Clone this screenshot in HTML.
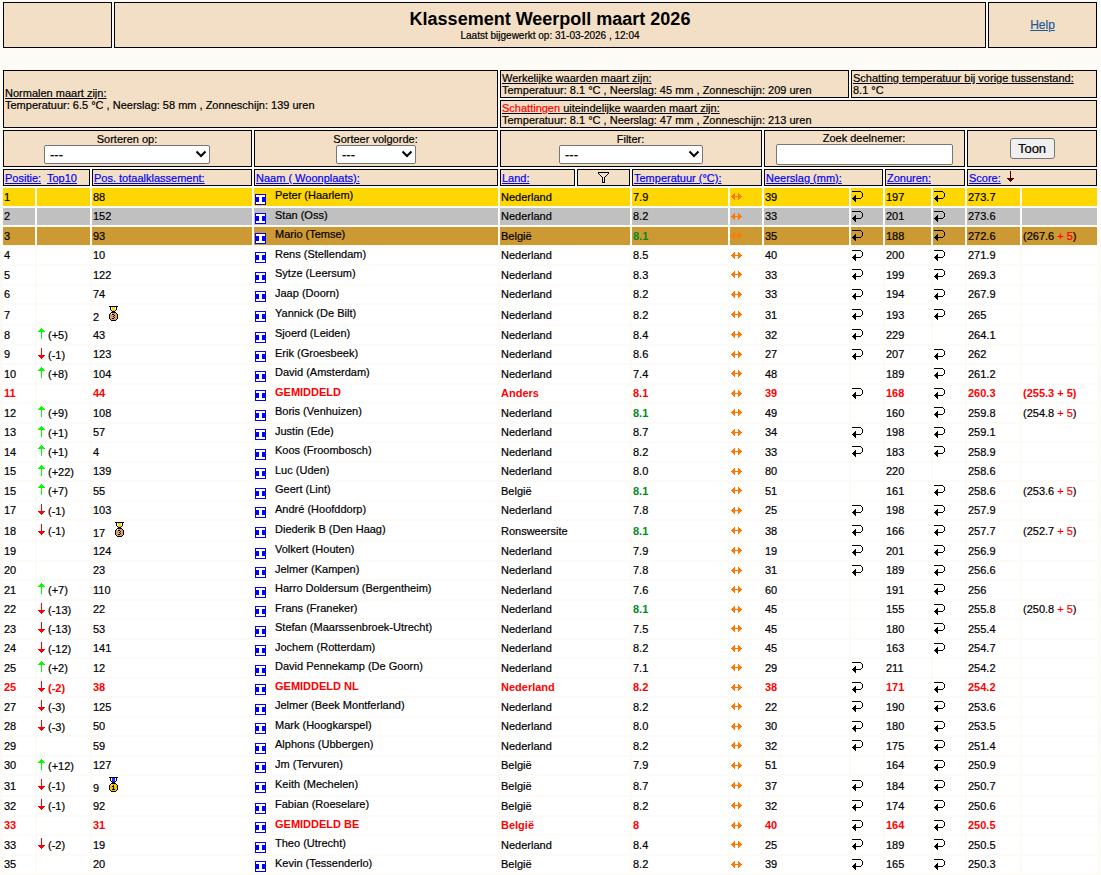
<!DOCTYPE html>
<html><head><meta charset="utf-8"><title>Klassement Weerpoll maart 2026</title>
<style>
html,body{margin:0;padding:0;}
body{background:#fcfbf6;width:1101px;height:875px;overflow:hidden;position:relative;font-family:'Liberation Sans',sans-serif;}
.bx{position:absolute;box-sizing:border-box;border:1px solid #000;}
.r{position:absolute;}
.t{position:absolute;white-space:nowrap;line-height:20px;height:20px;color:#000;-webkit-text-stroke:0.2px currentColor;}
.t.bd{-webkit-text-stroke:0;}
.t.c span{position:absolute;left:0;transform:translateX(-50%);white-space:nowrap;}
.ic{position:absolute;overflow:visible;}
.sel{position:absolute;box-sizing:border-box;border:1px solid #767676;border-radius:2px;background:#fff;}
.btn{position:absolute;box-sizing:border-box;border:1px solid #767676;border-radius:3px;background:#efefef;}
u{text-decoration:underline;}
</style></head><body>
<div class="bx" style="left:3px;top:2px;width:109px;height:46px;background:#f3dfc6;"></div>
<div class="bx" style="left:114px;top:2px;width:872px;height:46px;background:#f3dfc6;"></div>
<div class="bx" style="left:988px;top:2px;width:109px;height:46px;background:#f3dfc6;"></div>
<div class="t c bd" style="left:550px;top:9px;font-size:18px;width:0;font-weight:bold;"><span>Klassement Weerpoll maart 2026</span></div>
<div class="t c" style="left:550px;top:26px;font-size:10px;width:0;"><span>Laatst bijgewerkt op: 31-03-2026 , 12:04</span></div>
<div class="t c" style="left:1042.5px;top:15px;font-size:12px;width:0;color:#1e5a96;"><span><u>Help</u></span></div>
<div class="bx" style="left:3px;top:70px;width:495px;height:58px;background:#f3dfc6;"></div>
<div class="t" style="left:5px;top:83px;font-size:11px;"><u>Normalen maart zijn:</u></div>
<div class="t" style="left:5px;top:95px;font-size:11px;">Temperatuur: 6.5 &deg;C , Neerslag: 58 mm , Zonneschijn: 139 uren</div>
<div class="bx" style="left:500px;top:70px;width:349px;height:28px;background:#f3dfc6;"></div>
<div class="t" style="left:502px;top:68px;font-size:11px;"><u>Werkelijke waarden maart zijn:</u></div>
<div class="t" style="left:502px;top:80px;font-size:11px;">Temperatuur: 8.1 &deg;C , Neerslag: 45 mm , Zonneschijn: 209 uren</div>
<div class="bx" style="left:851px;top:70px;width:246px;height:28px;background:#f3dfc6;"></div>
<div class="t" style="left:853px;top:68px;font-size:11px;"><u>Schatting temperatuur bij vorige tussenstand:</u></div>
<div class="t" style="left:853px;top:80px;font-size:11px;">8.1 &deg;C</div>
<div class="bx" style="left:500px;top:100px;width:597px;height:28px;background:#f3dfc6;"></div>
<div class="t" style="left:502px;top:98px;font-size:11px;"><u><span style="color:#f00">Schattingen</span> uiteindelijke waarden maart zijn:</u></div>
<div class="t" style="left:502px;top:110px;font-size:11px;">Temperatuur: 8.1 &deg;C , Neerslag: 47 mm , Zonneschijn: 213 uren</div>
<div class="bx" style="left:3px;top:130px;width:249px;height:37px;background:#f3dfc6;"></div>
<div class="bx" style="left:254px;top:130px;width:244px;height:37px;background:#f3dfc6;"></div>
<div class="bx" style="left:500px;top:130px;width:262px;height:37px;background:#f3dfc6;"></div>
<div class="bx" style="left:764px;top:130px;width:201px;height:37px;background:#f3dfc6;"></div>
<div class="bx" style="left:967px;top:130px;width:130px;height:37px;background:#f3dfc6;"></div>
<div class="t c" style="left:127px;top:129px;font-size:11px;width:0;"><span>Sorteren op:</span></div>
<div class="t c" style="left:375.5px;top:129px;font-size:11px;width:0;"><span>Sorteer volgorde:</span></div>
<div class="t c" style="left:630.5px;top:129px;font-size:11px;width:0;"><span>Filter:</span></div>
<div class="t c" style="left:864px;top:128px;font-size:11px;width:0;"><span>Zoek deelnemer:</span></div>
<div class="sel" style="left:44px;top:145px;width:166px;height:19px"></div>
<div class="t" style="left:50px;top:145px;font-size:13px;font-size:13px;">---</div>
<svg class="ic" style="left:195px;top:150px" width="12" height="9"><path d="M1.5 1.5 L6 6 L10.5 1.5" stroke="#000" stroke-width="2" fill="none"/></svg>
<div class="sel" style="left:336px;top:145px;width:80px;height:19px"></div>
<div class="t" style="left:342px;top:145px;font-size:13px;font-size:13px;">---</div>
<svg class="ic" style="left:401px;top:150px" width="12" height="9"><path d="M1.5 1.5 L6 6 L10.5 1.5" stroke="#000" stroke-width="2" fill="none"/></svg>
<div class="sel" style="left:559px;top:145px;width:144px;height:19px"></div>
<div class="t" style="left:565px;top:145px;font-size:13px;font-size:13px;">---</div>
<svg class="ic" style="left:688px;top:150px" width="12" height="9"><path d="M1.5 1.5 L6 6 L10.5 1.5" stroke="#000" stroke-width="2" fill="none"/></svg>
<div class="sel" style="left:776px;top:144px;width:177px;height:21px"></div>
<div class="btn" style="left:1010px;top:138px;width:45px;height:21px"></div>
<div class="t c" style="left:1032px;top:139px;font-size:13px;width:0;"><span>Toon</span></div>
<div class="bx" style="left:3px;top:169px;width:87px;height:17px;background:#f3dfc6;"></div>
<div class="bx" style="left:92px;top:169px;width:160px;height:17px;background:#f3dfc6;"></div>
<div class="bx" style="left:254px;top:169px;width:244px;height:17px;background:#f3dfc6;"></div>
<div class="bx" style="left:500px;top:169px;width:75px;height:17px;background:#f3dfc6;"></div>
<div class="bx" style="left:577px;top:169px;width:53px;height:17px;background:#f3dfc6;"></div>
<div class="bx" style="left:632px;top:169px;width:130px;height:17px;background:#f3dfc6;"></div>
<div class="bx" style="left:764px;top:169px;width:119px;height:17px;background:#f3dfc6;"></div>
<div class="bx" style="left:885px;top:169px;width:80px;height:17px;background:#f3dfc6;"></div>
<div class="bx" style="left:967px;top:169px;width:130px;height:17px;background:#f3dfc6;"></div>
<div class="t" style="left:5px;top:168px;font-size:11px;color:#0000ff;"><u>Positie:</u></div>
<div class="t" style="left:47px;top:168px;font-size:11px;color:#0000ff;"><u>Top10</u></div>
<div class="t" style="left:94px;top:168px;font-size:11px;color:#0000ff;"><u>Pos. totaalklassement:</u></div>
<div class="t" style="left:256px;top:168px;font-size:11px;color:#0000ff;"><u>Naam ( Woonplaats):</u></div>
<div class="t" style="left:502px;top:168px;font-size:11px;color:#0000ff;"><u>Land:</u></div>
<svg class="ic" style="left:598px;top:172px" width="11" height="11" shape-rendering="crispEdges"><rect x="0" y="0" width="11" height="1" fill="#000000"/><rect x="0" y="1" width="1" height="1" fill="#000000"/><rect x="10" y="1" width="1" height="1" fill="#000000"/><rect x="1" y="2" width="1" height="1" fill="#000000"/><rect x="9" y="2" width="1" height="1" fill="#000000"/><rect x="2" y="3" width="1" height="1" fill="#000000"/><rect x="8" y="3" width="1" height="1" fill="#000000"/><rect x="3" y="4" width="1" height="1" fill="#000000"/><rect x="7" y="4" width="1" height="1" fill="#000000"/><rect x="4" y="5" width="1" height="1" fill="#000000"/><rect x="6" y="5" width="1" height="1" fill="#000000"/><rect x="4" y="6" width="1" height="1" fill="#000000"/><rect x="6" y="6" width="1" height="1" fill="#000000"/><rect x="4" y="7" width="1" height="1" fill="#000000"/><rect x="6" y="7" width="1" height="1" fill="#000000"/><rect x="4" y="8" width="1" height="1" fill="#000000"/><rect x="6" y="8" width="1" height="1" fill="#000000"/><rect x="4" y="9" width="1" height="1" fill="#000000"/><rect x="6" y="9" width="1" height="1" fill="#000000"/><rect x="4" y="10" width="3" height="1" fill="#000000"/></svg>
<div class="t" style="left:634px;top:168px;font-size:11px;color:#0000ff;"><u>Temperatuur (&deg;C):</u></div>
<div class="t" style="left:766px;top:168px;font-size:11px;color:#0000ff;"><u>Neerslag (mm):</u></div>
<div class="t" style="left:887px;top:168px;font-size:11px;color:#0000ff;"><u>Zonuren:</u></div>
<div class="t" style="left:969px;top:168px;font-size:11px;color:#0000ff;"><u>Score:</u></div>
<svg class="ic" style="left:1007px;top:171px" width="7" height="11" shape-rendering="crispEdges"><rect x="3" y="0" width="1" height="1" fill="#4c0000"/><rect x="3" y="1" width="1" height="1" fill="#4c0000"/><rect x="3" y="2" width="1" height="1" fill="#4c0000"/><rect x="3" y="3" width="1" height="1" fill="#4c0000"/><rect x="3" y="4" width="1" height="1" fill="#4c0000"/><rect x="3" y="5" width="1" height="1" fill="#4c0000"/><rect x="3" y="6" width="1" height="1" fill="#4c0000"/><rect x="0" y="7" width="7" height="1" fill="#4c0000"/><rect x="1" y="8" width="5" height="1" fill="#4c0000"/><rect x="2" y="9" width="3" height="1" fill="#4c0000"/><rect x="3" y="10" width="1" height="1" fill="#4c0000"/></svg>
<div class="r" style="left:3px;top:188px;width:32px;height:18px;background:#ffd700"></div>
<div class="r" style="left:37px;top:188px;width:53px;height:18px;background:#ffd700"></div>
<div class="r" style="left:92px;top:188px;width:160px;height:18px;background:#ffd700"></div>
<div class="r" style="left:254px;top:188px;width:244px;height:18px;background:#ffd700"></div>
<div class="r" style="left:500px;top:188px;width:130px;height:18px;background:#ffd700"></div>
<div class="r" style="left:632px;top:188px;width:96px;height:18px;background:#ffd700"></div>
<div class="r" style="left:730px;top:188px;width:32px;height:18px;background:#ffd700"></div>
<div class="r" style="left:764px;top:188px;width:85px;height:18px;background:#ffd700"></div>
<div class="r" style="left:851px;top:188px;width:32px;height:18px;background:#ffd700"></div>
<div class="r" style="left:885px;top:188px;width:46px;height:18px;background:#ffd700"></div>
<div class="r" style="left:933px;top:188px;width:32px;height:18px;background:#ffd700"></div>
<div class="r" style="left:967px;top:188px;width:53px;height:18px;background:#ffd700"></div>
<div class="r" style="left:1022px;top:188px;width:75px;height:18px;background:#ffd700"></div>
<div class="t" style="left:4px;top:187px;font-size:11px;">1</div>
<div class="t" style="left:93px;top:187px;font-size:11px;">88</div>
<svg class="ic" style="left:255px;top:194px" width="11" height="11" shape-rendering="crispEdges"><rect x="0" y="0" width="11" height="1" fill="#0000ff"/><rect x="0" y="1" width="1" height="1" fill="#0000ff"/><rect x="1" y="1" width="9" height="1" fill="#ffffff"/><rect x="10" y="1" width="1" height="1" fill="#0000ff"/><rect x="0" y="2" width="1" height="1" fill="#0000ff"/><rect x="1" y="2" width="9" height="1" fill="#ffffff"/><rect x="10" y="2" width="1" height="1" fill="#0000ff"/><rect x="0" y="3" width="4" height="1" fill="#0000ff"/><rect x="4" y="3" width="3" height="1" fill="#ffffff"/><rect x="7" y="3" width="4" height="1" fill="#0000ff"/><rect x="0" y="4" width="4" height="1" fill="#0000ff"/><rect x="4" y="4" width="3" height="1" fill="#ffffff"/><rect x="7" y="4" width="4" height="1" fill="#0000ff"/><rect x="0" y="5" width="4" height="1" fill="#0000ff"/><rect x="4" y="5" width="3" height="1" fill="#ffffff"/><rect x="7" y="5" width="4" height="1" fill="#0000ff"/><rect x="0" y="6" width="4" height="1" fill="#0000ff"/><rect x="4" y="6" width="3" height="1" fill="#ffffff"/><rect x="7" y="6" width="4" height="1" fill="#0000ff"/><rect x="0" y="7" width="4" height="1" fill="#0000ff"/><rect x="4" y="7" width="3" height="1" fill="#ffffff"/><rect x="7" y="7" width="4" height="1" fill="#0000ff"/><rect x="0" y="8" width="1" height="1" fill="#0000ff"/><rect x="1" y="8" width="9" height="1" fill="#ffffff"/><rect x="10" y="8" width="1" height="1" fill="#0000ff"/><rect x="0" y="9" width="1" height="1" fill="#0000ff"/><rect x="1" y="9" width="9" height="1" fill="#ffffff"/><rect x="10" y="9" width="1" height="1" fill="#0000ff"/><rect x="0" y="10" width="11" height="1" fill="#0000ff"/></svg>
<div class="t" style="left:275px;top:185px;font-size:11px;">Peter (Haarlem)</div>
<div class="t" style="left:501px;top:187px;font-size:11px;">Nederland</div>
<div class="t" style="left:633px;top:187px;font-size:11px;">7.9</div>
<svg class="ic" style="left:731px;top:193px" width="11" height="7" shape-rendering="crispEdges"><rect x="3" y="0" width="1" height="1" fill="#ff7800"/><rect x="7" y="0" width="1" height="1" fill="#ff7800"/><rect x="2" y="1" width="2" height="1" fill="#ff7800"/><rect x="7" y="1" width="2" height="1" fill="#ff7800"/><rect x="1" y="2" width="3" height="1" fill="#ff7800"/><rect x="7" y="2" width="3" height="1" fill="#ff7800"/><rect x="0" y="3" width="11" height="1" fill="#ff7800"/><rect x="1" y="4" width="3" height="1" fill="#ff7800"/><rect x="7" y="4" width="3" height="1" fill="#ff7800"/><rect x="2" y="5" width="2" height="1" fill="#ff7800"/><rect x="7" y="5" width="2" height="1" fill="#ff7800"/><rect x="3" y="6" width="1" height="1" fill="#ff7800"/><rect x="7" y="6" width="1" height="1" fill="#ff7800"/></svg>
<div class="t" style="left:765px;top:187px;font-size:11px;">39</div>
<svg class="ic" style="left:852px;top:191px" width="11" height="11" shape-rendering="crispEdges"><rect x="0" y="0" width="9" height="1" fill="#000000"/><rect x="9" y="1" width="1" height="1" fill="#000000"/><rect x="10" y="2" width="1" height="1" fill="#000000"/><rect x="10" y="3" width="1" height="1" fill="#000000"/><rect x="3" y="4" width="1" height="1" fill="#000000"/><rect x="10" y="4" width="1" height="1" fill="#000000"/><rect x="2" y="5" width="2" height="1" fill="#000000"/><rect x="10" y="5" width="1" height="1" fill="#000000"/><rect x="1" y="6" width="3" height="1" fill="#000000"/><rect x="9" y="6" width="1" height="1" fill="#000000"/><rect x="0" y="7" width="9" height="1" fill="#000000"/><rect x="1" y="8" width="3" height="1" fill="#000000"/><rect x="2" y="9" width="2" height="1" fill="#000000"/><rect x="3" y="10" width="1" height="1" fill="#000000"/></svg>
<div class="t" style="left:886px;top:187px;font-size:11px;">197</div>
<svg class="ic" style="left:934px;top:191px" width="11" height="11" shape-rendering="crispEdges"><rect x="0" y="0" width="9" height="1" fill="#000000"/><rect x="9" y="1" width="1" height="1" fill="#000000"/><rect x="10" y="2" width="1" height="1" fill="#000000"/><rect x="10" y="3" width="1" height="1" fill="#000000"/><rect x="3" y="4" width="1" height="1" fill="#000000"/><rect x="10" y="4" width="1" height="1" fill="#000000"/><rect x="2" y="5" width="2" height="1" fill="#000000"/><rect x="10" y="5" width="1" height="1" fill="#000000"/><rect x="1" y="6" width="3" height="1" fill="#000000"/><rect x="9" y="6" width="1" height="1" fill="#000000"/><rect x="0" y="7" width="9" height="1" fill="#000000"/><rect x="1" y="8" width="3" height="1" fill="#000000"/><rect x="2" y="9" width="2" height="1" fill="#000000"/><rect x="3" y="10" width="1" height="1" fill="#000000"/></svg>
<div class="t" style="left:968px;top:187px;font-size:11px;">273.7</div>
<div class="r" style="left:3px;top:208px;width:32px;height:17px;background:#c0c0c0"></div>
<div class="r" style="left:37px;top:208px;width:53px;height:17px;background:#c0c0c0"></div>
<div class="r" style="left:92px;top:208px;width:160px;height:17px;background:#c0c0c0"></div>
<div class="r" style="left:254px;top:208px;width:244px;height:17px;background:#c0c0c0"></div>
<div class="r" style="left:500px;top:208px;width:130px;height:17px;background:#c0c0c0"></div>
<div class="r" style="left:632px;top:208px;width:96px;height:17px;background:#c0c0c0"></div>
<div class="r" style="left:730px;top:208px;width:32px;height:17px;background:#c0c0c0"></div>
<div class="r" style="left:764px;top:208px;width:85px;height:17px;background:#c0c0c0"></div>
<div class="r" style="left:851px;top:208px;width:32px;height:17px;background:#c0c0c0"></div>
<div class="r" style="left:885px;top:208px;width:46px;height:17px;background:#c0c0c0"></div>
<div class="r" style="left:933px;top:208px;width:32px;height:17px;background:#c0c0c0"></div>
<div class="r" style="left:967px;top:208px;width:53px;height:17px;background:#c0c0c0"></div>
<div class="r" style="left:1022px;top:208px;width:75px;height:17px;background:#c0c0c0"></div>
<div class="t" style="left:4px;top:206px;font-size:11px;">2</div>
<div class="t" style="left:93px;top:206px;font-size:11px;">152</div>
<svg class="ic" style="left:255px;top:213px" width="11" height="11" shape-rendering="crispEdges"><rect x="0" y="0" width="11" height="1" fill="#0000ff"/><rect x="0" y="1" width="1" height="1" fill="#0000ff"/><rect x="1" y="1" width="9" height="1" fill="#ffffff"/><rect x="10" y="1" width="1" height="1" fill="#0000ff"/><rect x="0" y="2" width="1" height="1" fill="#0000ff"/><rect x="1" y="2" width="9" height="1" fill="#ffffff"/><rect x="10" y="2" width="1" height="1" fill="#0000ff"/><rect x="0" y="3" width="4" height="1" fill="#0000ff"/><rect x="4" y="3" width="3" height="1" fill="#ffffff"/><rect x="7" y="3" width="4" height="1" fill="#0000ff"/><rect x="0" y="4" width="4" height="1" fill="#0000ff"/><rect x="4" y="4" width="3" height="1" fill="#ffffff"/><rect x="7" y="4" width="4" height="1" fill="#0000ff"/><rect x="0" y="5" width="4" height="1" fill="#0000ff"/><rect x="4" y="5" width="3" height="1" fill="#ffffff"/><rect x="7" y="5" width="4" height="1" fill="#0000ff"/><rect x="0" y="6" width="4" height="1" fill="#0000ff"/><rect x="4" y="6" width="3" height="1" fill="#ffffff"/><rect x="7" y="6" width="4" height="1" fill="#0000ff"/><rect x="0" y="7" width="4" height="1" fill="#0000ff"/><rect x="4" y="7" width="3" height="1" fill="#ffffff"/><rect x="7" y="7" width="4" height="1" fill="#0000ff"/><rect x="0" y="8" width="1" height="1" fill="#0000ff"/><rect x="1" y="8" width="9" height="1" fill="#ffffff"/><rect x="10" y="8" width="1" height="1" fill="#0000ff"/><rect x="0" y="9" width="1" height="1" fill="#0000ff"/><rect x="1" y="9" width="9" height="1" fill="#ffffff"/><rect x="10" y="9" width="1" height="1" fill="#0000ff"/><rect x="0" y="10" width="11" height="1" fill="#0000ff"/></svg>
<div class="t" style="left:275px;top:205px;font-size:11px;">Stan (Oss)</div>
<div class="t" style="left:501px;top:206px;font-size:11px;">Nederland</div>
<div class="t" style="left:633px;top:206px;font-size:11px;">8.2</div>
<svg class="ic" style="left:731px;top:213px" width="11" height="7" shape-rendering="crispEdges"><rect x="3" y="0" width="1" height="1" fill="#ff7800"/><rect x="7" y="0" width="1" height="1" fill="#ff7800"/><rect x="2" y="1" width="2" height="1" fill="#ff7800"/><rect x="7" y="1" width="2" height="1" fill="#ff7800"/><rect x="1" y="2" width="3" height="1" fill="#ff7800"/><rect x="7" y="2" width="3" height="1" fill="#ff7800"/><rect x="0" y="3" width="11" height="1" fill="#ff7800"/><rect x="1" y="4" width="3" height="1" fill="#ff7800"/><rect x="7" y="4" width="3" height="1" fill="#ff7800"/><rect x="2" y="5" width="2" height="1" fill="#ff7800"/><rect x="7" y="5" width="2" height="1" fill="#ff7800"/><rect x="3" y="6" width="1" height="1" fill="#ff7800"/><rect x="7" y="6" width="1" height="1" fill="#ff7800"/></svg>
<div class="t" style="left:765px;top:206px;font-size:11px;">33</div>
<svg class="ic" style="left:852px;top:211px" width="11" height="11" shape-rendering="crispEdges"><rect x="0" y="0" width="9" height="1" fill="#000000"/><rect x="9" y="1" width="1" height="1" fill="#000000"/><rect x="10" y="2" width="1" height="1" fill="#000000"/><rect x="10" y="3" width="1" height="1" fill="#000000"/><rect x="3" y="4" width="1" height="1" fill="#000000"/><rect x="10" y="4" width="1" height="1" fill="#000000"/><rect x="2" y="5" width="2" height="1" fill="#000000"/><rect x="10" y="5" width="1" height="1" fill="#000000"/><rect x="1" y="6" width="3" height="1" fill="#000000"/><rect x="9" y="6" width="1" height="1" fill="#000000"/><rect x="0" y="7" width="9" height="1" fill="#000000"/><rect x="1" y="8" width="3" height="1" fill="#000000"/><rect x="2" y="9" width="2" height="1" fill="#000000"/><rect x="3" y="10" width="1" height="1" fill="#000000"/></svg>
<div class="t" style="left:886px;top:206px;font-size:11px;">201</div>
<svg class="ic" style="left:934px;top:211px" width="11" height="11" shape-rendering="crispEdges"><rect x="0" y="0" width="9" height="1" fill="#000000"/><rect x="9" y="1" width="1" height="1" fill="#000000"/><rect x="10" y="2" width="1" height="1" fill="#000000"/><rect x="10" y="3" width="1" height="1" fill="#000000"/><rect x="3" y="4" width="1" height="1" fill="#000000"/><rect x="10" y="4" width="1" height="1" fill="#000000"/><rect x="2" y="5" width="2" height="1" fill="#000000"/><rect x="10" y="5" width="1" height="1" fill="#000000"/><rect x="1" y="6" width="3" height="1" fill="#000000"/><rect x="9" y="6" width="1" height="1" fill="#000000"/><rect x="0" y="7" width="9" height="1" fill="#000000"/><rect x="1" y="8" width="3" height="1" fill="#000000"/><rect x="2" y="9" width="2" height="1" fill="#000000"/><rect x="3" y="10" width="1" height="1" fill="#000000"/></svg>
<div class="t" style="left:968px;top:206px;font-size:11px;">273.6</div>
<div class="r" style="left:3px;top:227px;width:32px;height:18px;background:#cc9933"></div>
<div class="r" style="left:37px;top:227px;width:53px;height:18px;background:#cc9933"></div>
<div class="r" style="left:92px;top:227px;width:160px;height:18px;background:#cc9933"></div>
<div class="r" style="left:254px;top:227px;width:244px;height:18px;background:#cc9933"></div>
<div class="r" style="left:500px;top:227px;width:130px;height:18px;background:#cc9933"></div>
<div class="r" style="left:632px;top:227px;width:96px;height:18px;background:#cc9933"></div>
<div class="r" style="left:730px;top:227px;width:32px;height:18px;background:#cc9933"></div>
<div class="r" style="left:764px;top:227px;width:85px;height:18px;background:#cc9933"></div>
<div class="r" style="left:851px;top:227px;width:32px;height:18px;background:#cc9933"></div>
<div class="r" style="left:885px;top:227px;width:46px;height:18px;background:#cc9933"></div>
<div class="r" style="left:933px;top:227px;width:32px;height:18px;background:#cc9933"></div>
<div class="r" style="left:967px;top:227px;width:53px;height:18px;background:#cc9933"></div>
<div class="r" style="left:1022px;top:227px;width:75px;height:18px;background:#cc9933"></div>
<div class="t" style="left:4px;top:226px;font-size:11px;">3</div>
<div class="t" style="left:93px;top:226px;font-size:11px;">93</div>
<svg class="ic" style="left:255px;top:233px" width="11" height="11" shape-rendering="crispEdges"><rect x="0" y="0" width="11" height="1" fill="#0000ff"/><rect x="0" y="1" width="1" height="1" fill="#0000ff"/><rect x="1" y="1" width="9" height="1" fill="#ffffff"/><rect x="10" y="1" width="1" height="1" fill="#0000ff"/><rect x="0" y="2" width="1" height="1" fill="#0000ff"/><rect x="1" y="2" width="9" height="1" fill="#ffffff"/><rect x="10" y="2" width="1" height="1" fill="#0000ff"/><rect x="0" y="3" width="4" height="1" fill="#0000ff"/><rect x="4" y="3" width="3" height="1" fill="#ffffff"/><rect x="7" y="3" width="4" height="1" fill="#0000ff"/><rect x="0" y="4" width="4" height="1" fill="#0000ff"/><rect x="4" y="4" width="3" height="1" fill="#ffffff"/><rect x="7" y="4" width="4" height="1" fill="#0000ff"/><rect x="0" y="5" width="4" height="1" fill="#0000ff"/><rect x="4" y="5" width="3" height="1" fill="#ffffff"/><rect x="7" y="5" width="4" height="1" fill="#0000ff"/><rect x="0" y="6" width="4" height="1" fill="#0000ff"/><rect x="4" y="6" width="3" height="1" fill="#ffffff"/><rect x="7" y="6" width="4" height="1" fill="#0000ff"/><rect x="0" y="7" width="4" height="1" fill="#0000ff"/><rect x="4" y="7" width="3" height="1" fill="#ffffff"/><rect x="7" y="7" width="4" height="1" fill="#0000ff"/><rect x="0" y="8" width="1" height="1" fill="#0000ff"/><rect x="1" y="8" width="9" height="1" fill="#ffffff"/><rect x="10" y="8" width="1" height="1" fill="#0000ff"/><rect x="0" y="9" width="1" height="1" fill="#0000ff"/><rect x="1" y="9" width="9" height="1" fill="#ffffff"/><rect x="10" y="9" width="1" height="1" fill="#0000ff"/><rect x="0" y="10" width="11" height="1" fill="#0000ff"/></svg>
<div class="t" style="left:275px;top:224px;font-size:11px;">Mario (Temse)</div>
<div class="t" style="left:501px;top:226px;font-size:11px;">Belgi&euml;</div>
<div class="t bd" style="left:633px;top:226px;font-size:11px;font-weight:bold;color:#008c1e;">8.1</div>
<svg class="ic" style="left:731px;top:232px" width="11" height="7" shape-rendering="crispEdges"><rect x="3" y="0" width="1" height="1" fill="#ff7800"/><rect x="7" y="0" width="1" height="1" fill="#ff7800"/><rect x="2" y="1" width="2" height="1" fill="#ff7800"/><rect x="7" y="1" width="2" height="1" fill="#ff7800"/><rect x="1" y="2" width="3" height="1" fill="#ff7800"/><rect x="7" y="2" width="3" height="1" fill="#ff7800"/><rect x="0" y="3" width="11" height="1" fill="#ff7800"/><rect x="1" y="4" width="3" height="1" fill="#ff7800"/><rect x="7" y="4" width="3" height="1" fill="#ff7800"/><rect x="2" y="5" width="2" height="1" fill="#ff7800"/><rect x="7" y="5" width="2" height="1" fill="#ff7800"/><rect x="3" y="6" width="1" height="1" fill="#ff7800"/><rect x="7" y="6" width="1" height="1" fill="#ff7800"/></svg>
<div class="t" style="left:765px;top:226px;font-size:11px;">35</div>
<svg class="ic" style="left:852px;top:230px" width="11" height="11" shape-rendering="crispEdges"><rect x="0" y="0" width="9" height="1" fill="#000000"/><rect x="9" y="1" width="1" height="1" fill="#000000"/><rect x="10" y="2" width="1" height="1" fill="#000000"/><rect x="10" y="3" width="1" height="1" fill="#000000"/><rect x="3" y="4" width="1" height="1" fill="#000000"/><rect x="10" y="4" width="1" height="1" fill="#000000"/><rect x="2" y="5" width="2" height="1" fill="#000000"/><rect x="10" y="5" width="1" height="1" fill="#000000"/><rect x="1" y="6" width="3" height="1" fill="#000000"/><rect x="9" y="6" width="1" height="1" fill="#000000"/><rect x="0" y="7" width="9" height="1" fill="#000000"/><rect x="1" y="8" width="3" height="1" fill="#000000"/><rect x="2" y="9" width="2" height="1" fill="#000000"/><rect x="3" y="10" width="1" height="1" fill="#000000"/></svg>
<div class="t" style="left:886px;top:226px;font-size:11px;">188</div>
<svg class="ic" style="left:934px;top:230px" width="11" height="11" shape-rendering="crispEdges"><rect x="0" y="0" width="9" height="1" fill="#000000"/><rect x="9" y="1" width="1" height="1" fill="#000000"/><rect x="10" y="2" width="1" height="1" fill="#000000"/><rect x="10" y="3" width="1" height="1" fill="#000000"/><rect x="3" y="4" width="1" height="1" fill="#000000"/><rect x="10" y="4" width="1" height="1" fill="#000000"/><rect x="2" y="5" width="2" height="1" fill="#000000"/><rect x="10" y="5" width="1" height="1" fill="#000000"/><rect x="1" y="6" width="3" height="1" fill="#000000"/><rect x="9" y="6" width="1" height="1" fill="#000000"/><rect x="0" y="7" width="9" height="1" fill="#000000"/><rect x="1" y="8" width="3" height="1" fill="#000000"/><rect x="2" y="9" width="2" height="1" fill="#000000"/><rect x="3" y="10" width="1" height="1" fill="#000000"/></svg>
<div class="t" style="left:968px;top:226px;font-size:11px;">272.6</div>
<div class="t" style="left:1023px;top:226px;font-size:11px;">(267.6 <span style="color:#f00">+ 5</span>)</div>
<div class="r" style="left:3px;top:247px;width:32px;height:17px;background:#ffffff"></div>
<div class="r" style="left:37px;top:247px;width:53px;height:17px;background:#ffffff"></div>
<div class="r" style="left:92px;top:247px;width:160px;height:17px;background:#ffffff"></div>
<div class="r" style="left:254px;top:247px;width:244px;height:17px;background:#ffffff"></div>
<div class="r" style="left:500px;top:247px;width:130px;height:17px;background:#ffffff"></div>
<div class="r" style="left:632px;top:247px;width:96px;height:17px;background:#ffffff"></div>
<div class="r" style="left:730px;top:247px;width:32px;height:17px;background:#ffffff"></div>
<div class="r" style="left:764px;top:247px;width:85px;height:17px;background:#ffffff"></div>
<div class="r" style="left:851px;top:247px;width:32px;height:17px;background:#ffffff"></div>
<div class="r" style="left:885px;top:247px;width:46px;height:17px;background:#ffffff"></div>
<div class="r" style="left:933px;top:247px;width:32px;height:17px;background:#ffffff"></div>
<div class="r" style="left:967px;top:247px;width:53px;height:17px;background:#ffffff"></div>
<div class="r" style="left:1022px;top:247px;width:75px;height:17px;background:#ffffff"></div>
<div class="t" style="left:4px;top:245px;font-size:11px;">4</div>
<div class="t" style="left:93px;top:245px;font-size:11px;">10</div>
<svg class="ic" style="left:255px;top:252px" width="11" height="11" shape-rendering="crispEdges"><rect x="0" y="0" width="11" height="1" fill="#0000ff"/><rect x="0" y="1" width="1" height="1" fill="#0000ff"/><rect x="1" y="1" width="9" height="1" fill="#ffffff"/><rect x="10" y="1" width="1" height="1" fill="#0000ff"/><rect x="0" y="2" width="1" height="1" fill="#0000ff"/><rect x="1" y="2" width="9" height="1" fill="#ffffff"/><rect x="10" y="2" width="1" height="1" fill="#0000ff"/><rect x="0" y="3" width="4" height="1" fill="#0000ff"/><rect x="4" y="3" width="3" height="1" fill="#ffffff"/><rect x="7" y="3" width="4" height="1" fill="#0000ff"/><rect x="0" y="4" width="4" height="1" fill="#0000ff"/><rect x="4" y="4" width="3" height="1" fill="#ffffff"/><rect x="7" y="4" width="4" height="1" fill="#0000ff"/><rect x="0" y="5" width="4" height="1" fill="#0000ff"/><rect x="4" y="5" width="3" height="1" fill="#ffffff"/><rect x="7" y="5" width="4" height="1" fill="#0000ff"/><rect x="0" y="6" width="4" height="1" fill="#0000ff"/><rect x="4" y="6" width="3" height="1" fill="#ffffff"/><rect x="7" y="6" width="4" height="1" fill="#0000ff"/><rect x="0" y="7" width="4" height="1" fill="#0000ff"/><rect x="4" y="7" width="3" height="1" fill="#ffffff"/><rect x="7" y="7" width="4" height="1" fill="#0000ff"/><rect x="0" y="8" width="1" height="1" fill="#0000ff"/><rect x="1" y="8" width="9" height="1" fill="#ffffff"/><rect x="10" y="8" width="1" height="1" fill="#0000ff"/><rect x="0" y="9" width="1" height="1" fill="#0000ff"/><rect x="1" y="9" width="9" height="1" fill="#ffffff"/><rect x="10" y="9" width="1" height="1" fill="#0000ff"/><rect x="0" y="10" width="11" height="1" fill="#0000ff"/></svg>
<div class="t" style="left:275px;top:244px;font-size:11px;">Rens (Stellendam)</div>
<div class="t" style="left:501px;top:245px;font-size:11px;">Nederland</div>
<div class="t" style="left:633px;top:245px;font-size:11px;">8.5</div>
<svg class="ic" style="left:731px;top:252px" width="11" height="7" shape-rendering="crispEdges"><rect x="3" y="0" width="1" height="1" fill="#ff7800"/><rect x="7" y="0" width="1" height="1" fill="#ff7800"/><rect x="2" y="1" width="2" height="1" fill="#ff7800"/><rect x="7" y="1" width="2" height="1" fill="#ff7800"/><rect x="1" y="2" width="3" height="1" fill="#ff7800"/><rect x="7" y="2" width="3" height="1" fill="#ff7800"/><rect x="0" y="3" width="11" height="1" fill="#ff7800"/><rect x="1" y="4" width="3" height="1" fill="#ff7800"/><rect x="7" y="4" width="3" height="1" fill="#ff7800"/><rect x="2" y="5" width="2" height="1" fill="#ff7800"/><rect x="7" y="5" width="2" height="1" fill="#ff7800"/><rect x="3" y="6" width="1" height="1" fill="#ff7800"/><rect x="7" y="6" width="1" height="1" fill="#ff7800"/></svg>
<div class="t" style="left:765px;top:245px;font-size:11px;">40</div>
<svg class="ic" style="left:852px;top:250px" width="11" height="11" shape-rendering="crispEdges"><rect x="0" y="0" width="9" height="1" fill="#000000"/><rect x="9" y="1" width="1" height="1" fill="#000000"/><rect x="10" y="2" width="1" height="1" fill="#000000"/><rect x="10" y="3" width="1" height="1" fill="#000000"/><rect x="3" y="4" width="1" height="1" fill="#000000"/><rect x="10" y="4" width="1" height="1" fill="#000000"/><rect x="2" y="5" width="2" height="1" fill="#000000"/><rect x="10" y="5" width="1" height="1" fill="#000000"/><rect x="1" y="6" width="3" height="1" fill="#000000"/><rect x="9" y="6" width="1" height="1" fill="#000000"/><rect x="0" y="7" width="9" height="1" fill="#000000"/><rect x="1" y="8" width="3" height="1" fill="#000000"/><rect x="2" y="9" width="2" height="1" fill="#000000"/><rect x="3" y="10" width="1" height="1" fill="#000000"/></svg>
<div class="t" style="left:886px;top:245px;font-size:11px;">200</div>
<svg class="ic" style="left:934px;top:250px" width="11" height="11" shape-rendering="crispEdges"><rect x="0" y="0" width="9" height="1" fill="#000000"/><rect x="9" y="1" width="1" height="1" fill="#000000"/><rect x="10" y="2" width="1" height="1" fill="#000000"/><rect x="10" y="3" width="1" height="1" fill="#000000"/><rect x="3" y="4" width="1" height="1" fill="#000000"/><rect x="10" y="4" width="1" height="1" fill="#000000"/><rect x="2" y="5" width="2" height="1" fill="#000000"/><rect x="10" y="5" width="1" height="1" fill="#000000"/><rect x="1" y="6" width="3" height="1" fill="#000000"/><rect x="9" y="6" width="1" height="1" fill="#000000"/><rect x="0" y="7" width="9" height="1" fill="#000000"/><rect x="1" y="8" width="3" height="1" fill="#000000"/><rect x="2" y="9" width="2" height="1" fill="#000000"/><rect x="3" y="10" width="1" height="1" fill="#000000"/></svg>
<div class="t" style="left:968px;top:245px;font-size:11px;">271.9</div>
<div class="r" style="left:3px;top:266px;width:32px;height:18px;background:#ffffff"></div>
<div class="r" style="left:37px;top:266px;width:53px;height:18px;background:#ffffff"></div>
<div class="r" style="left:92px;top:266px;width:160px;height:18px;background:#ffffff"></div>
<div class="r" style="left:254px;top:266px;width:244px;height:18px;background:#ffffff"></div>
<div class="r" style="left:500px;top:266px;width:130px;height:18px;background:#ffffff"></div>
<div class="r" style="left:632px;top:266px;width:96px;height:18px;background:#ffffff"></div>
<div class="r" style="left:730px;top:266px;width:32px;height:18px;background:#ffffff"></div>
<div class="r" style="left:764px;top:266px;width:85px;height:18px;background:#ffffff"></div>
<div class="r" style="left:851px;top:266px;width:32px;height:18px;background:#ffffff"></div>
<div class="r" style="left:885px;top:266px;width:46px;height:18px;background:#ffffff"></div>
<div class="r" style="left:933px;top:266px;width:32px;height:18px;background:#ffffff"></div>
<div class="r" style="left:967px;top:266px;width:53px;height:18px;background:#ffffff"></div>
<div class="r" style="left:1022px;top:266px;width:75px;height:18px;background:#ffffff"></div>
<div class="t" style="left:4px;top:265px;font-size:11px;">5</div>
<div class="t" style="left:93px;top:265px;font-size:11px;">122</div>
<svg class="ic" style="left:255px;top:272px" width="11" height="11" shape-rendering="crispEdges"><rect x="0" y="0" width="11" height="1" fill="#0000ff"/><rect x="0" y="1" width="1" height="1" fill="#0000ff"/><rect x="1" y="1" width="9" height="1" fill="#ffffff"/><rect x="10" y="1" width="1" height="1" fill="#0000ff"/><rect x="0" y="2" width="1" height="1" fill="#0000ff"/><rect x="1" y="2" width="9" height="1" fill="#ffffff"/><rect x="10" y="2" width="1" height="1" fill="#0000ff"/><rect x="0" y="3" width="4" height="1" fill="#0000ff"/><rect x="4" y="3" width="3" height="1" fill="#ffffff"/><rect x="7" y="3" width="4" height="1" fill="#0000ff"/><rect x="0" y="4" width="4" height="1" fill="#0000ff"/><rect x="4" y="4" width="3" height="1" fill="#ffffff"/><rect x="7" y="4" width="4" height="1" fill="#0000ff"/><rect x="0" y="5" width="4" height="1" fill="#0000ff"/><rect x="4" y="5" width="3" height="1" fill="#ffffff"/><rect x="7" y="5" width="4" height="1" fill="#0000ff"/><rect x="0" y="6" width="4" height="1" fill="#0000ff"/><rect x="4" y="6" width="3" height="1" fill="#ffffff"/><rect x="7" y="6" width="4" height="1" fill="#0000ff"/><rect x="0" y="7" width="4" height="1" fill="#0000ff"/><rect x="4" y="7" width="3" height="1" fill="#ffffff"/><rect x="7" y="7" width="4" height="1" fill="#0000ff"/><rect x="0" y="8" width="1" height="1" fill="#0000ff"/><rect x="1" y="8" width="9" height="1" fill="#ffffff"/><rect x="10" y="8" width="1" height="1" fill="#0000ff"/><rect x="0" y="9" width="1" height="1" fill="#0000ff"/><rect x="1" y="9" width="9" height="1" fill="#ffffff"/><rect x="10" y="9" width="1" height="1" fill="#0000ff"/><rect x="0" y="10" width="11" height="1" fill="#0000ff"/></svg>
<div class="t" style="left:275px;top:263px;font-size:11px;">Sytze (Leersum)</div>
<div class="t" style="left:501px;top:265px;font-size:11px;">Nederland</div>
<div class="t" style="left:633px;top:265px;font-size:11px;">8.3</div>
<svg class="ic" style="left:731px;top:271px" width="11" height="7" shape-rendering="crispEdges"><rect x="3" y="0" width="1" height="1" fill="#ff7800"/><rect x="7" y="0" width="1" height="1" fill="#ff7800"/><rect x="2" y="1" width="2" height="1" fill="#ff7800"/><rect x="7" y="1" width="2" height="1" fill="#ff7800"/><rect x="1" y="2" width="3" height="1" fill="#ff7800"/><rect x="7" y="2" width="3" height="1" fill="#ff7800"/><rect x="0" y="3" width="11" height="1" fill="#ff7800"/><rect x="1" y="4" width="3" height="1" fill="#ff7800"/><rect x="7" y="4" width="3" height="1" fill="#ff7800"/><rect x="2" y="5" width="2" height="1" fill="#ff7800"/><rect x="7" y="5" width="2" height="1" fill="#ff7800"/><rect x="3" y="6" width="1" height="1" fill="#ff7800"/><rect x="7" y="6" width="1" height="1" fill="#ff7800"/></svg>
<div class="t" style="left:765px;top:265px;font-size:11px;">33</div>
<svg class="ic" style="left:852px;top:269px" width="11" height="11" shape-rendering="crispEdges"><rect x="0" y="0" width="9" height="1" fill="#000000"/><rect x="9" y="1" width="1" height="1" fill="#000000"/><rect x="10" y="2" width="1" height="1" fill="#000000"/><rect x="10" y="3" width="1" height="1" fill="#000000"/><rect x="3" y="4" width="1" height="1" fill="#000000"/><rect x="10" y="4" width="1" height="1" fill="#000000"/><rect x="2" y="5" width="2" height="1" fill="#000000"/><rect x="10" y="5" width="1" height="1" fill="#000000"/><rect x="1" y="6" width="3" height="1" fill="#000000"/><rect x="9" y="6" width="1" height="1" fill="#000000"/><rect x="0" y="7" width="9" height="1" fill="#000000"/><rect x="1" y="8" width="3" height="1" fill="#000000"/><rect x="2" y="9" width="2" height="1" fill="#000000"/><rect x="3" y="10" width="1" height="1" fill="#000000"/></svg>
<div class="t" style="left:886px;top:265px;font-size:11px;">199</div>
<svg class="ic" style="left:934px;top:269px" width="11" height="11" shape-rendering="crispEdges"><rect x="0" y="0" width="9" height="1" fill="#000000"/><rect x="9" y="1" width="1" height="1" fill="#000000"/><rect x="10" y="2" width="1" height="1" fill="#000000"/><rect x="10" y="3" width="1" height="1" fill="#000000"/><rect x="3" y="4" width="1" height="1" fill="#000000"/><rect x="10" y="4" width="1" height="1" fill="#000000"/><rect x="2" y="5" width="2" height="1" fill="#000000"/><rect x="10" y="5" width="1" height="1" fill="#000000"/><rect x="1" y="6" width="3" height="1" fill="#000000"/><rect x="9" y="6" width="1" height="1" fill="#000000"/><rect x="0" y="7" width="9" height="1" fill="#000000"/><rect x="1" y="8" width="3" height="1" fill="#000000"/><rect x="2" y="9" width="2" height="1" fill="#000000"/><rect x="3" y="10" width="1" height="1" fill="#000000"/></svg>
<div class="t" style="left:968px;top:265px;font-size:11px;">269.3</div>
<div class="r" style="left:3px;top:286px;width:32px;height:17px;background:#ffffff"></div>
<div class="r" style="left:37px;top:286px;width:53px;height:17px;background:#ffffff"></div>
<div class="r" style="left:92px;top:286px;width:160px;height:17px;background:#ffffff"></div>
<div class="r" style="left:254px;top:286px;width:244px;height:17px;background:#ffffff"></div>
<div class="r" style="left:500px;top:286px;width:130px;height:17px;background:#ffffff"></div>
<div class="r" style="left:632px;top:286px;width:96px;height:17px;background:#ffffff"></div>
<div class="r" style="left:730px;top:286px;width:32px;height:17px;background:#ffffff"></div>
<div class="r" style="left:764px;top:286px;width:85px;height:17px;background:#ffffff"></div>
<div class="r" style="left:851px;top:286px;width:32px;height:17px;background:#ffffff"></div>
<div class="r" style="left:885px;top:286px;width:46px;height:17px;background:#ffffff"></div>
<div class="r" style="left:933px;top:286px;width:32px;height:17px;background:#ffffff"></div>
<div class="r" style="left:967px;top:286px;width:53px;height:17px;background:#ffffff"></div>
<div class="r" style="left:1022px;top:286px;width:75px;height:17px;background:#ffffff"></div>
<div class="t" style="left:4px;top:284px;font-size:11px;">6</div>
<div class="t" style="left:93px;top:284px;font-size:11px;">74</div>
<svg class="ic" style="left:255px;top:291px" width="11" height="11" shape-rendering="crispEdges"><rect x="0" y="0" width="11" height="1" fill="#0000ff"/><rect x="0" y="1" width="1" height="1" fill="#0000ff"/><rect x="1" y="1" width="9" height="1" fill="#ffffff"/><rect x="10" y="1" width="1" height="1" fill="#0000ff"/><rect x="0" y="2" width="1" height="1" fill="#0000ff"/><rect x="1" y="2" width="9" height="1" fill="#ffffff"/><rect x="10" y="2" width="1" height="1" fill="#0000ff"/><rect x="0" y="3" width="4" height="1" fill="#0000ff"/><rect x="4" y="3" width="3" height="1" fill="#ffffff"/><rect x="7" y="3" width="4" height="1" fill="#0000ff"/><rect x="0" y="4" width="4" height="1" fill="#0000ff"/><rect x="4" y="4" width="3" height="1" fill="#ffffff"/><rect x="7" y="4" width="4" height="1" fill="#0000ff"/><rect x="0" y="5" width="4" height="1" fill="#0000ff"/><rect x="4" y="5" width="3" height="1" fill="#ffffff"/><rect x="7" y="5" width="4" height="1" fill="#0000ff"/><rect x="0" y="6" width="4" height="1" fill="#0000ff"/><rect x="4" y="6" width="3" height="1" fill="#ffffff"/><rect x="7" y="6" width="4" height="1" fill="#0000ff"/><rect x="0" y="7" width="4" height="1" fill="#0000ff"/><rect x="4" y="7" width="3" height="1" fill="#ffffff"/><rect x="7" y="7" width="4" height="1" fill="#0000ff"/><rect x="0" y="8" width="1" height="1" fill="#0000ff"/><rect x="1" y="8" width="9" height="1" fill="#ffffff"/><rect x="10" y="8" width="1" height="1" fill="#0000ff"/><rect x="0" y="9" width="1" height="1" fill="#0000ff"/><rect x="1" y="9" width="9" height="1" fill="#ffffff"/><rect x="10" y="9" width="1" height="1" fill="#0000ff"/><rect x="0" y="10" width="11" height="1" fill="#0000ff"/></svg>
<div class="t" style="left:275px;top:283px;font-size:11px;">Jaap (Doorn)</div>
<div class="t" style="left:501px;top:284px;font-size:11px;">Nederland</div>
<div class="t" style="left:633px;top:284px;font-size:11px;">8.2</div>
<svg class="ic" style="left:731px;top:291px" width="11" height="7" shape-rendering="crispEdges"><rect x="3" y="0" width="1" height="1" fill="#ff7800"/><rect x="7" y="0" width="1" height="1" fill="#ff7800"/><rect x="2" y="1" width="2" height="1" fill="#ff7800"/><rect x="7" y="1" width="2" height="1" fill="#ff7800"/><rect x="1" y="2" width="3" height="1" fill="#ff7800"/><rect x="7" y="2" width="3" height="1" fill="#ff7800"/><rect x="0" y="3" width="11" height="1" fill="#ff7800"/><rect x="1" y="4" width="3" height="1" fill="#ff7800"/><rect x="7" y="4" width="3" height="1" fill="#ff7800"/><rect x="2" y="5" width="2" height="1" fill="#ff7800"/><rect x="7" y="5" width="2" height="1" fill="#ff7800"/><rect x="3" y="6" width="1" height="1" fill="#ff7800"/><rect x="7" y="6" width="1" height="1" fill="#ff7800"/></svg>
<div class="t" style="left:765px;top:284px;font-size:11px;">33</div>
<svg class="ic" style="left:852px;top:289px" width="11" height="11" shape-rendering="crispEdges"><rect x="0" y="0" width="9" height="1" fill="#000000"/><rect x="9" y="1" width="1" height="1" fill="#000000"/><rect x="10" y="2" width="1" height="1" fill="#000000"/><rect x="10" y="3" width="1" height="1" fill="#000000"/><rect x="3" y="4" width="1" height="1" fill="#000000"/><rect x="10" y="4" width="1" height="1" fill="#000000"/><rect x="2" y="5" width="2" height="1" fill="#000000"/><rect x="10" y="5" width="1" height="1" fill="#000000"/><rect x="1" y="6" width="3" height="1" fill="#000000"/><rect x="9" y="6" width="1" height="1" fill="#000000"/><rect x="0" y="7" width="9" height="1" fill="#000000"/><rect x="1" y="8" width="3" height="1" fill="#000000"/><rect x="2" y="9" width="2" height="1" fill="#000000"/><rect x="3" y="10" width="1" height="1" fill="#000000"/></svg>
<div class="t" style="left:886px;top:284px;font-size:11px;">194</div>
<svg class="ic" style="left:934px;top:289px" width="11" height="11" shape-rendering="crispEdges"><rect x="0" y="0" width="9" height="1" fill="#000000"/><rect x="9" y="1" width="1" height="1" fill="#000000"/><rect x="10" y="2" width="1" height="1" fill="#000000"/><rect x="10" y="3" width="1" height="1" fill="#000000"/><rect x="3" y="4" width="1" height="1" fill="#000000"/><rect x="10" y="4" width="1" height="1" fill="#000000"/><rect x="2" y="5" width="2" height="1" fill="#000000"/><rect x="10" y="5" width="1" height="1" fill="#000000"/><rect x="1" y="6" width="3" height="1" fill="#000000"/><rect x="9" y="6" width="1" height="1" fill="#000000"/><rect x="0" y="7" width="9" height="1" fill="#000000"/><rect x="1" y="8" width="3" height="1" fill="#000000"/><rect x="2" y="9" width="2" height="1" fill="#000000"/><rect x="3" y="10" width="1" height="1" fill="#000000"/></svg>
<div class="t" style="left:968px;top:284px;font-size:11px;">267.9</div>
<div class="r" style="left:3px;top:305px;width:32px;height:19px;background:#ffffff"></div>
<div class="r" style="left:37px;top:305px;width:53px;height:19px;background:#ffffff"></div>
<div class="r" style="left:92px;top:305px;width:160px;height:19px;background:#ffffff"></div>
<div class="r" style="left:254px;top:305px;width:244px;height:19px;background:#ffffff"></div>
<div class="r" style="left:500px;top:305px;width:130px;height:19px;background:#ffffff"></div>
<div class="r" style="left:632px;top:305px;width:96px;height:19px;background:#ffffff"></div>
<div class="r" style="left:730px;top:305px;width:32px;height:19px;background:#ffffff"></div>
<div class="r" style="left:764px;top:305px;width:85px;height:19px;background:#ffffff"></div>
<div class="r" style="left:851px;top:305px;width:32px;height:19px;background:#ffffff"></div>
<div class="r" style="left:885px;top:305px;width:46px;height:19px;background:#ffffff"></div>
<div class="r" style="left:933px;top:305px;width:32px;height:19px;background:#ffffff"></div>
<div class="r" style="left:967px;top:305px;width:53px;height:19px;background:#ffffff"></div>
<div class="r" style="left:1022px;top:305px;width:75px;height:19px;background:#ffffff"></div>
<div class="t" style="left:4px;top:305px;font-size:11px;">7</div>
<div class="t" style="left:93px;top:307px;font-size:11px;">2</div>
<svg class="ic" style="left:109px;top:306px" width="9" height="15" shape-rendering="crispEdges"><rect x="0" y="0" width="9" height="1" fill="#000000"/><rect x="1" y="1" width="1" height="1" fill="#000000"/><rect x="2" y="1" width="1" height="1" fill="#ffffff"/><rect x="3" y="1" width="3" height="1" fill="#ffd800"/><rect x="6" y="1" width="1" height="1" fill="#ffffff"/><rect x="7" y="1" width="1" height="1" fill="#000000"/><rect x="1" y="2" width="1" height="1" fill="#000000"/><rect x="2" y="2" width="1" height="1" fill="#ffffff"/><rect x="3" y="2" width="3" height="1" fill="#ffd800"/><rect x="6" y="2" width="1" height="1" fill="#ffffff"/><rect x="7" y="2" width="1" height="1" fill="#000000"/><rect x="1" y="3" width="1" height="1" fill="#000000"/><rect x="2" y="3" width="1" height="1" fill="#ffffff"/><rect x="3" y="3" width="3" height="1" fill="#ffd800"/><rect x="6" y="3" width="1" height="1" fill="#ffffff"/><rect x="7" y="3" width="1" height="1" fill="#000000"/><rect x="2" y="4" width="1" height="1" fill="#000000"/><rect x="3" y="4" width="3" height="1" fill="#ffd800"/><rect x="6" y="4" width="1" height="1" fill="#000000"/><rect x="3" y="5" width="3" height="1" fill="#000000"/><rect x="2" y="6" width="5" height="1" fill="#000000"/><rect x="1" y="7" width="1" height="1" fill="#000000"/><rect x="2" y="7" width="1" height="1" fill="#ffffff"/><rect x="3" y="7" width="4" height="1" fill="#dca060"/><rect x="7" y="7" width="1" height="1" fill="#000000"/><rect x="0" y="8" width="1" height="1" fill="#000000"/><rect x="1" y="8" width="2" height="1" fill="#dca060"/><rect x="3" y="8" width="2" height="1" fill="#000000"/><rect x="5" y="8" width="3" height="1" fill="#dca060"/><rect x="8" y="8" width="1" height="1" fill="#000000"/><rect x="0" y="9" width="1" height="1" fill="#000000"/><rect x="1" y="9" width="4" height="1" fill="#dca060"/><rect x="5" y="9" width="1" height="1" fill="#000000"/><rect x="6" y="9" width="2" height="1" fill="#dca060"/><rect x="8" y="9" width="1" height="1" fill="#000000"/><rect x="0" y="10" width="1" height="1" fill="#000000"/><rect x="1" y="10" width="3" height="1" fill="#dca060"/><rect x="4" y="10" width="1" height="1" fill="#000000"/><rect x="5" y="10" width="3" height="1" fill="#dca060"/><rect x="8" y="10" width="1" height="1" fill="#000000"/><rect x="0" y="11" width="1" height="1" fill="#000000"/><rect x="1" y="11" width="4" height="1" fill="#dca060"/><rect x="5" y="11" width="1" height="1" fill="#000000"/><rect x="6" y="11" width="2" height="1" fill="#dca060"/><rect x="8" y="11" width="1" height="1" fill="#000000"/><rect x="0" y="12" width="1" height="1" fill="#000000"/><rect x="1" y="12" width="2" height="1" fill="#dca060"/><rect x="3" y="12" width="2" height="1" fill="#000000"/><rect x="5" y="12" width="3" height="1" fill="#dca060"/><rect x="8" y="12" width="1" height="1" fill="#000000"/><rect x="1" y="13" width="1" height="1" fill="#000000"/><rect x="2" y="13" width="5" height="1" fill="#dca060"/><rect x="7" y="13" width="1" height="1" fill="#000000"/><rect x="2" y="14" width="5" height="1" fill="#000000"/></svg>
<svg class="ic" style="left:255px;top:311px" width="11" height="11" shape-rendering="crispEdges"><rect x="0" y="0" width="11" height="1" fill="#0000ff"/><rect x="0" y="1" width="1" height="1" fill="#0000ff"/><rect x="1" y="1" width="9" height="1" fill="#ffffff"/><rect x="10" y="1" width="1" height="1" fill="#0000ff"/><rect x="0" y="2" width="1" height="1" fill="#0000ff"/><rect x="1" y="2" width="9" height="1" fill="#ffffff"/><rect x="10" y="2" width="1" height="1" fill="#0000ff"/><rect x="0" y="3" width="4" height="1" fill="#0000ff"/><rect x="4" y="3" width="3" height="1" fill="#ffffff"/><rect x="7" y="3" width="4" height="1" fill="#0000ff"/><rect x="0" y="4" width="4" height="1" fill="#0000ff"/><rect x="4" y="4" width="3" height="1" fill="#ffffff"/><rect x="7" y="4" width="4" height="1" fill="#0000ff"/><rect x="0" y="5" width="4" height="1" fill="#0000ff"/><rect x="4" y="5" width="3" height="1" fill="#ffffff"/><rect x="7" y="5" width="4" height="1" fill="#0000ff"/><rect x="0" y="6" width="4" height="1" fill="#0000ff"/><rect x="4" y="6" width="3" height="1" fill="#ffffff"/><rect x="7" y="6" width="4" height="1" fill="#0000ff"/><rect x="0" y="7" width="4" height="1" fill="#0000ff"/><rect x="4" y="7" width="3" height="1" fill="#ffffff"/><rect x="7" y="7" width="4" height="1" fill="#0000ff"/><rect x="0" y="8" width="1" height="1" fill="#0000ff"/><rect x="1" y="8" width="9" height="1" fill="#ffffff"/><rect x="10" y="8" width="1" height="1" fill="#0000ff"/><rect x="0" y="9" width="1" height="1" fill="#0000ff"/><rect x="1" y="9" width="9" height="1" fill="#ffffff"/><rect x="10" y="9" width="1" height="1" fill="#0000ff"/><rect x="0" y="10" width="11" height="1" fill="#0000ff"/></svg>
<div class="t" style="left:275px;top:303px;font-size:11px;">Yannick (De Bilt)</div>
<div class="t" style="left:501px;top:305px;font-size:11px;">Nederland</div>
<div class="t" style="left:633px;top:305px;font-size:11px;">8.2</div>
<svg class="ic" style="left:731px;top:311px" width="11" height="7" shape-rendering="crispEdges"><rect x="3" y="0" width="1" height="1" fill="#ff7800"/><rect x="7" y="0" width="1" height="1" fill="#ff7800"/><rect x="2" y="1" width="2" height="1" fill="#ff7800"/><rect x="7" y="1" width="2" height="1" fill="#ff7800"/><rect x="1" y="2" width="3" height="1" fill="#ff7800"/><rect x="7" y="2" width="3" height="1" fill="#ff7800"/><rect x="0" y="3" width="11" height="1" fill="#ff7800"/><rect x="1" y="4" width="3" height="1" fill="#ff7800"/><rect x="7" y="4" width="3" height="1" fill="#ff7800"/><rect x="2" y="5" width="2" height="1" fill="#ff7800"/><rect x="7" y="5" width="2" height="1" fill="#ff7800"/><rect x="3" y="6" width="1" height="1" fill="#ff7800"/><rect x="7" y="6" width="1" height="1" fill="#ff7800"/></svg>
<div class="t" style="left:765px;top:305px;font-size:11px;">31</div>
<svg class="ic" style="left:852px;top:309px" width="11" height="11" shape-rendering="crispEdges"><rect x="0" y="0" width="9" height="1" fill="#000000"/><rect x="9" y="1" width="1" height="1" fill="#000000"/><rect x="10" y="2" width="1" height="1" fill="#000000"/><rect x="10" y="3" width="1" height="1" fill="#000000"/><rect x="3" y="4" width="1" height="1" fill="#000000"/><rect x="10" y="4" width="1" height="1" fill="#000000"/><rect x="2" y="5" width="2" height="1" fill="#000000"/><rect x="10" y="5" width="1" height="1" fill="#000000"/><rect x="1" y="6" width="3" height="1" fill="#000000"/><rect x="9" y="6" width="1" height="1" fill="#000000"/><rect x="0" y="7" width="9" height="1" fill="#000000"/><rect x="1" y="8" width="3" height="1" fill="#000000"/><rect x="2" y="9" width="2" height="1" fill="#000000"/><rect x="3" y="10" width="1" height="1" fill="#000000"/></svg>
<div class="t" style="left:886px;top:305px;font-size:11px;">193</div>
<svg class="ic" style="left:934px;top:309px" width="11" height="11" shape-rendering="crispEdges"><rect x="0" y="0" width="9" height="1" fill="#000000"/><rect x="9" y="1" width="1" height="1" fill="#000000"/><rect x="10" y="2" width="1" height="1" fill="#000000"/><rect x="10" y="3" width="1" height="1" fill="#000000"/><rect x="3" y="4" width="1" height="1" fill="#000000"/><rect x="10" y="4" width="1" height="1" fill="#000000"/><rect x="2" y="5" width="2" height="1" fill="#000000"/><rect x="10" y="5" width="1" height="1" fill="#000000"/><rect x="1" y="6" width="3" height="1" fill="#000000"/><rect x="9" y="6" width="1" height="1" fill="#000000"/><rect x="0" y="7" width="9" height="1" fill="#000000"/><rect x="1" y="8" width="3" height="1" fill="#000000"/><rect x="2" y="9" width="2" height="1" fill="#000000"/><rect x="3" y="10" width="1" height="1" fill="#000000"/></svg>
<div class="t" style="left:968px;top:305px;font-size:11px;">265</div>
<div class="r" style="left:3px;top:326px;width:32px;height:18px;background:#ffffff"></div>
<div class="r" style="left:37px;top:326px;width:53px;height:18px;background:#ffffff"></div>
<div class="r" style="left:92px;top:326px;width:160px;height:18px;background:#ffffff"></div>
<div class="r" style="left:254px;top:326px;width:244px;height:18px;background:#ffffff"></div>
<div class="r" style="left:500px;top:326px;width:130px;height:18px;background:#ffffff"></div>
<div class="r" style="left:632px;top:326px;width:96px;height:18px;background:#ffffff"></div>
<div class="r" style="left:730px;top:326px;width:32px;height:18px;background:#ffffff"></div>
<div class="r" style="left:764px;top:326px;width:85px;height:18px;background:#ffffff"></div>
<div class="r" style="left:851px;top:326px;width:32px;height:18px;background:#ffffff"></div>
<div class="r" style="left:885px;top:326px;width:46px;height:18px;background:#ffffff"></div>
<div class="r" style="left:933px;top:326px;width:32px;height:18px;background:#ffffff"></div>
<div class="r" style="left:967px;top:326px;width:53px;height:18px;background:#ffffff"></div>
<div class="r" style="left:1022px;top:326px;width:75px;height:18px;background:#ffffff"></div>
<div class="t" style="left:4px;top:325px;font-size:11px;">8</div>
<svg class="ic" style="left:38px;top:328px" width="7" height="11" shape-rendering="crispEdges"><rect x="3" y="0" width="1" height="1" fill="#00ff00"/><rect x="2" y="1" width="3" height="1" fill="#00ff00"/><rect x="1" y="2" width="5" height="1" fill="#00ff00"/><rect x="0" y="3" width="7" height="1" fill="#00ff00"/><rect x="3" y="4" width="1" height="1" fill="#00ff00"/><rect x="3" y="5" width="1" height="1" fill="#00ff00"/><rect x="3" y="6" width="1" height="1" fill="#00ff00"/><rect x="3" y="7" width="1" height="1" fill="#00ff00"/><rect x="3" y="8" width="1" height="1" fill="#00ff00"/><rect x="3" y="9" width="1" height="1" fill="#00ff00"/><rect x="3" y="10" width="1" height="1" fill="#00ff00"/></svg>
<div class="t" style="left:48px;top:325px;font-size:11px;">(+5)</div>
<div class="t" style="left:93px;top:325px;font-size:11px;">43</div>
<svg class="ic" style="left:255px;top:332px" width="11" height="11" shape-rendering="crispEdges"><rect x="0" y="0" width="11" height="1" fill="#0000ff"/><rect x="0" y="1" width="1" height="1" fill="#0000ff"/><rect x="1" y="1" width="9" height="1" fill="#ffffff"/><rect x="10" y="1" width="1" height="1" fill="#0000ff"/><rect x="0" y="2" width="1" height="1" fill="#0000ff"/><rect x="1" y="2" width="9" height="1" fill="#ffffff"/><rect x="10" y="2" width="1" height="1" fill="#0000ff"/><rect x="0" y="3" width="4" height="1" fill="#0000ff"/><rect x="4" y="3" width="3" height="1" fill="#ffffff"/><rect x="7" y="3" width="4" height="1" fill="#0000ff"/><rect x="0" y="4" width="4" height="1" fill="#0000ff"/><rect x="4" y="4" width="3" height="1" fill="#ffffff"/><rect x="7" y="4" width="4" height="1" fill="#0000ff"/><rect x="0" y="5" width="4" height="1" fill="#0000ff"/><rect x="4" y="5" width="3" height="1" fill="#ffffff"/><rect x="7" y="5" width="4" height="1" fill="#0000ff"/><rect x="0" y="6" width="4" height="1" fill="#0000ff"/><rect x="4" y="6" width="3" height="1" fill="#ffffff"/><rect x="7" y="6" width="4" height="1" fill="#0000ff"/><rect x="0" y="7" width="4" height="1" fill="#0000ff"/><rect x="4" y="7" width="3" height="1" fill="#ffffff"/><rect x="7" y="7" width="4" height="1" fill="#0000ff"/><rect x="0" y="8" width="1" height="1" fill="#0000ff"/><rect x="1" y="8" width="9" height="1" fill="#ffffff"/><rect x="10" y="8" width="1" height="1" fill="#0000ff"/><rect x="0" y="9" width="1" height="1" fill="#0000ff"/><rect x="1" y="9" width="9" height="1" fill="#ffffff"/><rect x="10" y="9" width="1" height="1" fill="#0000ff"/><rect x="0" y="10" width="11" height="1" fill="#0000ff"/></svg>
<div class="t" style="left:275px;top:323px;font-size:11px;">Sjoerd (Leiden)</div>
<div class="t" style="left:501px;top:325px;font-size:11px;">Nederland</div>
<div class="t" style="left:633px;top:325px;font-size:11px;">8.4</div>
<svg class="ic" style="left:731px;top:331px" width="11" height="7" shape-rendering="crispEdges"><rect x="3" y="0" width="1" height="1" fill="#ff7800"/><rect x="7" y="0" width="1" height="1" fill="#ff7800"/><rect x="2" y="1" width="2" height="1" fill="#ff7800"/><rect x="7" y="1" width="2" height="1" fill="#ff7800"/><rect x="1" y="2" width="3" height="1" fill="#ff7800"/><rect x="7" y="2" width="3" height="1" fill="#ff7800"/><rect x="0" y="3" width="11" height="1" fill="#ff7800"/><rect x="1" y="4" width="3" height="1" fill="#ff7800"/><rect x="7" y="4" width="3" height="1" fill="#ff7800"/><rect x="2" y="5" width="2" height="1" fill="#ff7800"/><rect x="7" y="5" width="2" height="1" fill="#ff7800"/><rect x="3" y="6" width="1" height="1" fill="#ff7800"/><rect x="7" y="6" width="1" height="1" fill="#ff7800"/></svg>
<div class="t" style="left:765px;top:325px;font-size:11px;">32</div>
<svg class="ic" style="left:852px;top:329px" width="11" height="11" shape-rendering="crispEdges"><rect x="0" y="0" width="9" height="1" fill="#000000"/><rect x="9" y="1" width="1" height="1" fill="#000000"/><rect x="10" y="2" width="1" height="1" fill="#000000"/><rect x="10" y="3" width="1" height="1" fill="#000000"/><rect x="3" y="4" width="1" height="1" fill="#000000"/><rect x="10" y="4" width="1" height="1" fill="#000000"/><rect x="2" y="5" width="2" height="1" fill="#000000"/><rect x="10" y="5" width="1" height="1" fill="#000000"/><rect x="1" y="6" width="3" height="1" fill="#000000"/><rect x="9" y="6" width="1" height="1" fill="#000000"/><rect x="0" y="7" width="9" height="1" fill="#000000"/><rect x="1" y="8" width="3" height="1" fill="#000000"/><rect x="2" y="9" width="2" height="1" fill="#000000"/><rect x="3" y="10" width="1" height="1" fill="#000000"/></svg>
<div class="t" style="left:886px;top:325px;font-size:11px;">229</div>
<div class="t" style="left:968px;top:325px;font-size:11px;">264.1</div>
<div class="r" style="left:3px;top:346px;width:32px;height:17px;background:#ffffff"></div>
<div class="r" style="left:37px;top:346px;width:53px;height:17px;background:#ffffff"></div>
<div class="r" style="left:92px;top:346px;width:160px;height:17px;background:#ffffff"></div>
<div class="r" style="left:254px;top:346px;width:244px;height:17px;background:#ffffff"></div>
<div class="r" style="left:500px;top:346px;width:130px;height:17px;background:#ffffff"></div>
<div class="r" style="left:632px;top:346px;width:96px;height:17px;background:#ffffff"></div>
<div class="r" style="left:730px;top:346px;width:32px;height:17px;background:#ffffff"></div>
<div class="r" style="left:764px;top:346px;width:85px;height:17px;background:#ffffff"></div>
<div class="r" style="left:851px;top:346px;width:32px;height:17px;background:#ffffff"></div>
<div class="r" style="left:885px;top:346px;width:46px;height:17px;background:#ffffff"></div>
<div class="r" style="left:933px;top:346px;width:32px;height:17px;background:#ffffff"></div>
<div class="r" style="left:967px;top:346px;width:53px;height:17px;background:#ffffff"></div>
<div class="r" style="left:1022px;top:346px;width:75px;height:17px;background:#ffffff"></div>
<div class="t" style="left:4px;top:344px;font-size:11px;">9</div>
<svg class="ic" style="left:38px;top:348px" width="7" height="11" shape-rendering="crispEdges"><rect x="3" y="0" width="1" height="1" fill="#ff0000"/><rect x="3" y="1" width="1" height="1" fill="#ff0000"/><rect x="3" y="2" width="1" height="1" fill="#ff0000"/><rect x="3" y="3" width="1" height="1" fill="#ff0000"/><rect x="3" y="4" width="1" height="1" fill="#ff0000"/><rect x="3" y="5" width="1" height="1" fill="#ff0000"/><rect x="3" y="6" width="1" height="1" fill="#ff0000"/><rect x="0" y="7" width="7" height="1" fill="#ff0000"/><rect x="1" y="8" width="5" height="1" fill="#ff0000"/><rect x="2" y="9" width="3" height="1" fill="#ff0000"/><rect x="3" y="10" width="1" height="1" fill="#ff0000"/></svg>
<div class="t" style="left:48px;top:345px;font-size:11px;">(-1)</div>
<div class="t" style="left:93px;top:344px;font-size:11px;">123</div>
<svg class="ic" style="left:255px;top:351px" width="11" height="11" shape-rendering="crispEdges"><rect x="0" y="0" width="11" height="1" fill="#0000ff"/><rect x="0" y="1" width="1" height="1" fill="#0000ff"/><rect x="1" y="1" width="9" height="1" fill="#ffffff"/><rect x="10" y="1" width="1" height="1" fill="#0000ff"/><rect x="0" y="2" width="1" height="1" fill="#0000ff"/><rect x="1" y="2" width="9" height="1" fill="#ffffff"/><rect x="10" y="2" width="1" height="1" fill="#0000ff"/><rect x="0" y="3" width="4" height="1" fill="#0000ff"/><rect x="4" y="3" width="3" height="1" fill="#ffffff"/><rect x="7" y="3" width="4" height="1" fill="#0000ff"/><rect x="0" y="4" width="4" height="1" fill="#0000ff"/><rect x="4" y="4" width="3" height="1" fill="#ffffff"/><rect x="7" y="4" width="4" height="1" fill="#0000ff"/><rect x="0" y="5" width="4" height="1" fill="#0000ff"/><rect x="4" y="5" width="3" height="1" fill="#ffffff"/><rect x="7" y="5" width="4" height="1" fill="#0000ff"/><rect x="0" y="6" width="4" height="1" fill="#0000ff"/><rect x="4" y="6" width="3" height="1" fill="#ffffff"/><rect x="7" y="6" width="4" height="1" fill="#0000ff"/><rect x="0" y="7" width="4" height="1" fill="#0000ff"/><rect x="4" y="7" width="3" height="1" fill="#ffffff"/><rect x="7" y="7" width="4" height="1" fill="#0000ff"/><rect x="0" y="8" width="1" height="1" fill="#0000ff"/><rect x="1" y="8" width="9" height="1" fill="#ffffff"/><rect x="10" y="8" width="1" height="1" fill="#0000ff"/><rect x="0" y="9" width="1" height="1" fill="#0000ff"/><rect x="1" y="9" width="9" height="1" fill="#ffffff"/><rect x="10" y="9" width="1" height="1" fill="#0000ff"/><rect x="0" y="10" width="11" height="1" fill="#0000ff"/></svg>
<div class="t" style="left:275px;top:343px;font-size:11px;">Erik (Groesbeek)</div>
<div class="t" style="left:501px;top:344px;font-size:11px;">Nederland</div>
<div class="t" style="left:633px;top:344px;font-size:11px;">8.6</div>
<svg class="ic" style="left:731px;top:351px" width="11" height="7" shape-rendering="crispEdges"><rect x="3" y="0" width="1" height="1" fill="#ff7800"/><rect x="7" y="0" width="1" height="1" fill="#ff7800"/><rect x="2" y="1" width="2" height="1" fill="#ff7800"/><rect x="7" y="1" width="2" height="1" fill="#ff7800"/><rect x="1" y="2" width="3" height="1" fill="#ff7800"/><rect x="7" y="2" width="3" height="1" fill="#ff7800"/><rect x="0" y="3" width="11" height="1" fill="#ff7800"/><rect x="1" y="4" width="3" height="1" fill="#ff7800"/><rect x="7" y="4" width="3" height="1" fill="#ff7800"/><rect x="2" y="5" width="2" height="1" fill="#ff7800"/><rect x="7" y="5" width="2" height="1" fill="#ff7800"/><rect x="3" y="6" width="1" height="1" fill="#ff7800"/><rect x="7" y="6" width="1" height="1" fill="#ff7800"/></svg>
<div class="t" style="left:765px;top:344px;font-size:11px;">27</div>
<svg class="ic" style="left:852px;top:349px" width="11" height="11" shape-rendering="crispEdges"><rect x="0" y="0" width="9" height="1" fill="#000000"/><rect x="9" y="1" width="1" height="1" fill="#000000"/><rect x="10" y="2" width="1" height="1" fill="#000000"/><rect x="10" y="3" width="1" height="1" fill="#000000"/><rect x="3" y="4" width="1" height="1" fill="#000000"/><rect x="10" y="4" width="1" height="1" fill="#000000"/><rect x="2" y="5" width="2" height="1" fill="#000000"/><rect x="10" y="5" width="1" height="1" fill="#000000"/><rect x="1" y="6" width="3" height="1" fill="#000000"/><rect x="9" y="6" width="1" height="1" fill="#000000"/><rect x="0" y="7" width="9" height="1" fill="#000000"/><rect x="1" y="8" width="3" height="1" fill="#000000"/><rect x="2" y="9" width="2" height="1" fill="#000000"/><rect x="3" y="10" width="1" height="1" fill="#000000"/></svg>
<div class="t" style="left:886px;top:344px;font-size:11px;">207</div>
<svg class="ic" style="left:934px;top:349px" width="11" height="11" shape-rendering="crispEdges"><rect x="0" y="0" width="9" height="1" fill="#000000"/><rect x="9" y="1" width="1" height="1" fill="#000000"/><rect x="10" y="2" width="1" height="1" fill="#000000"/><rect x="10" y="3" width="1" height="1" fill="#000000"/><rect x="3" y="4" width="1" height="1" fill="#000000"/><rect x="10" y="4" width="1" height="1" fill="#000000"/><rect x="2" y="5" width="2" height="1" fill="#000000"/><rect x="10" y="5" width="1" height="1" fill="#000000"/><rect x="1" y="6" width="3" height="1" fill="#000000"/><rect x="9" y="6" width="1" height="1" fill="#000000"/><rect x="0" y="7" width="9" height="1" fill="#000000"/><rect x="1" y="8" width="3" height="1" fill="#000000"/><rect x="2" y="9" width="2" height="1" fill="#000000"/><rect x="3" y="10" width="1" height="1" fill="#000000"/></svg>
<div class="t" style="left:968px;top:344px;font-size:11px;">262</div>
<div class="r" style="left:3px;top:365px;width:32px;height:18px;background:#ffffff"></div>
<div class="r" style="left:37px;top:365px;width:53px;height:18px;background:#ffffff"></div>
<div class="r" style="left:92px;top:365px;width:160px;height:18px;background:#ffffff"></div>
<div class="r" style="left:254px;top:365px;width:244px;height:18px;background:#ffffff"></div>
<div class="r" style="left:500px;top:365px;width:130px;height:18px;background:#ffffff"></div>
<div class="r" style="left:632px;top:365px;width:96px;height:18px;background:#ffffff"></div>
<div class="r" style="left:730px;top:365px;width:32px;height:18px;background:#ffffff"></div>
<div class="r" style="left:764px;top:365px;width:85px;height:18px;background:#ffffff"></div>
<div class="r" style="left:851px;top:365px;width:32px;height:18px;background:#ffffff"></div>
<div class="r" style="left:885px;top:365px;width:46px;height:18px;background:#ffffff"></div>
<div class="r" style="left:933px;top:365px;width:32px;height:18px;background:#ffffff"></div>
<div class="r" style="left:967px;top:365px;width:53px;height:18px;background:#ffffff"></div>
<div class="r" style="left:1022px;top:365px;width:75px;height:18px;background:#ffffff"></div>
<div class="t" style="left:4px;top:364px;font-size:11px;">10</div>
<svg class="ic" style="left:38px;top:367px" width="7" height="11" shape-rendering="crispEdges"><rect x="3" y="0" width="1" height="1" fill="#00ff00"/><rect x="2" y="1" width="3" height="1" fill="#00ff00"/><rect x="1" y="2" width="5" height="1" fill="#00ff00"/><rect x="0" y="3" width="7" height="1" fill="#00ff00"/><rect x="3" y="4" width="1" height="1" fill="#00ff00"/><rect x="3" y="5" width="1" height="1" fill="#00ff00"/><rect x="3" y="6" width="1" height="1" fill="#00ff00"/><rect x="3" y="7" width="1" height="1" fill="#00ff00"/><rect x="3" y="8" width="1" height="1" fill="#00ff00"/><rect x="3" y="9" width="1" height="1" fill="#00ff00"/><rect x="3" y="10" width="1" height="1" fill="#00ff00"/></svg>
<div class="t" style="left:48px;top:364px;font-size:11px;">(+8)</div>
<div class="t" style="left:93px;top:364px;font-size:11px;">104</div>
<svg class="ic" style="left:255px;top:371px" width="11" height="11" shape-rendering="crispEdges"><rect x="0" y="0" width="11" height="1" fill="#0000ff"/><rect x="0" y="1" width="1" height="1" fill="#0000ff"/><rect x="1" y="1" width="9" height="1" fill="#ffffff"/><rect x="10" y="1" width="1" height="1" fill="#0000ff"/><rect x="0" y="2" width="1" height="1" fill="#0000ff"/><rect x="1" y="2" width="9" height="1" fill="#ffffff"/><rect x="10" y="2" width="1" height="1" fill="#0000ff"/><rect x="0" y="3" width="4" height="1" fill="#0000ff"/><rect x="4" y="3" width="3" height="1" fill="#ffffff"/><rect x="7" y="3" width="4" height="1" fill="#0000ff"/><rect x="0" y="4" width="4" height="1" fill="#0000ff"/><rect x="4" y="4" width="3" height="1" fill="#ffffff"/><rect x="7" y="4" width="4" height="1" fill="#0000ff"/><rect x="0" y="5" width="4" height="1" fill="#0000ff"/><rect x="4" y="5" width="3" height="1" fill="#ffffff"/><rect x="7" y="5" width="4" height="1" fill="#0000ff"/><rect x="0" y="6" width="4" height="1" fill="#0000ff"/><rect x="4" y="6" width="3" height="1" fill="#ffffff"/><rect x="7" y="6" width="4" height="1" fill="#0000ff"/><rect x="0" y="7" width="4" height="1" fill="#0000ff"/><rect x="4" y="7" width="3" height="1" fill="#ffffff"/><rect x="7" y="7" width="4" height="1" fill="#0000ff"/><rect x="0" y="8" width="1" height="1" fill="#0000ff"/><rect x="1" y="8" width="9" height="1" fill="#ffffff"/><rect x="10" y="8" width="1" height="1" fill="#0000ff"/><rect x="0" y="9" width="1" height="1" fill="#0000ff"/><rect x="1" y="9" width="9" height="1" fill="#ffffff"/><rect x="10" y="9" width="1" height="1" fill="#0000ff"/><rect x="0" y="10" width="11" height="1" fill="#0000ff"/></svg>
<div class="t" style="left:275px;top:362px;font-size:11px;">David (Amsterdam)</div>
<div class="t" style="left:501px;top:364px;font-size:11px;">Nederland</div>
<div class="t" style="left:633px;top:364px;font-size:11px;">7.4</div>
<svg class="ic" style="left:731px;top:370px" width="11" height="7" shape-rendering="crispEdges"><rect x="3" y="0" width="1" height="1" fill="#ff7800"/><rect x="7" y="0" width="1" height="1" fill="#ff7800"/><rect x="2" y="1" width="2" height="1" fill="#ff7800"/><rect x="7" y="1" width="2" height="1" fill="#ff7800"/><rect x="1" y="2" width="3" height="1" fill="#ff7800"/><rect x="7" y="2" width="3" height="1" fill="#ff7800"/><rect x="0" y="3" width="11" height="1" fill="#ff7800"/><rect x="1" y="4" width="3" height="1" fill="#ff7800"/><rect x="7" y="4" width="3" height="1" fill="#ff7800"/><rect x="2" y="5" width="2" height="1" fill="#ff7800"/><rect x="7" y="5" width="2" height="1" fill="#ff7800"/><rect x="3" y="6" width="1" height="1" fill="#ff7800"/><rect x="7" y="6" width="1" height="1" fill="#ff7800"/></svg>
<div class="t" style="left:765px;top:364px;font-size:11px;">48</div>
<div class="t" style="left:886px;top:364px;font-size:11px;">189</div>
<svg class="ic" style="left:934px;top:368px" width="11" height="11" shape-rendering="crispEdges"><rect x="0" y="0" width="9" height="1" fill="#000000"/><rect x="9" y="1" width="1" height="1" fill="#000000"/><rect x="10" y="2" width="1" height="1" fill="#000000"/><rect x="10" y="3" width="1" height="1" fill="#000000"/><rect x="3" y="4" width="1" height="1" fill="#000000"/><rect x="10" y="4" width="1" height="1" fill="#000000"/><rect x="2" y="5" width="2" height="1" fill="#000000"/><rect x="10" y="5" width="1" height="1" fill="#000000"/><rect x="1" y="6" width="3" height="1" fill="#000000"/><rect x="9" y="6" width="1" height="1" fill="#000000"/><rect x="0" y="7" width="9" height="1" fill="#000000"/><rect x="1" y="8" width="3" height="1" fill="#000000"/><rect x="2" y="9" width="2" height="1" fill="#000000"/><rect x="3" y="10" width="1" height="1" fill="#000000"/></svg>
<div class="t" style="left:968px;top:364px;font-size:11px;">261.2</div>
<div class="r" style="left:3px;top:385px;width:32px;height:17px;background:#ffffff"></div>
<div class="r" style="left:37px;top:385px;width:53px;height:17px;background:#ffffff"></div>
<div class="r" style="left:92px;top:385px;width:160px;height:17px;background:#ffffff"></div>
<div class="r" style="left:254px;top:385px;width:244px;height:17px;background:#ffffff"></div>
<div class="r" style="left:500px;top:385px;width:130px;height:17px;background:#ffffff"></div>
<div class="r" style="left:632px;top:385px;width:96px;height:17px;background:#ffffff"></div>
<div class="r" style="left:730px;top:385px;width:32px;height:17px;background:#ffffff"></div>
<div class="r" style="left:764px;top:385px;width:85px;height:17px;background:#ffffff"></div>
<div class="r" style="left:851px;top:385px;width:32px;height:17px;background:#ffffff"></div>
<div class="r" style="left:885px;top:385px;width:46px;height:17px;background:#ffffff"></div>
<div class="r" style="left:933px;top:385px;width:32px;height:17px;background:#ffffff"></div>
<div class="r" style="left:967px;top:385px;width:53px;height:17px;background:#ffffff"></div>
<div class="r" style="left:1022px;top:385px;width:75px;height:17px;background:#ffffff"></div>
<div class="t bd" style="left:4px;top:383px;font-size:11px;font-weight:bold;color:#ff0000;">11</div>
<div class="t bd" style="left:93px;top:383px;font-size:11px;font-weight:bold;color:#ff0000;">44</div>
<svg class="ic" style="left:255px;top:390px" width="11" height="11" shape-rendering="crispEdges"><rect x="0" y="0" width="11" height="1" fill="#0000ff"/><rect x="0" y="1" width="1" height="1" fill="#0000ff"/><rect x="1" y="1" width="9" height="1" fill="#ffffff"/><rect x="10" y="1" width="1" height="1" fill="#0000ff"/><rect x="0" y="2" width="1" height="1" fill="#0000ff"/><rect x="1" y="2" width="9" height="1" fill="#ffffff"/><rect x="10" y="2" width="1" height="1" fill="#0000ff"/><rect x="0" y="3" width="4" height="1" fill="#0000ff"/><rect x="4" y="3" width="3" height="1" fill="#ffffff"/><rect x="7" y="3" width="4" height="1" fill="#0000ff"/><rect x="0" y="4" width="4" height="1" fill="#0000ff"/><rect x="4" y="4" width="3" height="1" fill="#ffffff"/><rect x="7" y="4" width="4" height="1" fill="#0000ff"/><rect x="0" y="5" width="4" height="1" fill="#0000ff"/><rect x="4" y="5" width="3" height="1" fill="#ffffff"/><rect x="7" y="5" width="4" height="1" fill="#0000ff"/><rect x="0" y="6" width="4" height="1" fill="#0000ff"/><rect x="4" y="6" width="3" height="1" fill="#ffffff"/><rect x="7" y="6" width="4" height="1" fill="#0000ff"/><rect x="0" y="7" width="4" height="1" fill="#0000ff"/><rect x="4" y="7" width="3" height="1" fill="#ffffff"/><rect x="7" y="7" width="4" height="1" fill="#0000ff"/><rect x="0" y="8" width="1" height="1" fill="#0000ff"/><rect x="1" y="8" width="9" height="1" fill="#ffffff"/><rect x="10" y="8" width="1" height="1" fill="#0000ff"/><rect x="0" y="9" width="1" height="1" fill="#0000ff"/><rect x="1" y="9" width="9" height="1" fill="#ffffff"/><rect x="10" y="9" width="1" height="1" fill="#0000ff"/><rect x="0" y="10" width="11" height="1" fill="#0000ff"/></svg>
<div class="t bd" style="left:275px;top:382px;font-size:11px;font-weight:bold;color:#ff0000;">GEMIDDELD</div>
<div class="t bd" style="left:501px;top:383px;font-size:11px;font-weight:bold;color:#ff0000;">Anders</div>
<div class="t bd" style="left:633px;top:383px;font-size:11px;font-weight:bold;color:#ff0000;">8.1</div>
<svg class="ic" style="left:731px;top:390px" width="11" height="7" shape-rendering="crispEdges"><rect x="3" y="0" width="1" height="1" fill="#ff7800"/><rect x="7" y="0" width="1" height="1" fill="#ff7800"/><rect x="2" y="1" width="2" height="1" fill="#ff7800"/><rect x="7" y="1" width="2" height="1" fill="#ff7800"/><rect x="1" y="2" width="3" height="1" fill="#ff7800"/><rect x="7" y="2" width="3" height="1" fill="#ff7800"/><rect x="0" y="3" width="11" height="1" fill="#ff7800"/><rect x="1" y="4" width="3" height="1" fill="#ff7800"/><rect x="7" y="4" width="3" height="1" fill="#ff7800"/><rect x="2" y="5" width="2" height="1" fill="#ff7800"/><rect x="7" y="5" width="2" height="1" fill="#ff7800"/><rect x="3" y="6" width="1" height="1" fill="#ff7800"/><rect x="7" y="6" width="1" height="1" fill="#ff7800"/></svg>
<div class="t bd" style="left:765px;top:383px;font-size:11px;font-weight:bold;color:#ff0000;">39</div>
<svg class="ic" style="left:852px;top:388px" width="11" height="11" shape-rendering="crispEdges"><rect x="0" y="0" width="9" height="1" fill="#000000"/><rect x="9" y="1" width="1" height="1" fill="#000000"/><rect x="10" y="2" width="1" height="1" fill="#000000"/><rect x="10" y="3" width="1" height="1" fill="#000000"/><rect x="3" y="4" width="1" height="1" fill="#000000"/><rect x="10" y="4" width="1" height="1" fill="#000000"/><rect x="2" y="5" width="2" height="1" fill="#000000"/><rect x="10" y="5" width="1" height="1" fill="#000000"/><rect x="1" y="6" width="3" height="1" fill="#000000"/><rect x="9" y="6" width="1" height="1" fill="#000000"/><rect x="0" y="7" width="9" height="1" fill="#000000"/><rect x="1" y="8" width="3" height="1" fill="#000000"/><rect x="2" y="9" width="2" height="1" fill="#000000"/><rect x="3" y="10" width="1" height="1" fill="#000000"/></svg>
<div class="t bd" style="left:886px;top:383px;font-size:11px;font-weight:bold;color:#ff0000;">168</div>
<svg class="ic" style="left:934px;top:388px" width="11" height="11" shape-rendering="crispEdges"><rect x="0" y="0" width="9" height="1" fill="#000000"/><rect x="9" y="1" width="1" height="1" fill="#000000"/><rect x="10" y="2" width="1" height="1" fill="#000000"/><rect x="10" y="3" width="1" height="1" fill="#000000"/><rect x="3" y="4" width="1" height="1" fill="#000000"/><rect x="10" y="4" width="1" height="1" fill="#000000"/><rect x="2" y="5" width="2" height="1" fill="#000000"/><rect x="10" y="5" width="1" height="1" fill="#000000"/><rect x="1" y="6" width="3" height="1" fill="#000000"/><rect x="9" y="6" width="1" height="1" fill="#000000"/><rect x="0" y="7" width="9" height="1" fill="#000000"/><rect x="1" y="8" width="3" height="1" fill="#000000"/><rect x="2" y="9" width="2" height="1" fill="#000000"/><rect x="3" y="10" width="1" height="1" fill="#000000"/></svg>
<div class="t bd" style="left:968px;top:383px;font-size:11px;font-weight:bold;color:#ff0000;">260.3</div>
<div class="t bd" style="left:1023px;top:383px;font-size:11px;font-weight:bold;color:#ff0000;">(255.3 <span style="color:#f00">+ 5</span>)</div>
<div class="r" style="left:3px;top:404px;width:32px;height:18px;background:#ffffff"></div>
<div class="r" style="left:37px;top:404px;width:53px;height:18px;background:#ffffff"></div>
<div class="r" style="left:92px;top:404px;width:160px;height:18px;background:#ffffff"></div>
<div class="r" style="left:254px;top:404px;width:244px;height:18px;background:#ffffff"></div>
<div class="r" style="left:500px;top:404px;width:130px;height:18px;background:#ffffff"></div>
<div class="r" style="left:632px;top:404px;width:96px;height:18px;background:#ffffff"></div>
<div class="r" style="left:730px;top:404px;width:32px;height:18px;background:#ffffff"></div>
<div class="r" style="left:764px;top:404px;width:85px;height:18px;background:#ffffff"></div>
<div class="r" style="left:851px;top:404px;width:32px;height:18px;background:#ffffff"></div>
<div class="r" style="left:885px;top:404px;width:46px;height:18px;background:#ffffff"></div>
<div class="r" style="left:933px;top:404px;width:32px;height:18px;background:#ffffff"></div>
<div class="r" style="left:967px;top:404px;width:53px;height:18px;background:#ffffff"></div>
<div class="r" style="left:1022px;top:404px;width:75px;height:18px;background:#ffffff"></div>
<div class="t" style="left:4px;top:403px;font-size:11px;">12</div>
<svg class="ic" style="left:38px;top:406px" width="7" height="11" shape-rendering="crispEdges"><rect x="3" y="0" width="1" height="1" fill="#00ff00"/><rect x="2" y="1" width="3" height="1" fill="#00ff00"/><rect x="1" y="2" width="5" height="1" fill="#00ff00"/><rect x="0" y="3" width="7" height="1" fill="#00ff00"/><rect x="3" y="4" width="1" height="1" fill="#00ff00"/><rect x="3" y="5" width="1" height="1" fill="#00ff00"/><rect x="3" y="6" width="1" height="1" fill="#00ff00"/><rect x="3" y="7" width="1" height="1" fill="#00ff00"/><rect x="3" y="8" width="1" height="1" fill="#00ff00"/><rect x="3" y="9" width="1" height="1" fill="#00ff00"/><rect x="3" y="10" width="1" height="1" fill="#00ff00"/></svg>
<div class="t" style="left:48px;top:403px;font-size:11px;">(+9)</div>
<div class="t" style="left:93px;top:403px;font-size:11px;">108</div>
<svg class="ic" style="left:255px;top:410px" width="11" height="11" shape-rendering="crispEdges"><rect x="0" y="0" width="11" height="1" fill="#0000ff"/><rect x="0" y="1" width="1" height="1" fill="#0000ff"/><rect x="1" y="1" width="9" height="1" fill="#ffffff"/><rect x="10" y="1" width="1" height="1" fill="#0000ff"/><rect x="0" y="2" width="1" height="1" fill="#0000ff"/><rect x="1" y="2" width="9" height="1" fill="#ffffff"/><rect x="10" y="2" width="1" height="1" fill="#0000ff"/><rect x="0" y="3" width="4" height="1" fill="#0000ff"/><rect x="4" y="3" width="3" height="1" fill="#ffffff"/><rect x="7" y="3" width="4" height="1" fill="#0000ff"/><rect x="0" y="4" width="4" height="1" fill="#0000ff"/><rect x="4" y="4" width="3" height="1" fill="#ffffff"/><rect x="7" y="4" width="4" height="1" fill="#0000ff"/><rect x="0" y="5" width="4" height="1" fill="#0000ff"/><rect x="4" y="5" width="3" height="1" fill="#ffffff"/><rect x="7" y="5" width="4" height="1" fill="#0000ff"/><rect x="0" y="6" width="4" height="1" fill="#0000ff"/><rect x="4" y="6" width="3" height="1" fill="#ffffff"/><rect x="7" y="6" width="4" height="1" fill="#0000ff"/><rect x="0" y="7" width="4" height="1" fill="#0000ff"/><rect x="4" y="7" width="3" height="1" fill="#ffffff"/><rect x="7" y="7" width="4" height="1" fill="#0000ff"/><rect x="0" y="8" width="1" height="1" fill="#0000ff"/><rect x="1" y="8" width="9" height="1" fill="#ffffff"/><rect x="10" y="8" width="1" height="1" fill="#0000ff"/><rect x="0" y="9" width="1" height="1" fill="#0000ff"/><rect x="1" y="9" width="9" height="1" fill="#ffffff"/><rect x="10" y="9" width="1" height="1" fill="#0000ff"/><rect x="0" y="10" width="11" height="1" fill="#0000ff"/></svg>
<div class="t" style="left:275px;top:401px;font-size:11px;">Boris (Venhuizen)</div>
<div class="t" style="left:501px;top:403px;font-size:11px;">Nederland</div>
<div class="t bd" style="left:633px;top:403px;font-size:11px;font-weight:bold;color:#008c1e;">8.1</div>
<svg class="ic" style="left:731px;top:409px" width="11" height="7" shape-rendering="crispEdges"><rect x="3" y="0" width="1" height="1" fill="#ff7800"/><rect x="7" y="0" width="1" height="1" fill="#ff7800"/><rect x="2" y="1" width="2" height="1" fill="#ff7800"/><rect x="7" y="1" width="2" height="1" fill="#ff7800"/><rect x="1" y="2" width="3" height="1" fill="#ff7800"/><rect x="7" y="2" width="3" height="1" fill="#ff7800"/><rect x="0" y="3" width="11" height="1" fill="#ff7800"/><rect x="1" y="4" width="3" height="1" fill="#ff7800"/><rect x="7" y="4" width="3" height="1" fill="#ff7800"/><rect x="2" y="5" width="2" height="1" fill="#ff7800"/><rect x="7" y="5" width="2" height="1" fill="#ff7800"/><rect x="3" y="6" width="1" height="1" fill="#ff7800"/><rect x="7" y="6" width="1" height="1" fill="#ff7800"/></svg>
<div class="t" style="left:765px;top:403px;font-size:11px;">49</div>
<div class="t" style="left:886px;top:403px;font-size:11px;">160</div>
<svg class="ic" style="left:934px;top:407px" width="11" height="11" shape-rendering="crispEdges"><rect x="0" y="0" width="9" height="1" fill="#000000"/><rect x="9" y="1" width="1" height="1" fill="#000000"/><rect x="10" y="2" width="1" height="1" fill="#000000"/><rect x="10" y="3" width="1" height="1" fill="#000000"/><rect x="3" y="4" width="1" height="1" fill="#000000"/><rect x="10" y="4" width="1" height="1" fill="#000000"/><rect x="2" y="5" width="2" height="1" fill="#000000"/><rect x="10" y="5" width="1" height="1" fill="#000000"/><rect x="1" y="6" width="3" height="1" fill="#000000"/><rect x="9" y="6" width="1" height="1" fill="#000000"/><rect x="0" y="7" width="9" height="1" fill="#000000"/><rect x="1" y="8" width="3" height="1" fill="#000000"/><rect x="2" y="9" width="2" height="1" fill="#000000"/><rect x="3" y="10" width="1" height="1" fill="#000000"/></svg>
<div class="t" style="left:968px;top:403px;font-size:11px;">259.8</div>
<div class="t" style="left:1023px;top:403px;font-size:11px;">(254.8 <span style="color:#f00">+ 5</span>)</div>
<div class="r" style="left:3px;top:424px;width:32px;height:17px;background:#ffffff"></div>
<div class="r" style="left:37px;top:424px;width:53px;height:17px;background:#ffffff"></div>
<div class="r" style="left:92px;top:424px;width:160px;height:17px;background:#ffffff"></div>
<div class="r" style="left:254px;top:424px;width:244px;height:17px;background:#ffffff"></div>
<div class="r" style="left:500px;top:424px;width:130px;height:17px;background:#ffffff"></div>
<div class="r" style="left:632px;top:424px;width:96px;height:17px;background:#ffffff"></div>
<div class="r" style="left:730px;top:424px;width:32px;height:17px;background:#ffffff"></div>
<div class="r" style="left:764px;top:424px;width:85px;height:17px;background:#ffffff"></div>
<div class="r" style="left:851px;top:424px;width:32px;height:17px;background:#ffffff"></div>
<div class="r" style="left:885px;top:424px;width:46px;height:17px;background:#ffffff"></div>
<div class="r" style="left:933px;top:424px;width:32px;height:17px;background:#ffffff"></div>
<div class="r" style="left:967px;top:424px;width:53px;height:17px;background:#ffffff"></div>
<div class="r" style="left:1022px;top:424px;width:75px;height:17px;background:#ffffff"></div>
<div class="t" style="left:4px;top:422px;font-size:11px;">13</div>
<svg class="ic" style="left:38px;top:426px" width="7" height="11" shape-rendering="crispEdges"><rect x="3" y="0" width="1" height="1" fill="#00ff00"/><rect x="2" y="1" width="3" height="1" fill="#00ff00"/><rect x="1" y="2" width="5" height="1" fill="#00ff00"/><rect x="0" y="3" width="7" height="1" fill="#00ff00"/><rect x="3" y="4" width="1" height="1" fill="#00ff00"/><rect x="3" y="5" width="1" height="1" fill="#00ff00"/><rect x="3" y="6" width="1" height="1" fill="#00ff00"/><rect x="3" y="7" width="1" height="1" fill="#00ff00"/><rect x="3" y="8" width="1" height="1" fill="#00ff00"/><rect x="3" y="9" width="1" height="1" fill="#00ff00"/><rect x="3" y="10" width="1" height="1" fill="#00ff00"/></svg>
<div class="t" style="left:48px;top:423px;font-size:11px;">(+1)</div>
<div class="t" style="left:93px;top:422px;font-size:11px;">57</div>
<svg class="ic" style="left:255px;top:429px" width="11" height="11" shape-rendering="crispEdges"><rect x="0" y="0" width="11" height="1" fill="#0000ff"/><rect x="0" y="1" width="1" height="1" fill="#0000ff"/><rect x="1" y="1" width="9" height="1" fill="#ffffff"/><rect x="10" y="1" width="1" height="1" fill="#0000ff"/><rect x="0" y="2" width="1" height="1" fill="#0000ff"/><rect x="1" y="2" width="9" height="1" fill="#ffffff"/><rect x="10" y="2" width="1" height="1" fill="#0000ff"/><rect x="0" y="3" width="4" height="1" fill="#0000ff"/><rect x="4" y="3" width="3" height="1" fill="#ffffff"/><rect x="7" y="3" width="4" height="1" fill="#0000ff"/><rect x="0" y="4" width="4" height="1" fill="#0000ff"/><rect x="4" y="4" width="3" height="1" fill="#ffffff"/><rect x="7" y="4" width="4" height="1" fill="#0000ff"/><rect x="0" y="5" width="4" height="1" fill="#0000ff"/><rect x="4" y="5" width="3" height="1" fill="#ffffff"/><rect x="7" y="5" width="4" height="1" fill="#0000ff"/><rect x="0" y="6" width="4" height="1" fill="#0000ff"/><rect x="4" y="6" width="3" height="1" fill="#ffffff"/><rect x="7" y="6" width="4" height="1" fill="#0000ff"/><rect x="0" y="7" width="4" height="1" fill="#0000ff"/><rect x="4" y="7" width="3" height="1" fill="#ffffff"/><rect x="7" y="7" width="4" height="1" fill="#0000ff"/><rect x="0" y="8" width="1" height="1" fill="#0000ff"/><rect x="1" y="8" width="9" height="1" fill="#ffffff"/><rect x="10" y="8" width="1" height="1" fill="#0000ff"/><rect x="0" y="9" width="1" height="1" fill="#0000ff"/><rect x="1" y="9" width="9" height="1" fill="#ffffff"/><rect x="10" y="9" width="1" height="1" fill="#0000ff"/><rect x="0" y="10" width="11" height="1" fill="#0000ff"/></svg>
<div class="t" style="left:275px;top:421px;font-size:11px;">Justin (Ede)</div>
<div class="t" style="left:501px;top:422px;font-size:11px;">Nederland</div>
<div class="t" style="left:633px;top:422px;font-size:11px;">8.7</div>
<svg class="ic" style="left:731px;top:429px" width="11" height="7" shape-rendering="crispEdges"><rect x="3" y="0" width="1" height="1" fill="#ff7800"/><rect x="7" y="0" width="1" height="1" fill="#ff7800"/><rect x="2" y="1" width="2" height="1" fill="#ff7800"/><rect x="7" y="1" width="2" height="1" fill="#ff7800"/><rect x="1" y="2" width="3" height="1" fill="#ff7800"/><rect x="7" y="2" width="3" height="1" fill="#ff7800"/><rect x="0" y="3" width="11" height="1" fill="#ff7800"/><rect x="1" y="4" width="3" height="1" fill="#ff7800"/><rect x="7" y="4" width="3" height="1" fill="#ff7800"/><rect x="2" y="5" width="2" height="1" fill="#ff7800"/><rect x="7" y="5" width="2" height="1" fill="#ff7800"/><rect x="3" y="6" width="1" height="1" fill="#ff7800"/><rect x="7" y="6" width="1" height="1" fill="#ff7800"/></svg>
<div class="t" style="left:765px;top:422px;font-size:11px;">34</div>
<svg class="ic" style="left:852px;top:427px" width="11" height="11" shape-rendering="crispEdges"><rect x="0" y="0" width="9" height="1" fill="#000000"/><rect x="9" y="1" width="1" height="1" fill="#000000"/><rect x="10" y="2" width="1" height="1" fill="#000000"/><rect x="10" y="3" width="1" height="1" fill="#000000"/><rect x="3" y="4" width="1" height="1" fill="#000000"/><rect x="10" y="4" width="1" height="1" fill="#000000"/><rect x="2" y="5" width="2" height="1" fill="#000000"/><rect x="10" y="5" width="1" height="1" fill="#000000"/><rect x="1" y="6" width="3" height="1" fill="#000000"/><rect x="9" y="6" width="1" height="1" fill="#000000"/><rect x="0" y="7" width="9" height="1" fill="#000000"/><rect x="1" y="8" width="3" height="1" fill="#000000"/><rect x="2" y="9" width="2" height="1" fill="#000000"/><rect x="3" y="10" width="1" height="1" fill="#000000"/></svg>
<div class="t" style="left:886px;top:422px;font-size:11px;">198</div>
<svg class="ic" style="left:934px;top:427px" width="11" height="11" shape-rendering="crispEdges"><rect x="0" y="0" width="9" height="1" fill="#000000"/><rect x="9" y="1" width="1" height="1" fill="#000000"/><rect x="10" y="2" width="1" height="1" fill="#000000"/><rect x="10" y="3" width="1" height="1" fill="#000000"/><rect x="3" y="4" width="1" height="1" fill="#000000"/><rect x="10" y="4" width="1" height="1" fill="#000000"/><rect x="2" y="5" width="2" height="1" fill="#000000"/><rect x="10" y="5" width="1" height="1" fill="#000000"/><rect x="1" y="6" width="3" height="1" fill="#000000"/><rect x="9" y="6" width="1" height="1" fill="#000000"/><rect x="0" y="7" width="9" height="1" fill="#000000"/><rect x="1" y="8" width="3" height="1" fill="#000000"/><rect x="2" y="9" width="2" height="1" fill="#000000"/><rect x="3" y="10" width="1" height="1" fill="#000000"/></svg>
<div class="t" style="left:968px;top:422px;font-size:11px;">259.1</div>
<div class="r" style="left:3px;top:443px;width:32px;height:18px;background:#ffffff"></div>
<div class="r" style="left:37px;top:443px;width:53px;height:18px;background:#ffffff"></div>
<div class="r" style="left:92px;top:443px;width:160px;height:18px;background:#ffffff"></div>
<div class="r" style="left:254px;top:443px;width:244px;height:18px;background:#ffffff"></div>
<div class="r" style="left:500px;top:443px;width:130px;height:18px;background:#ffffff"></div>
<div class="r" style="left:632px;top:443px;width:96px;height:18px;background:#ffffff"></div>
<div class="r" style="left:730px;top:443px;width:32px;height:18px;background:#ffffff"></div>
<div class="r" style="left:764px;top:443px;width:85px;height:18px;background:#ffffff"></div>
<div class="r" style="left:851px;top:443px;width:32px;height:18px;background:#ffffff"></div>
<div class="r" style="left:885px;top:443px;width:46px;height:18px;background:#ffffff"></div>
<div class="r" style="left:933px;top:443px;width:32px;height:18px;background:#ffffff"></div>
<div class="r" style="left:967px;top:443px;width:53px;height:18px;background:#ffffff"></div>
<div class="r" style="left:1022px;top:443px;width:75px;height:18px;background:#ffffff"></div>
<div class="t" style="left:4px;top:442px;font-size:11px;">14</div>
<svg class="ic" style="left:38px;top:445px" width="7" height="11" shape-rendering="crispEdges"><rect x="3" y="0" width="1" height="1" fill="#00ff00"/><rect x="2" y="1" width="3" height="1" fill="#00ff00"/><rect x="1" y="2" width="5" height="1" fill="#00ff00"/><rect x="0" y="3" width="7" height="1" fill="#00ff00"/><rect x="3" y="4" width="1" height="1" fill="#00ff00"/><rect x="3" y="5" width="1" height="1" fill="#00ff00"/><rect x="3" y="6" width="1" height="1" fill="#00ff00"/><rect x="3" y="7" width="1" height="1" fill="#00ff00"/><rect x="3" y="8" width="1" height="1" fill="#00ff00"/><rect x="3" y="9" width="1" height="1" fill="#00ff00"/><rect x="3" y="10" width="1" height="1" fill="#00ff00"/></svg>
<div class="t" style="left:48px;top:442px;font-size:11px;">(+1)</div>
<div class="t" style="left:93px;top:442px;font-size:11px;">4</div>
<svg class="ic" style="left:255px;top:449px" width="11" height="11" shape-rendering="crispEdges"><rect x="0" y="0" width="11" height="1" fill="#0000ff"/><rect x="0" y="1" width="1" height="1" fill="#0000ff"/><rect x="1" y="1" width="9" height="1" fill="#ffffff"/><rect x="10" y="1" width="1" height="1" fill="#0000ff"/><rect x="0" y="2" width="1" height="1" fill="#0000ff"/><rect x="1" y="2" width="9" height="1" fill="#ffffff"/><rect x="10" y="2" width="1" height="1" fill="#0000ff"/><rect x="0" y="3" width="4" height="1" fill="#0000ff"/><rect x="4" y="3" width="3" height="1" fill="#ffffff"/><rect x="7" y="3" width="4" height="1" fill="#0000ff"/><rect x="0" y="4" width="4" height="1" fill="#0000ff"/><rect x="4" y="4" width="3" height="1" fill="#ffffff"/><rect x="7" y="4" width="4" height="1" fill="#0000ff"/><rect x="0" y="5" width="4" height="1" fill="#0000ff"/><rect x="4" y="5" width="3" height="1" fill="#ffffff"/><rect x="7" y="5" width="4" height="1" fill="#0000ff"/><rect x="0" y="6" width="4" height="1" fill="#0000ff"/><rect x="4" y="6" width="3" height="1" fill="#ffffff"/><rect x="7" y="6" width="4" height="1" fill="#0000ff"/><rect x="0" y="7" width="4" height="1" fill="#0000ff"/><rect x="4" y="7" width="3" height="1" fill="#ffffff"/><rect x="7" y="7" width="4" height="1" fill="#0000ff"/><rect x="0" y="8" width="1" height="1" fill="#0000ff"/><rect x="1" y="8" width="9" height="1" fill="#ffffff"/><rect x="10" y="8" width="1" height="1" fill="#0000ff"/><rect x="0" y="9" width="1" height="1" fill="#0000ff"/><rect x="1" y="9" width="9" height="1" fill="#ffffff"/><rect x="10" y="9" width="1" height="1" fill="#0000ff"/><rect x="0" y="10" width="11" height="1" fill="#0000ff"/></svg>
<div class="t" style="left:275px;top:440px;font-size:11px;">Koos (Froombosch)</div>
<div class="t" style="left:501px;top:442px;font-size:11px;">Nederland</div>
<div class="t" style="left:633px;top:442px;font-size:11px;">8.2</div>
<svg class="ic" style="left:731px;top:448px" width="11" height="7" shape-rendering="crispEdges"><rect x="3" y="0" width="1" height="1" fill="#ff7800"/><rect x="7" y="0" width="1" height="1" fill="#ff7800"/><rect x="2" y="1" width="2" height="1" fill="#ff7800"/><rect x="7" y="1" width="2" height="1" fill="#ff7800"/><rect x="1" y="2" width="3" height="1" fill="#ff7800"/><rect x="7" y="2" width="3" height="1" fill="#ff7800"/><rect x="0" y="3" width="11" height="1" fill="#ff7800"/><rect x="1" y="4" width="3" height="1" fill="#ff7800"/><rect x="7" y="4" width="3" height="1" fill="#ff7800"/><rect x="2" y="5" width="2" height="1" fill="#ff7800"/><rect x="7" y="5" width="2" height="1" fill="#ff7800"/><rect x="3" y="6" width="1" height="1" fill="#ff7800"/><rect x="7" y="6" width="1" height="1" fill="#ff7800"/></svg>
<div class="t" style="left:765px;top:442px;font-size:11px;">33</div>
<svg class="ic" style="left:852px;top:446px" width="11" height="11" shape-rendering="crispEdges"><rect x="0" y="0" width="9" height="1" fill="#000000"/><rect x="9" y="1" width="1" height="1" fill="#000000"/><rect x="10" y="2" width="1" height="1" fill="#000000"/><rect x="10" y="3" width="1" height="1" fill="#000000"/><rect x="3" y="4" width="1" height="1" fill="#000000"/><rect x="10" y="4" width="1" height="1" fill="#000000"/><rect x="2" y="5" width="2" height="1" fill="#000000"/><rect x="10" y="5" width="1" height="1" fill="#000000"/><rect x="1" y="6" width="3" height="1" fill="#000000"/><rect x="9" y="6" width="1" height="1" fill="#000000"/><rect x="0" y="7" width="9" height="1" fill="#000000"/><rect x="1" y="8" width="3" height="1" fill="#000000"/><rect x="2" y="9" width="2" height="1" fill="#000000"/><rect x="3" y="10" width="1" height="1" fill="#000000"/></svg>
<div class="t" style="left:886px;top:442px;font-size:11px;">183</div>
<svg class="ic" style="left:934px;top:446px" width="11" height="11" shape-rendering="crispEdges"><rect x="0" y="0" width="9" height="1" fill="#000000"/><rect x="9" y="1" width="1" height="1" fill="#000000"/><rect x="10" y="2" width="1" height="1" fill="#000000"/><rect x="10" y="3" width="1" height="1" fill="#000000"/><rect x="3" y="4" width="1" height="1" fill="#000000"/><rect x="10" y="4" width="1" height="1" fill="#000000"/><rect x="2" y="5" width="2" height="1" fill="#000000"/><rect x="10" y="5" width="1" height="1" fill="#000000"/><rect x="1" y="6" width="3" height="1" fill="#000000"/><rect x="9" y="6" width="1" height="1" fill="#000000"/><rect x="0" y="7" width="9" height="1" fill="#000000"/><rect x="1" y="8" width="3" height="1" fill="#000000"/><rect x="2" y="9" width="2" height="1" fill="#000000"/><rect x="3" y="10" width="1" height="1" fill="#000000"/></svg>
<div class="t" style="left:968px;top:442px;font-size:11px;">258.9</div>
<div class="r" style="left:3px;top:463px;width:32px;height:17px;background:#ffffff"></div>
<div class="r" style="left:37px;top:463px;width:53px;height:17px;background:#ffffff"></div>
<div class="r" style="left:92px;top:463px;width:160px;height:17px;background:#ffffff"></div>
<div class="r" style="left:254px;top:463px;width:244px;height:17px;background:#ffffff"></div>
<div class="r" style="left:500px;top:463px;width:130px;height:17px;background:#ffffff"></div>
<div class="r" style="left:632px;top:463px;width:96px;height:17px;background:#ffffff"></div>
<div class="r" style="left:730px;top:463px;width:32px;height:17px;background:#ffffff"></div>
<div class="r" style="left:764px;top:463px;width:85px;height:17px;background:#ffffff"></div>
<div class="r" style="left:851px;top:463px;width:32px;height:17px;background:#ffffff"></div>
<div class="r" style="left:885px;top:463px;width:46px;height:17px;background:#ffffff"></div>
<div class="r" style="left:933px;top:463px;width:32px;height:17px;background:#ffffff"></div>
<div class="r" style="left:967px;top:463px;width:53px;height:17px;background:#ffffff"></div>
<div class="r" style="left:1022px;top:463px;width:75px;height:17px;background:#ffffff"></div>
<div class="t" style="left:4px;top:461px;font-size:11px;">15</div>
<svg class="ic" style="left:38px;top:465px" width="7" height="11" shape-rendering="crispEdges"><rect x="3" y="0" width="1" height="1" fill="#00ff00"/><rect x="2" y="1" width="3" height="1" fill="#00ff00"/><rect x="1" y="2" width="5" height="1" fill="#00ff00"/><rect x="0" y="3" width="7" height="1" fill="#00ff00"/><rect x="3" y="4" width="1" height="1" fill="#00ff00"/><rect x="3" y="5" width="1" height="1" fill="#00ff00"/><rect x="3" y="6" width="1" height="1" fill="#00ff00"/><rect x="3" y="7" width="1" height="1" fill="#00ff00"/><rect x="3" y="8" width="1" height="1" fill="#00ff00"/><rect x="3" y="9" width="1" height="1" fill="#00ff00"/><rect x="3" y="10" width="1" height="1" fill="#00ff00"/></svg>
<div class="t" style="left:48px;top:462px;font-size:11px;">(+22)</div>
<div class="t" style="left:93px;top:461px;font-size:11px;">139</div>
<svg class="ic" style="left:255px;top:468px" width="11" height="11" shape-rendering="crispEdges"><rect x="0" y="0" width="11" height="1" fill="#0000ff"/><rect x="0" y="1" width="1" height="1" fill="#0000ff"/><rect x="1" y="1" width="9" height="1" fill="#ffffff"/><rect x="10" y="1" width="1" height="1" fill="#0000ff"/><rect x="0" y="2" width="1" height="1" fill="#0000ff"/><rect x="1" y="2" width="9" height="1" fill="#ffffff"/><rect x="10" y="2" width="1" height="1" fill="#0000ff"/><rect x="0" y="3" width="4" height="1" fill="#0000ff"/><rect x="4" y="3" width="3" height="1" fill="#ffffff"/><rect x="7" y="3" width="4" height="1" fill="#0000ff"/><rect x="0" y="4" width="4" height="1" fill="#0000ff"/><rect x="4" y="4" width="3" height="1" fill="#ffffff"/><rect x="7" y="4" width="4" height="1" fill="#0000ff"/><rect x="0" y="5" width="4" height="1" fill="#0000ff"/><rect x="4" y="5" width="3" height="1" fill="#ffffff"/><rect x="7" y="5" width="4" height="1" fill="#0000ff"/><rect x="0" y="6" width="4" height="1" fill="#0000ff"/><rect x="4" y="6" width="3" height="1" fill="#ffffff"/><rect x="7" y="6" width="4" height="1" fill="#0000ff"/><rect x="0" y="7" width="4" height="1" fill="#0000ff"/><rect x="4" y="7" width="3" height="1" fill="#ffffff"/><rect x="7" y="7" width="4" height="1" fill="#0000ff"/><rect x="0" y="8" width="1" height="1" fill="#0000ff"/><rect x="1" y="8" width="9" height="1" fill="#ffffff"/><rect x="10" y="8" width="1" height="1" fill="#0000ff"/><rect x="0" y="9" width="1" height="1" fill="#0000ff"/><rect x="1" y="9" width="9" height="1" fill="#ffffff"/><rect x="10" y="9" width="1" height="1" fill="#0000ff"/><rect x="0" y="10" width="11" height="1" fill="#0000ff"/></svg>
<div class="t" style="left:275px;top:460px;font-size:11px;">Luc (Uden)</div>
<div class="t" style="left:501px;top:461px;font-size:11px;">Nederland</div>
<div class="t" style="left:633px;top:461px;font-size:11px;">8.0</div>
<svg class="ic" style="left:731px;top:468px" width="11" height="7" shape-rendering="crispEdges"><rect x="3" y="0" width="1" height="1" fill="#ff7800"/><rect x="7" y="0" width="1" height="1" fill="#ff7800"/><rect x="2" y="1" width="2" height="1" fill="#ff7800"/><rect x="7" y="1" width="2" height="1" fill="#ff7800"/><rect x="1" y="2" width="3" height="1" fill="#ff7800"/><rect x="7" y="2" width="3" height="1" fill="#ff7800"/><rect x="0" y="3" width="11" height="1" fill="#ff7800"/><rect x="1" y="4" width="3" height="1" fill="#ff7800"/><rect x="7" y="4" width="3" height="1" fill="#ff7800"/><rect x="2" y="5" width="2" height="1" fill="#ff7800"/><rect x="7" y="5" width="2" height="1" fill="#ff7800"/><rect x="3" y="6" width="1" height="1" fill="#ff7800"/><rect x="7" y="6" width="1" height="1" fill="#ff7800"/></svg>
<div class="t" style="left:765px;top:461px;font-size:11px;">80</div>
<div class="t" style="left:886px;top:461px;font-size:11px;">220</div>
<div class="t" style="left:968px;top:461px;font-size:11px;">258.6</div>
<div class="r" style="left:3px;top:482px;width:32px;height:18px;background:#ffffff"></div>
<div class="r" style="left:37px;top:482px;width:53px;height:18px;background:#ffffff"></div>
<div class="r" style="left:92px;top:482px;width:160px;height:18px;background:#ffffff"></div>
<div class="r" style="left:254px;top:482px;width:244px;height:18px;background:#ffffff"></div>
<div class="r" style="left:500px;top:482px;width:130px;height:18px;background:#ffffff"></div>
<div class="r" style="left:632px;top:482px;width:96px;height:18px;background:#ffffff"></div>
<div class="r" style="left:730px;top:482px;width:32px;height:18px;background:#ffffff"></div>
<div class="r" style="left:764px;top:482px;width:85px;height:18px;background:#ffffff"></div>
<div class="r" style="left:851px;top:482px;width:32px;height:18px;background:#ffffff"></div>
<div class="r" style="left:885px;top:482px;width:46px;height:18px;background:#ffffff"></div>
<div class="r" style="left:933px;top:482px;width:32px;height:18px;background:#ffffff"></div>
<div class="r" style="left:967px;top:482px;width:53px;height:18px;background:#ffffff"></div>
<div class="r" style="left:1022px;top:482px;width:75px;height:18px;background:#ffffff"></div>
<div class="t" style="left:4px;top:481px;font-size:11px;">15</div>
<svg class="ic" style="left:38px;top:484px" width="7" height="11" shape-rendering="crispEdges"><rect x="3" y="0" width="1" height="1" fill="#00ff00"/><rect x="2" y="1" width="3" height="1" fill="#00ff00"/><rect x="1" y="2" width="5" height="1" fill="#00ff00"/><rect x="0" y="3" width="7" height="1" fill="#00ff00"/><rect x="3" y="4" width="1" height="1" fill="#00ff00"/><rect x="3" y="5" width="1" height="1" fill="#00ff00"/><rect x="3" y="6" width="1" height="1" fill="#00ff00"/><rect x="3" y="7" width="1" height="1" fill="#00ff00"/><rect x="3" y="8" width="1" height="1" fill="#00ff00"/><rect x="3" y="9" width="1" height="1" fill="#00ff00"/><rect x="3" y="10" width="1" height="1" fill="#00ff00"/></svg>
<div class="t" style="left:48px;top:481px;font-size:11px;">(+7)</div>
<div class="t" style="left:93px;top:481px;font-size:11px;">55</div>
<svg class="ic" style="left:255px;top:488px" width="11" height="11" shape-rendering="crispEdges"><rect x="0" y="0" width="11" height="1" fill="#0000ff"/><rect x="0" y="1" width="1" height="1" fill="#0000ff"/><rect x="1" y="1" width="9" height="1" fill="#ffffff"/><rect x="10" y="1" width="1" height="1" fill="#0000ff"/><rect x="0" y="2" width="1" height="1" fill="#0000ff"/><rect x="1" y="2" width="9" height="1" fill="#ffffff"/><rect x="10" y="2" width="1" height="1" fill="#0000ff"/><rect x="0" y="3" width="4" height="1" fill="#0000ff"/><rect x="4" y="3" width="3" height="1" fill="#ffffff"/><rect x="7" y="3" width="4" height="1" fill="#0000ff"/><rect x="0" y="4" width="4" height="1" fill="#0000ff"/><rect x="4" y="4" width="3" height="1" fill="#ffffff"/><rect x="7" y="4" width="4" height="1" fill="#0000ff"/><rect x="0" y="5" width="4" height="1" fill="#0000ff"/><rect x="4" y="5" width="3" height="1" fill="#ffffff"/><rect x="7" y="5" width="4" height="1" fill="#0000ff"/><rect x="0" y="6" width="4" height="1" fill="#0000ff"/><rect x="4" y="6" width="3" height="1" fill="#ffffff"/><rect x="7" y="6" width="4" height="1" fill="#0000ff"/><rect x="0" y="7" width="4" height="1" fill="#0000ff"/><rect x="4" y="7" width="3" height="1" fill="#ffffff"/><rect x="7" y="7" width="4" height="1" fill="#0000ff"/><rect x="0" y="8" width="1" height="1" fill="#0000ff"/><rect x="1" y="8" width="9" height="1" fill="#ffffff"/><rect x="10" y="8" width="1" height="1" fill="#0000ff"/><rect x="0" y="9" width="1" height="1" fill="#0000ff"/><rect x="1" y="9" width="9" height="1" fill="#ffffff"/><rect x="10" y="9" width="1" height="1" fill="#0000ff"/><rect x="0" y="10" width="11" height="1" fill="#0000ff"/></svg>
<div class="t" style="left:275px;top:479px;font-size:11px;">Geert (Lint)</div>
<div class="t" style="left:501px;top:481px;font-size:11px;">Belgi&euml;</div>
<div class="t bd" style="left:633px;top:481px;font-size:11px;font-weight:bold;color:#008c1e;">8.1</div>
<svg class="ic" style="left:731px;top:487px" width="11" height="7" shape-rendering="crispEdges"><rect x="3" y="0" width="1" height="1" fill="#ff7800"/><rect x="7" y="0" width="1" height="1" fill="#ff7800"/><rect x="2" y="1" width="2" height="1" fill="#ff7800"/><rect x="7" y="1" width="2" height="1" fill="#ff7800"/><rect x="1" y="2" width="3" height="1" fill="#ff7800"/><rect x="7" y="2" width="3" height="1" fill="#ff7800"/><rect x="0" y="3" width="11" height="1" fill="#ff7800"/><rect x="1" y="4" width="3" height="1" fill="#ff7800"/><rect x="7" y="4" width="3" height="1" fill="#ff7800"/><rect x="2" y="5" width="2" height="1" fill="#ff7800"/><rect x="7" y="5" width="2" height="1" fill="#ff7800"/><rect x="3" y="6" width="1" height="1" fill="#ff7800"/><rect x="7" y="6" width="1" height="1" fill="#ff7800"/></svg>
<div class="t" style="left:765px;top:481px;font-size:11px;">51</div>
<div class="t" style="left:886px;top:481px;font-size:11px;">161</div>
<svg class="ic" style="left:934px;top:485px" width="11" height="11" shape-rendering="crispEdges"><rect x="0" y="0" width="9" height="1" fill="#000000"/><rect x="9" y="1" width="1" height="1" fill="#000000"/><rect x="10" y="2" width="1" height="1" fill="#000000"/><rect x="10" y="3" width="1" height="1" fill="#000000"/><rect x="3" y="4" width="1" height="1" fill="#000000"/><rect x="10" y="4" width="1" height="1" fill="#000000"/><rect x="2" y="5" width="2" height="1" fill="#000000"/><rect x="10" y="5" width="1" height="1" fill="#000000"/><rect x="1" y="6" width="3" height="1" fill="#000000"/><rect x="9" y="6" width="1" height="1" fill="#000000"/><rect x="0" y="7" width="9" height="1" fill="#000000"/><rect x="1" y="8" width="3" height="1" fill="#000000"/><rect x="2" y="9" width="2" height="1" fill="#000000"/><rect x="3" y="10" width="1" height="1" fill="#000000"/></svg>
<div class="t" style="left:968px;top:481px;font-size:11px;">258.6</div>
<div class="t" style="left:1023px;top:481px;font-size:11px;">(253.6 <span style="color:#f00">+ 5</span>)</div>
<div class="r" style="left:3px;top:502px;width:32px;height:17px;background:#ffffff"></div>
<div class="r" style="left:37px;top:502px;width:53px;height:17px;background:#ffffff"></div>
<div class="r" style="left:92px;top:502px;width:160px;height:17px;background:#ffffff"></div>
<div class="r" style="left:254px;top:502px;width:244px;height:17px;background:#ffffff"></div>
<div class="r" style="left:500px;top:502px;width:130px;height:17px;background:#ffffff"></div>
<div class="r" style="left:632px;top:502px;width:96px;height:17px;background:#ffffff"></div>
<div class="r" style="left:730px;top:502px;width:32px;height:17px;background:#ffffff"></div>
<div class="r" style="left:764px;top:502px;width:85px;height:17px;background:#ffffff"></div>
<div class="r" style="left:851px;top:502px;width:32px;height:17px;background:#ffffff"></div>
<div class="r" style="left:885px;top:502px;width:46px;height:17px;background:#ffffff"></div>
<div class="r" style="left:933px;top:502px;width:32px;height:17px;background:#ffffff"></div>
<div class="r" style="left:967px;top:502px;width:53px;height:17px;background:#ffffff"></div>
<div class="r" style="left:1022px;top:502px;width:75px;height:17px;background:#ffffff"></div>
<div class="t" style="left:4px;top:500px;font-size:11px;">17</div>
<svg class="ic" style="left:38px;top:504px" width="7" height="11" shape-rendering="crispEdges"><rect x="3" y="0" width="1" height="1" fill="#ff0000"/><rect x="3" y="1" width="1" height="1" fill="#ff0000"/><rect x="3" y="2" width="1" height="1" fill="#ff0000"/><rect x="3" y="3" width="1" height="1" fill="#ff0000"/><rect x="3" y="4" width="1" height="1" fill="#ff0000"/><rect x="3" y="5" width="1" height="1" fill="#ff0000"/><rect x="3" y="6" width="1" height="1" fill="#ff0000"/><rect x="0" y="7" width="7" height="1" fill="#ff0000"/><rect x="1" y="8" width="5" height="1" fill="#ff0000"/><rect x="2" y="9" width="3" height="1" fill="#ff0000"/><rect x="3" y="10" width="1" height="1" fill="#ff0000"/></svg>
<div class="t" style="left:48px;top:501px;font-size:11px;">(-1)</div>
<div class="t" style="left:93px;top:500px;font-size:11px;">103</div>
<svg class="ic" style="left:255px;top:507px" width="11" height="11" shape-rendering="crispEdges"><rect x="0" y="0" width="11" height="1" fill="#0000ff"/><rect x="0" y="1" width="1" height="1" fill="#0000ff"/><rect x="1" y="1" width="9" height="1" fill="#ffffff"/><rect x="10" y="1" width="1" height="1" fill="#0000ff"/><rect x="0" y="2" width="1" height="1" fill="#0000ff"/><rect x="1" y="2" width="9" height="1" fill="#ffffff"/><rect x="10" y="2" width="1" height="1" fill="#0000ff"/><rect x="0" y="3" width="4" height="1" fill="#0000ff"/><rect x="4" y="3" width="3" height="1" fill="#ffffff"/><rect x="7" y="3" width="4" height="1" fill="#0000ff"/><rect x="0" y="4" width="4" height="1" fill="#0000ff"/><rect x="4" y="4" width="3" height="1" fill="#ffffff"/><rect x="7" y="4" width="4" height="1" fill="#0000ff"/><rect x="0" y="5" width="4" height="1" fill="#0000ff"/><rect x="4" y="5" width="3" height="1" fill="#ffffff"/><rect x="7" y="5" width="4" height="1" fill="#0000ff"/><rect x="0" y="6" width="4" height="1" fill="#0000ff"/><rect x="4" y="6" width="3" height="1" fill="#ffffff"/><rect x="7" y="6" width="4" height="1" fill="#0000ff"/><rect x="0" y="7" width="4" height="1" fill="#0000ff"/><rect x="4" y="7" width="3" height="1" fill="#ffffff"/><rect x="7" y="7" width="4" height="1" fill="#0000ff"/><rect x="0" y="8" width="1" height="1" fill="#0000ff"/><rect x="1" y="8" width="9" height="1" fill="#ffffff"/><rect x="10" y="8" width="1" height="1" fill="#0000ff"/><rect x="0" y="9" width="1" height="1" fill="#0000ff"/><rect x="1" y="9" width="9" height="1" fill="#ffffff"/><rect x="10" y="9" width="1" height="1" fill="#0000ff"/><rect x="0" y="10" width="11" height="1" fill="#0000ff"/></svg>
<div class="t" style="left:275px;top:499px;font-size:11px;">Andr&eacute; (Hoofddorp)</div>
<div class="t" style="left:501px;top:500px;font-size:11px;">Nederland</div>
<div class="t" style="left:633px;top:500px;font-size:11px;">7.8</div>
<svg class="ic" style="left:731px;top:507px" width="11" height="7" shape-rendering="crispEdges"><rect x="3" y="0" width="1" height="1" fill="#ff7800"/><rect x="7" y="0" width="1" height="1" fill="#ff7800"/><rect x="2" y="1" width="2" height="1" fill="#ff7800"/><rect x="7" y="1" width="2" height="1" fill="#ff7800"/><rect x="1" y="2" width="3" height="1" fill="#ff7800"/><rect x="7" y="2" width="3" height="1" fill="#ff7800"/><rect x="0" y="3" width="11" height="1" fill="#ff7800"/><rect x="1" y="4" width="3" height="1" fill="#ff7800"/><rect x="7" y="4" width="3" height="1" fill="#ff7800"/><rect x="2" y="5" width="2" height="1" fill="#ff7800"/><rect x="7" y="5" width="2" height="1" fill="#ff7800"/><rect x="3" y="6" width="1" height="1" fill="#ff7800"/><rect x="7" y="6" width="1" height="1" fill="#ff7800"/></svg>
<div class="t" style="left:765px;top:500px;font-size:11px;">25</div>
<svg class="ic" style="left:852px;top:505px" width="11" height="11" shape-rendering="crispEdges"><rect x="0" y="0" width="9" height="1" fill="#000000"/><rect x="9" y="1" width="1" height="1" fill="#000000"/><rect x="10" y="2" width="1" height="1" fill="#000000"/><rect x="10" y="3" width="1" height="1" fill="#000000"/><rect x="3" y="4" width="1" height="1" fill="#000000"/><rect x="10" y="4" width="1" height="1" fill="#000000"/><rect x="2" y="5" width="2" height="1" fill="#000000"/><rect x="10" y="5" width="1" height="1" fill="#000000"/><rect x="1" y="6" width="3" height="1" fill="#000000"/><rect x="9" y="6" width="1" height="1" fill="#000000"/><rect x="0" y="7" width="9" height="1" fill="#000000"/><rect x="1" y="8" width="3" height="1" fill="#000000"/><rect x="2" y="9" width="2" height="1" fill="#000000"/><rect x="3" y="10" width="1" height="1" fill="#000000"/></svg>
<div class="t" style="left:886px;top:500px;font-size:11px;">198</div>
<svg class="ic" style="left:934px;top:505px" width="11" height="11" shape-rendering="crispEdges"><rect x="0" y="0" width="9" height="1" fill="#000000"/><rect x="9" y="1" width="1" height="1" fill="#000000"/><rect x="10" y="2" width="1" height="1" fill="#000000"/><rect x="10" y="3" width="1" height="1" fill="#000000"/><rect x="3" y="4" width="1" height="1" fill="#000000"/><rect x="10" y="4" width="1" height="1" fill="#000000"/><rect x="2" y="5" width="2" height="1" fill="#000000"/><rect x="10" y="5" width="1" height="1" fill="#000000"/><rect x="1" y="6" width="3" height="1" fill="#000000"/><rect x="9" y="6" width="1" height="1" fill="#000000"/><rect x="0" y="7" width="9" height="1" fill="#000000"/><rect x="1" y="8" width="3" height="1" fill="#000000"/><rect x="2" y="9" width="2" height="1" fill="#000000"/><rect x="3" y="10" width="1" height="1" fill="#000000"/></svg>
<div class="t" style="left:968px;top:500px;font-size:11px;">257.9</div>
<div class="r" style="left:3px;top:521px;width:32px;height:19px;background:#ffffff"></div>
<div class="r" style="left:37px;top:521px;width:53px;height:19px;background:#ffffff"></div>
<div class="r" style="left:92px;top:521px;width:160px;height:19px;background:#ffffff"></div>
<div class="r" style="left:254px;top:521px;width:244px;height:19px;background:#ffffff"></div>
<div class="r" style="left:500px;top:521px;width:130px;height:19px;background:#ffffff"></div>
<div class="r" style="left:632px;top:521px;width:96px;height:19px;background:#ffffff"></div>
<div class="r" style="left:730px;top:521px;width:32px;height:19px;background:#ffffff"></div>
<div class="r" style="left:764px;top:521px;width:85px;height:19px;background:#ffffff"></div>
<div class="r" style="left:851px;top:521px;width:32px;height:19px;background:#ffffff"></div>
<div class="r" style="left:885px;top:521px;width:46px;height:19px;background:#ffffff"></div>
<div class="r" style="left:933px;top:521px;width:32px;height:19px;background:#ffffff"></div>
<div class="r" style="left:967px;top:521px;width:53px;height:19px;background:#ffffff"></div>
<div class="r" style="left:1022px;top:521px;width:75px;height:19px;background:#ffffff"></div>
<div class="t" style="left:4px;top:521px;font-size:11px;">18</div>
<svg class="ic" style="left:38px;top:524px" width="7" height="11" shape-rendering="crispEdges"><rect x="3" y="0" width="1" height="1" fill="#ff0000"/><rect x="3" y="1" width="1" height="1" fill="#ff0000"/><rect x="3" y="2" width="1" height="1" fill="#ff0000"/><rect x="3" y="3" width="1" height="1" fill="#ff0000"/><rect x="3" y="4" width="1" height="1" fill="#ff0000"/><rect x="3" y="5" width="1" height="1" fill="#ff0000"/><rect x="3" y="6" width="1" height="1" fill="#ff0000"/><rect x="0" y="7" width="7" height="1" fill="#ff0000"/><rect x="1" y="8" width="5" height="1" fill="#ff0000"/><rect x="2" y="9" width="3" height="1" fill="#ff0000"/><rect x="3" y="10" width="1" height="1" fill="#ff0000"/></svg>
<div class="t" style="left:48px;top:521px;font-size:11px;">(-1)</div>
<div class="t" style="left:93px;top:523px;font-size:11px;">17</div>
<svg class="ic" style="left:115px;top:522px" width="9" height="15" shape-rendering="crispEdges"><rect x="0" y="0" width="9" height="1" fill="#000000"/><rect x="1" y="1" width="1" height="1" fill="#000000"/><rect x="2" y="1" width="1" height="1" fill="#ffffff"/><rect x="3" y="1" width="3" height="1" fill="#ffd800"/><rect x="6" y="1" width="1" height="1" fill="#ffffff"/><rect x="7" y="1" width="1" height="1" fill="#000000"/><rect x="1" y="2" width="1" height="1" fill="#000000"/><rect x="2" y="2" width="1" height="1" fill="#ffffff"/><rect x="3" y="2" width="3" height="1" fill="#ffd800"/><rect x="6" y="2" width="1" height="1" fill="#ffffff"/><rect x="7" y="2" width="1" height="1" fill="#000000"/><rect x="1" y="3" width="1" height="1" fill="#000000"/><rect x="2" y="3" width="1" height="1" fill="#ffffff"/><rect x="3" y="3" width="3" height="1" fill="#ffd800"/><rect x="6" y="3" width="1" height="1" fill="#ffffff"/><rect x="7" y="3" width="1" height="1" fill="#000000"/><rect x="2" y="4" width="1" height="1" fill="#000000"/><rect x="3" y="4" width="3" height="1" fill="#ffd800"/><rect x="6" y="4" width="1" height="1" fill="#000000"/><rect x="3" y="5" width="3" height="1" fill="#000000"/><rect x="2" y="6" width="5" height="1" fill="#000000"/><rect x="1" y="7" width="1" height="1" fill="#000000"/><rect x="2" y="7" width="1" height="1" fill="#ffffff"/><rect x="3" y="7" width="4" height="1" fill="#dca060"/><rect x="7" y="7" width="1" height="1" fill="#000000"/><rect x="0" y="8" width="1" height="1" fill="#000000"/><rect x="1" y="8" width="2" height="1" fill="#dca060"/><rect x="3" y="8" width="2" height="1" fill="#000000"/><rect x="5" y="8" width="3" height="1" fill="#dca060"/><rect x="8" y="8" width="1" height="1" fill="#000000"/><rect x="0" y="9" width="1" height="1" fill="#000000"/><rect x="1" y="9" width="4" height="1" fill="#dca060"/><rect x="5" y="9" width="1" height="1" fill="#000000"/><rect x="6" y="9" width="2" height="1" fill="#dca060"/><rect x="8" y="9" width="1" height="1" fill="#000000"/><rect x="0" y="10" width="1" height="1" fill="#000000"/><rect x="1" y="10" width="3" height="1" fill="#dca060"/><rect x="4" y="10" width="1" height="1" fill="#000000"/><rect x="5" y="10" width="3" height="1" fill="#dca060"/><rect x="8" y="10" width="1" height="1" fill="#000000"/><rect x="0" y="11" width="1" height="1" fill="#000000"/><rect x="1" y="11" width="4" height="1" fill="#dca060"/><rect x="5" y="11" width="1" height="1" fill="#000000"/><rect x="6" y="11" width="2" height="1" fill="#dca060"/><rect x="8" y="11" width="1" height="1" fill="#000000"/><rect x="0" y="12" width="1" height="1" fill="#000000"/><rect x="1" y="12" width="2" height="1" fill="#dca060"/><rect x="3" y="12" width="2" height="1" fill="#000000"/><rect x="5" y="12" width="3" height="1" fill="#dca060"/><rect x="8" y="12" width="1" height="1" fill="#000000"/><rect x="1" y="13" width="1" height="1" fill="#000000"/><rect x="2" y="13" width="5" height="1" fill="#dca060"/><rect x="7" y="13" width="1" height="1" fill="#000000"/><rect x="2" y="14" width="5" height="1" fill="#000000"/></svg>
<svg class="ic" style="left:255px;top:527px" width="11" height="11" shape-rendering="crispEdges"><rect x="0" y="0" width="11" height="1" fill="#0000ff"/><rect x="0" y="1" width="1" height="1" fill="#0000ff"/><rect x="1" y="1" width="9" height="1" fill="#ffffff"/><rect x="10" y="1" width="1" height="1" fill="#0000ff"/><rect x="0" y="2" width="1" height="1" fill="#0000ff"/><rect x="1" y="2" width="9" height="1" fill="#ffffff"/><rect x="10" y="2" width="1" height="1" fill="#0000ff"/><rect x="0" y="3" width="4" height="1" fill="#0000ff"/><rect x="4" y="3" width="3" height="1" fill="#ffffff"/><rect x="7" y="3" width="4" height="1" fill="#0000ff"/><rect x="0" y="4" width="4" height="1" fill="#0000ff"/><rect x="4" y="4" width="3" height="1" fill="#ffffff"/><rect x="7" y="4" width="4" height="1" fill="#0000ff"/><rect x="0" y="5" width="4" height="1" fill="#0000ff"/><rect x="4" y="5" width="3" height="1" fill="#ffffff"/><rect x="7" y="5" width="4" height="1" fill="#0000ff"/><rect x="0" y="6" width="4" height="1" fill="#0000ff"/><rect x="4" y="6" width="3" height="1" fill="#ffffff"/><rect x="7" y="6" width="4" height="1" fill="#0000ff"/><rect x="0" y="7" width="4" height="1" fill="#0000ff"/><rect x="4" y="7" width="3" height="1" fill="#ffffff"/><rect x="7" y="7" width="4" height="1" fill="#0000ff"/><rect x="0" y="8" width="1" height="1" fill="#0000ff"/><rect x="1" y="8" width="9" height="1" fill="#ffffff"/><rect x="10" y="8" width="1" height="1" fill="#0000ff"/><rect x="0" y="9" width="1" height="1" fill="#0000ff"/><rect x="1" y="9" width="9" height="1" fill="#ffffff"/><rect x="10" y="9" width="1" height="1" fill="#0000ff"/><rect x="0" y="10" width="11" height="1" fill="#0000ff"/></svg>
<div class="t" style="left:275px;top:519px;font-size:11px;">Diederik B (Den Haag)</div>
<div class="t" style="left:501px;top:521px;font-size:11px;">Ronsweersite</div>
<div class="t bd" style="left:633px;top:521px;font-size:11px;font-weight:bold;color:#008c1e;">8.1</div>
<svg class="ic" style="left:731px;top:527px" width="11" height="7" shape-rendering="crispEdges"><rect x="3" y="0" width="1" height="1" fill="#ff7800"/><rect x="7" y="0" width="1" height="1" fill="#ff7800"/><rect x="2" y="1" width="2" height="1" fill="#ff7800"/><rect x="7" y="1" width="2" height="1" fill="#ff7800"/><rect x="1" y="2" width="3" height="1" fill="#ff7800"/><rect x="7" y="2" width="3" height="1" fill="#ff7800"/><rect x="0" y="3" width="11" height="1" fill="#ff7800"/><rect x="1" y="4" width="3" height="1" fill="#ff7800"/><rect x="7" y="4" width="3" height="1" fill="#ff7800"/><rect x="2" y="5" width="2" height="1" fill="#ff7800"/><rect x="7" y="5" width="2" height="1" fill="#ff7800"/><rect x="3" y="6" width="1" height="1" fill="#ff7800"/><rect x="7" y="6" width="1" height="1" fill="#ff7800"/></svg>
<div class="t" style="left:765px;top:521px;font-size:11px;">38</div>
<svg class="ic" style="left:852px;top:525px" width="11" height="11" shape-rendering="crispEdges"><rect x="0" y="0" width="9" height="1" fill="#000000"/><rect x="9" y="1" width="1" height="1" fill="#000000"/><rect x="10" y="2" width="1" height="1" fill="#000000"/><rect x="10" y="3" width="1" height="1" fill="#000000"/><rect x="3" y="4" width="1" height="1" fill="#000000"/><rect x="10" y="4" width="1" height="1" fill="#000000"/><rect x="2" y="5" width="2" height="1" fill="#000000"/><rect x="10" y="5" width="1" height="1" fill="#000000"/><rect x="1" y="6" width="3" height="1" fill="#000000"/><rect x="9" y="6" width="1" height="1" fill="#000000"/><rect x="0" y="7" width="9" height="1" fill="#000000"/><rect x="1" y="8" width="3" height="1" fill="#000000"/><rect x="2" y="9" width="2" height="1" fill="#000000"/><rect x="3" y="10" width="1" height="1" fill="#000000"/></svg>
<div class="t" style="left:886px;top:521px;font-size:11px;">166</div>
<svg class="ic" style="left:934px;top:525px" width="11" height="11" shape-rendering="crispEdges"><rect x="0" y="0" width="9" height="1" fill="#000000"/><rect x="9" y="1" width="1" height="1" fill="#000000"/><rect x="10" y="2" width="1" height="1" fill="#000000"/><rect x="10" y="3" width="1" height="1" fill="#000000"/><rect x="3" y="4" width="1" height="1" fill="#000000"/><rect x="10" y="4" width="1" height="1" fill="#000000"/><rect x="2" y="5" width="2" height="1" fill="#000000"/><rect x="10" y="5" width="1" height="1" fill="#000000"/><rect x="1" y="6" width="3" height="1" fill="#000000"/><rect x="9" y="6" width="1" height="1" fill="#000000"/><rect x="0" y="7" width="9" height="1" fill="#000000"/><rect x="1" y="8" width="3" height="1" fill="#000000"/><rect x="2" y="9" width="2" height="1" fill="#000000"/><rect x="3" y="10" width="1" height="1" fill="#000000"/></svg>
<div class="t" style="left:968px;top:521px;font-size:11px;">257.7</div>
<div class="t" style="left:1023px;top:521px;font-size:11px;">(252.7 <span style="color:#f00">+ 5</span>)</div>
<div class="r" style="left:3px;top:542px;width:32px;height:18px;background:#ffffff"></div>
<div class="r" style="left:37px;top:542px;width:53px;height:18px;background:#ffffff"></div>
<div class="r" style="left:92px;top:542px;width:160px;height:18px;background:#ffffff"></div>
<div class="r" style="left:254px;top:542px;width:244px;height:18px;background:#ffffff"></div>
<div class="r" style="left:500px;top:542px;width:130px;height:18px;background:#ffffff"></div>
<div class="r" style="left:632px;top:542px;width:96px;height:18px;background:#ffffff"></div>
<div class="r" style="left:730px;top:542px;width:32px;height:18px;background:#ffffff"></div>
<div class="r" style="left:764px;top:542px;width:85px;height:18px;background:#ffffff"></div>
<div class="r" style="left:851px;top:542px;width:32px;height:18px;background:#ffffff"></div>
<div class="r" style="left:885px;top:542px;width:46px;height:18px;background:#ffffff"></div>
<div class="r" style="left:933px;top:542px;width:32px;height:18px;background:#ffffff"></div>
<div class="r" style="left:967px;top:542px;width:53px;height:18px;background:#ffffff"></div>
<div class="r" style="left:1022px;top:542px;width:75px;height:18px;background:#ffffff"></div>
<div class="t" style="left:4px;top:541px;font-size:11px;">19</div>
<div class="t" style="left:93px;top:541px;font-size:11px;">124</div>
<svg class="ic" style="left:255px;top:548px" width="11" height="11" shape-rendering="crispEdges"><rect x="0" y="0" width="11" height="1" fill="#0000ff"/><rect x="0" y="1" width="1" height="1" fill="#0000ff"/><rect x="1" y="1" width="9" height="1" fill="#ffffff"/><rect x="10" y="1" width="1" height="1" fill="#0000ff"/><rect x="0" y="2" width="1" height="1" fill="#0000ff"/><rect x="1" y="2" width="9" height="1" fill="#ffffff"/><rect x="10" y="2" width="1" height="1" fill="#0000ff"/><rect x="0" y="3" width="4" height="1" fill="#0000ff"/><rect x="4" y="3" width="3" height="1" fill="#ffffff"/><rect x="7" y="3" width="4" height="1" fill="#0000ff"/><rect x="0" y="4" width="4" height="1" fill="#0000ff"/><rect x="4" y="4" width="3" height="1" fill="#ffffff"/><rect x="7" y="4" width="4" height="1" fill="#0000ff"/><rect x="0" y="5" width="4" height="1" fill="#0000ff"/><rect x="4" y="5" width="3" height="1" fill="#ffffff"/><rect x="7" y="5" width="4" height="1" fill="#0000ff"/><rect x="0" y="6" width="4" height="1" fill="#0000ff"/><rect x="4" y="6" width="3" height="1" fill="#ffffff"/><rect x="7" y="6" width="4" height="1" fill="#0000ff"/><rect x="0" y="7" width="4" height="1" fill="#0000ff"/><rect x="4" y="7" width="3" height="1" fill="#ffffff"/><rect x="7" y="7" width="4" height="1" fill="#0000ff"/><rect x="0" y="8" width="1" height="1" fill="#0000ff"/><rect x="1" y="8" width="9" height="1" fill="#ffffff"/><rect x="10" y="8" width="1" height="1" fill="#0000ff"/><rect x="0" y="9" width="1" height="1" fill="#0000ff"/><rect x="1" y="9" width="9" height="1" fill="#ffffff"/><rect x="10" y="9" width="1" height="1" fill="#0000ff"/><rect x="0" y="10" width="11" height="1" fill="#0000ff"/></svg>
<div class="t" style="left:275px;top:539px;font-size:11px;">Volkert (Houten)</div>
<div class="t" style="left:501px;top:541px;font-size:11px;">Nederland</div>
<div class="t" style="left:633px;top:541px;font-size:11px;">7.9</div>
<svg class="ic" style="left:731px;top:547px" width="11" height="7" shape-rendering="crispEdges"><rect x="3" y="0" width="1" height="1" fill="#ff7800"/><rect x="7" y="0" width="1" height="1" fill="#ff7800"/><rect x="2" y="1" width="2" height="1" fill="#ff7800"/><rect x="7" y="1" width="2" height="1" fill="#ff7800"/><rect x="1" y="2" width="3" height="1" fill="#ff7800"/><rect x="7" y="2" width="3" height="1" fill="#ff7800"/><rect x="0" y="3" width="11" height="1" fill="#ff7800"/><rect x="1" y="4" width="3" height="1" fill="#ff7800"/><rect x="7" y="4" width="3" height="1" fill="#ff7800"/><rect x="2" y="5" width="2" height="1" fill="#ff7800"/><rect x="7" y="5" width="2" height="1" fill="#ff7800"/><rect x="3" y="6" width="1" height="1" fill="#ff7800"/><rect x="7" y="6" width="1" height="1" fill="#ff7800"/></svg>
<div class="t" style="left:765px;top:541px;font-size:11px;">19</div>
<svg class="ic" style="left:852px;top:545px" width="11" height="11" shape-rendering="crispEdges"><rect x="0" y="0" width="9" height="1" fill="#000000"/><rect x="9" y="1" width="1" height="1" fill="#000000"/><rect x="10" y="2" width="1" height="1" fill="#000000"/><rect x="10" y="3" width="1" height="1" fill="#000000"/><rect x="3" y="4" width="1" height="1" fill="#000000"/><rect x="10" y="4" width="1" height="1" fill="#000000"/><rect x="2" y="5" width="2" height="1" fill="#000000"/><rect x="10" y="5" width="1" height="1" fill="#000000"/><rect x="1" y="6" width="3" height="1" fill="#000000"/><rect x="9" y="6" width="1" height="1" fill="#000000"/><rect x="0" y="7" width="9" height="1" fill="#000000"/><rect x="1" y="8" width="3" height="1" fill="#000000"/><rect x="2" y="9" width="2" height="1" fill="#000000"/><rect x="3" y="10" width="1" height="1" fill="#000000"/></svg>
<div class="t" style="left:886px;top:541px;font-size:11px;">201</div>
<svg class="ic" style="left:934px;top:545px" width="11" height="11" shape-rendering="crispEdges"><rect x="0" y="0" width="9" height="1" fill="#000000"/><rect x="9" y="1" width="1" height="1" fill="#000000"/><rect x="10" y="2" width="1" height="1" fill="#000000"/><rect x="10" y="3" width="1" height="1" fill="#000000"/><rect x="3" y="4" width="1" height="1" fill="#000000"/><rect x="10" y="4" width="1" height="1" fill="#000000"/><rect x="2" y="5" width="2" height="1" fill="#000000"/><rect x="10" y="5" width="1" height="1" fill="#000000"/><rect x="1" y="6" width="3" height="1" fill="#000000"/><rect x="9" y="6" width="1" height="1" fill="#000000"/><rect x="0" y="7" width="9" height="1" fill="#000000"/><rect x="1" y="8" width="3" height="1" fill="#000000"/><rect x="2" y="9" width="2" height="1" fill="#000000"/><rect x="3" y="10" width="1" height="1" fill="#000000"/></svg>
<div class="t" style="left:968px;top:541px;font-size:11px;">256.9</div>
<div class="r" style="left:3px;top:562px;width:32px;height:17px;background:#ffffff"></div>
<div class="r" style="left:37px;top:562px;width:53px;height:17px;background:#ffffff"></div>
<div class="r" style="left:92px;top:562px;width:160px;height:17px;background:#ffffff"></div>
<div class="r" style="left:254px;top:562px;width:244px;height:17px;background:#ffffff"></div>
<div class="r" style="left:500px;top:562px;width:130px;height:17px;background:#ffffff"></div>
<div class="r" style="left:632px;top:562px;width:96px;height:17px;background:#ffffff"></div>
<div class="r" style="left:730px;top:562px;width:32px;height:17px;background:#ffffff"></div>
<div class="r" style="left:764px;top:562px;width:85px;height:17px;background:#ffffff"></div>
<div class="r" style="left:851px;top:562px;width:32px;height:17px;background:#ffffff"></div>
<div class="r" style="left:885px;top:562px;width:46px;height:17px;background:#ffffff"></div>
<div class="r" style="left:933px;top:562px;width:32px;height:17px;background:#ffffff"></div>
<div class="r" style="left:967px;top:562px;width:53px;height:17px;background:#ffffff"></div>
<div class="r" style="left:1022px;top:562px;width:75px;height:17px;background:#ffffff"></div>
<div class="t" style="left:4px;top:560px;font-size:11px;">20</div>
<div class="t" style="left:93px;top:560px;font-size:11px;">23</div>
<svg class="ic" style="left:255px;top:567px" width="11" height="11" shape-rendering="crispEdges"><rect x="0" y="0" width="11" height="1" fill="#0000ff"/><rect x="0" y="1" width="1" height="1" fill="#0000ff"/><rect x="1" y="1" width="9" height="1" fill="#ffffff"/><rect x="10" y="1" width="1" height="1" fill="#0000ff"/><rect x="0" y="2" width="1" height="1" fill="#0000ff"/><rect x="1" y="2" width="9" height="1" fill="#ffffff"/><rect x="10" y="2" width="1" height="1" fill="#0000ff"/><rect x="0" y="3" width="4" height="1" fill="#0000ff"/><rect x="4" y="3" width="3" height="1" fill="#ffffff"/><rect x="7" y="3" width="4" height="1" fill="#0000ff"/><rect x="0" y="4" width="4" height="1" fill="#0000ff"/><rect x="4" y="4" width="3" height="1" fill="#ffffff"/><rect x="7" y="4" width="4" height="1" fill="#0000ff"/><rect x="0" y="5" width="4" height="1" fill="#0000ff"/><rect x="4" y="5" width="3" height="1" fill="#ffffff"/><rect x="7" y="5" width="4" height="1" fill="#0000ff"/><rect x="0" y="6" width="4" height="1" fill="#0000ff"/><rect x="4" y="6" width="3" height="1" fill="#ffffff"/><rect x="7" y="6" width="4" height="1" fill="#0000ff"/><rect x="0" y="7" width="4" height="1" fill="#0000ff"/><rect x="4" y="7" width="3" height="1" fill="#ffffff"/><rect x="7" y="7" width="4" height="1" fill="#0000ff"/><rect x="0" y="8" width="1" height="1" fill="#0000ff"/><rect x="1" y="8" width="9" height="1" fill="#ffffff"/><rect x="10" y="8" width="1" height="1" fill="#0000ff"/><rect x="0" y="9" width="1" height="1" fill="#0000ff"/><rect x="1" y="9" width="9" height="1" fill="#ffffff"/><rect x="10" y="9" width="1" height="1" fill="#0000ff"/><rect x="0" y="10" width="11" height="1" fill="#0000ff"/></svg>
<div class="t" style="left:275px;top:559px;font-size:11px;">Jelmer (Kampen)</div>
<div class="t" style="left:501px;top:560px;font-size:11px;">Nederland</div>
<div class="t" style="left:633px;top:560px;font-size:11px;">7.8</div>
<svg class="ic" style="left:731px;top:567px" width="11" height="7" shape-rendering="crispEdges"><rect x="3" y="0" width="1" height="1" fill="#ff7800"/><rect x="7" y="0" width="1" height="1" fill="#ff7800"/><rect x="2" y="1" width="2" height="1" fill="#ff7800"/><rect x="7" y="1" width="2" height="1" fill="#ff7800"/><rect x="1" y="2" width="3" height="1" fill="#ff7800"/><rect x="7" y="2" width="3" height="1" fill="#ff7800"/><rect x="0" y="3" width="11" height="1" fill="#ff7800"/><rect x="1" y="4" width="3" height="1" fill="#ff7800"/><rect x="7" y="4" width="3" height="1" fill="#ff7800"/><rect x="2" y="5" width="2" height="1" fill="#ff7800"/><rect x="7" y="5" width="2" height="1" fill="#ff7800"/><rect x="3" y="6" width="1" height="1" fill="#ff7800"/><rect x="7" y="6" width="1" height="1" fill="#ff7800"/></svg>
<div class="t" style="left:765px;top:560px;font-size:11px;">31</div>
<svg class="ic" style="left:852px;top:565px" width="11" height="11" shape-rendering="crispEdges"><rect x="0" y="0" width="9" height="1" fill="#000000"/><rect x="9" y="1" width="1" height="1" fill="#000000"/><rect x="10" y="2" width="1" height="1" fill="#000000"/><rect x="10" y="3" width="1" height="1" fill="#000000"/><rect x="3" y="4" width="1" height="1" fill="#000000"/><rect x="10" y="4" width="1" height="1" fill="#000000"/><rect x="2" y="5" width="2" height="1" fill="#000000"/><rect x="10" y="5" width="1" height="1" fill="#000000"/><rect x="1" y="6" width="3" height="1" fill="#000000"/><rect x="9" y="6" width="1" height="1" fill="#000000"/><rect x="0" y="7" width="9" height="1" fill="#000000"/><rect x="1" y="8" width="3" height="1" fill="#000000"/><rect x="2" y="9" width="2" height="1" fill="#000000"/><rect x="3" y="10" width="1" height="1" fill="#000000"/></svg>
<div class="t" style="left:886px;top:560px;font-size:11px;">189</div>
<svg class="ic" style="left:934px;top:565px" width="11" height="11" shape-rendering="crispEdges"><rect x="0" y="0" width="9" height="1" fill="#000000"/><rect x="9" y="1" width="1" height="1" fill="#000000"/><rect x="10" y="2" width="1" height="1" fill="#000000"/><rect x="10" y="3" width="1" height="1" fill="#000000"/><rect x="3" y="4" width="1" height="1" fill="#000000"/><rect x="10" y="4" width="1" height="1" fill="#000000"/><rect x="2" y="5" width="2" height="1" fill="#000000"/><rect x="10" y="5" width="1" height="1" fill="#000000"/><rect x="1" y="6" width="3" height="1" fill="#000000"/><rect x="9" y="6" width="1" height="1" fill="#000000"/><rect x="0" y="7" width="9" height="1" fill="#000000"/><rect x="1" y="8" width="3" height="1" fill="#000000"/><rect x="2" y="9" width="2" height="1" fill="#000000"/><rect x="3" y="10" width="1" height="1" fill="#000000"/></svg>
<div class="t" style="left:968px;top:560px;font-size:11px;">256.6</div>
<div class="r" style="left:3px;top:581px;width:32px;height:18px;background:#ffffff"></div>
<div class="r" style="left:37px;top:581px;width:53px;height:18px;background:#ffffff"></div>
<div class="r" style="left:92px;top:581px;width:160px;height:18px;background:#ffffff"></div>
<div class="r" style="left:254px;top:581px;width:244px;height:18px;background:#ffffff"></div>
<div class="r" style="left:500px;top:581px;width:130px;height:18px;background:#ffffff"></div>
<div class="r" style="left:632px;top:581px;width:96px;height:18px;background:#ffffff"></div>
<div class="r" style="left:730px;top:581px;width:32px;height:18px;background:#ffffff"></div>
<div class="r" style="left:764px;top:581px;width:85px;height:18px;background:#ffffff"></div>
<div class="r" style="left:851px;top:581px;width:32px;height:18px;background:#ffffff"></div>
<div class="r" style="left:885px;top:581px;width:46px;height:18px;background:#ffffff"></div>
<div class="r" style="left:933px;top:581px;width:32px;height:18px;background:#ffffff"></div>
<div class="r" style="left:967px;top:581px;width:53px;height:18px;background:#ffffff"></div>
<div class="r" style="left:1022px;top:581px;width:75px;height:18px;background:#ffffff"></div>
<div class="t" style="left:4px;top:580px;font-size:11px;">21</div>
<svg class="ic" style="left:38px;top:583px" width="7" height="11" shape-rendering="crispEdges"><rect x="3" y="0" width="1" height="1" fill="#00ff00"/><rect x="2" y="1" width="3" height="1" fill="#00ff00"/><rect x="1" y="2" width="5" height="1" fill="#00ff00"/><rect x="0" y="3" width="7" height="1" fill="#00ff00"/><rect x="3" y="4" width="1" height="1" fill="#00ff00"/><rect x="3" y="5" width="1" height="1" fill="#00ff00"/><rect x="3" y="6" width="1" height="1" fill="#00ff00"/><rect x="3" y="7" width="1" height="1" fill="#00ff00"/><rect x="3" y="8" width="1" height="1" fill="#00ff00"/><rect x="3" y="9" width="1" height="1" fill="#00ff00"/><rect x="3" y="10" width="1" height="1" fill="#00ff00"/></svg>
<div class="t" style="left:48px;top:580px;font-size:11px;">(+7)</div>
<div class="t" style="left:93px;top:580px;font-size:11px;">110</div>
<svg class="ic" style="left:255px;top:587px" width="11" height="11" shape-rendering="crispEdges"><rect x="0" y="0" width="11" height="1" fill="#0000ff"/><rect x="0" y="1" width="1" height="1" fill="#0000ff"/><rect x="1" y="1" width="9" height="1" fill="#ffffff"/><rect x="10" y="1" width="1" height="1" fill="#0000ff"/><rect x="0" y="2" width="1" height="1" fill="#0000ff"/><rect x="1" y="2" width="9" height="1" fill="#ffffff"/><rect x="10" y="2" width="1" height="1" fill="#0000ff"/><rect x="0" y="3" width="4" height="1" fill="#0000ff"/><rect x="4" y="3" width="3" height="1" fill="#ffffff"/><rect x="7" y="3" width="4" height="1" fill="#0000ff"/><rect x="0" y="4" width="4" height="1" fill="#0000ff"/><rect x="4" y="4" width="3" height="1" fill="#ffffff"/><rect x="7" y="4" width="4" height="1" fill="#0000ff"/><rect x="0" y="5" width="4" height="1" fill="#0000ff"/><rect x="4" y="5" width="3" height="1" fill="#ffffff"/><rect x="7" y="5" width="4" height="1" fill="#0000ff"/><rect x="0" y="6" width="4" height="1" fill="#0000ff"/><rect x="4" y="6" width="3" height="1" fill="#ffffff"/><rect x="7" y="6" width="4" height="1" fill="#0000ff"/><rect x="0" y="7" width="4" height="1" fill="#0000ff"/><rect x="4" y="7" width="3" height="1" fill="#ffffff"/><rect x="7" y="7" width="4" height="1" fill="#0000ff"/><rect x="0" y="8" width="1" height="1" fill="#0000ff"/><rect x="1" y="8" width="9" height="1" fill="#ffffff"/><rect x="10" y="8" width="1" height="1" fill="#0000ff"/><rect x="0" y="9" width="1" height="1" fill="#0000ff"/><rect x="1" y="9" width="9" height="1" fill="#ffffff"/><rect x="10" y="9" width="1" height="1" fill="#0000ff"/><rect x="0" y="10" width="11" height="1" fill="#0000ff"/></svg>
<div class="t" style="left:275px;top:578px;font-size:11px;">Harro Doldersum (Bergentheim)</div>
<div class="t" style="left:501px;top:580px;font-size:11px;">Nederland</div>
<div class="t" style="left:633px;top:580px;font-size:11px;">7.6</div>
<svg class="ic" style="left:731px;top:586px" width="11" height="7" shape-rendering="crispEdges"><rect x="3" y="0" width="1" height="1" fill="#ff7800"/><rect x="7" y="0" width="1" height="1" fill="#ff7800"/><rect x="2" y="1" width="2" height="1" fill="#ff7800"/><rect x="7" y="1" width="2" height="1" fill="#ff7800"/><rect x="1" y="2" width="3" height="1" fill="#ff7800"/><rect x="7" y="2" width="3" height="1" fill="#ff7800"/><rect x="0" y="3" width="11" height="1" fill="#ff7800"/><rect x="1" y="4" width="3" height="1" fill="#ff7800"/><rect x="7" y="4" width="3" height="1" fill="#ff7800"/><rect x="2" y="5" width="2" height="1" fill="#ff7800"/><rect x="7" y="5" width="2" height="1" fill="#ff7800"/><rect x="3" y="6" width="1" height="1" fill="#ff7800"/><rect x="7" y="6" width="1" height="1" fill="#ff7800"/></svg>
<div class="t" style="left:765px;top:580px;font-size:11px;">60</div>
<div class="t" style="left:886px;top:580px;font-size:11px;">191</div>
<svg class="ic" style="left:934px;top:584px" width="11" height="11" shape-rendering="crispEdges"><rect x="0" y="0" width="9" height="1" fill="#000000"/><rect x="9" y="1" width="1" height="1" fill="#000000"/><rect x="10" y="2" width="1" height="1" fill="#000000"/><rect x="10" y="3" width="1" height="1" fill="#000000"/><rect x="3" y="4" width="1" height="1" fill="#000000"/><rect x="10" y="4" width="1" height="1" fill="#000000"/><rect x="2" y="5" width="2" height="1" fill="#000000"/><rect x="10" y="5" width="1" height="1" fill="#000000"/><rect x="1" y="6" width="3" height="1" fill="#000000"/><rect x="9" y="6" width="1" height="1" fill="#000000"/><rect x="0" y="7" width="9" height="1" fill="#000000"/><rect x="1" y="8" width="3" height="1" fill="#000000"/><rect x="2" y="9" width="2" height="1" fill="#000000"/><rect x="3" y="10" width="1" height="1" fill="#000000"/></svg>
<div class="t" style="left:968px;top:580px;font-size:11px;">256</div>
<div class="r" style="left:3px;top:601px;width:32px;height:17px;background:#ffffff"></div>
<div class="r" style="left:37px;top:601px;width:53px;height:17px;background:#ffffff"></div>
<div class="r" style="left:92px;top:601px;width:160px;height:17px;background:#ffffff"></div>
<div class="r" style="left:254px;top:601px;width:244px;height:17px;background:#ffffff"></div>
<div class="r" style="left:500px;top:601px;width:130px;height:17px;background:#ffffff"></div>
<div class="r" style="left:632px;top:601px;width:96px;height:17px;background:#ffffff"></div>
<div class="r" style="left:730px;top:601px;width:32px;height:17px;background:#ffffff"></div>
<div class="r" style="left:764px;top:601px;width:85px;height:17px;background:#ffffff"></div>
<div class="r" style="left:851px;top:601px;width:32px;height:17px;background:#ffffff"></div>
<div class="r" style="left:885px;top:601px;width:46px;height:17px;background:#ffffff"></div>
<div class="r" style="left:933px;top:601px;width:32px;height:17px;background:#ffffff"></div>
<div class="r" style="left:967px;top:601px;width:53px;height:17px;background:#ffffff"></div>
<div class="r" style="left:1022px;top:601px;width:75px;height:17px;background:#ffffff"></div>
<div class="t" style="left:4px;top:599px;font-size:11px;">22</div>
<svg class="ic" style="left:38px;top:603px" width="7" height="11" shape-rendering="crispEdges"><rect x="3" y="0" width="1" height="1" fill="#ff0000"/><rect x="3" y="1" width="1" height="1" fill="#ff0000"/><rect x="3" y="2" width="1" height="1" fill="#ff0000"/><rect x="3" y="3" width="1" height="1" fill="#ff0000"/><rect x="3" y="4" width="1" height="1" fill="#ff0000"/><rect x="3" y="5" width="1" height="1" fill="#ff0000"/><rect x="3" y="6" width="1" height="1" fill="#ff0000"/><rect x="0" y="7" width="7" height="1" fill="#ff0000"/><rect x="1" y="8" width="5" height="1" fill="#ff0000"/><rect x="2" y="9" width="3" height="1" fill="#ff0000"/><rect x="3" y="10" width="1" height="1" fill="#ff0000"/></svg>
<div class="t" style="left:48px;top:600px;font-size:11px;">(-13)</div>
<div class="t" style="left:93px;top:599px;font-size:11px;">22</div>
<svg class="ic" style="left:255px;top:606px" width="11" height="11" shape-rendering="crispEdges"><rect x="0" y="0" width="11" height="1" fill="#0000ff"/><rect x="0" y="1" width="1" height="1" fill="#0000ff"/><rect x="1" y="1" width="9" height="1" fill="#ffffff"/><rect x="10" y="1" width="1" height="1" fill="#0000ff"/><rect x="0" y="2" width="1" height="1" fill="#0000ff"/><rect x="1" y="2" width="9" height="1" fill="#ffffff"/><rect x="10" y="2" width="1" height="1" fill="#0000ff"/><rect x="0" y="3" width="4" height="1" fill="#0000ff"/><rect x="4" y="3" width="3" height="1" fill="#ffffff"/><rect x="7" y="3" width="4" height="1" fill="#0000ff"/><rect x="0" y="4" width="4" height="1" fill="#0000ff"/><rect x="4" y="4" width="3" height="1" fill="#ffffff"/><rect x="7" y="4" width="4" height="1" fill="#0000ff"/><rect x="0" y="5" width="4" height="1" fill="#0000ff"/><rect x="4" y="5" width="3" height="1" fill="#ffffff"/><rect x="7" y="5" width="4" height="1" fill="#0000ff"/><rect x="0" y="6" width="4" height="1" fill="#0000ff"/><rect x="4" y="6" width="3" height="1" fill="#ffffff"/><rect x="7" y="6" width="4" height="1" fill="#0000ff"/><rect x="0" y="7" width="4" height="1" fill="#0000ff"/><rect x="4" y="7" width="3" height="1" fill="#ffffff"/><rect x="7" y="7" width="4" height="1" fill="#0000ff"/><rect x="0" y="8" width="1" height="1" fill="#0000ff"/><rect x="1" y="8" width="9" height="1" fill="#ffffff"/><rect x="10" y="8" width="1" height="1" fill="#0000ff"/><rect x="0" y="9" width="1" height="1" fill="#0000ff"/><rect x="1" y="9" width="9" height="1" fill="#ffffff"/><rect x="10" y="9" width="1" height="1" fill="#0000ff"/><rect x="0" y="10" width="11" height="1" fill="#0000ff"/></svg>
<div class="t" style="left:275px;top:598px;font-size:11px;">Frans (Franeker)</div>
<div class="t" style="left:501px;top:599px;font-size:11px;">Nederland</div>
<div class="t bd" style="left:633px;top:599px;font-size:11px;font-weight:bold;color:#008c1e;">8.1</div>
<svg class="ic" style="left:731px;top:606px" width="11" height="7" shape-rendering="crispEdges"><rect x="3" y="0" width="1" height="1" fill="#ff7800"/><rect x="7" y="0" width="1" height="1" fill="#ff7800"/><rect x="2" y="1" width="2" height="1" fill="#ff7800"/><rect x="7" y="1" width="2" height="1" fill="#ff7800"/><rect x="1" y="2" width="3" height="1" fill="#ff7800"/><rect x="7" y="2" width="3" height="1" fill="#ff7800"/><rect x="0" y="3" width="11" height="1" fill="#ff7800"/><rect x="1" y="4" width="3" height="1" fill="#ff7800"/><rect x="7" y="4" width="3" height="1" fill="#ff7800"/><rect x="2" y="5" width="2" height="1" fill="#ff7800"/><rect x="7" y="5" width="2" height="1" fill="#ff7800"/><rect x="3" y="6" width="1" height="1" fill="#ff7800"/><rect x="7" y="6" width="1" height="1" fill="#ff7800"/></svg>
<div class="t" style="left:765px;top:599px;font-size:11px;">45</div>
<div class="t" style="left:886px;top:599px;font-size:11px;">155</div>
<svg class="ic" style="left:934px;top:604px" width="11" height="11" shape-rendering="crispEdges"><rect x="0" y="0" width="9" height="1" fill="#000000"/><rect x="9" y="1" width="1" height="1" fill="#000000"/><rect x="10" y="2" width="1" height="1" fill="#000000"/><rect x="10" y="3" width="1" height="1" fill="#000000"/><rect x="3" y="4" width="1" height="1" fill="#000000"/><rect x="10" y="4" width="1" height="1" fill="#000000"/><rect x="2" y="5" width="2" height="1" fill="#000000"/><rect x="10" y="5" width="1" height="1" fill="#000000"/><rect x="1" y="6" width="3" height="1" fill="#000000"/><rect x="9" y="6" width="1" height="1" fill="#000000"/><rect x="0" y="7" width="9" height="1" fill="#000000"/><rect x="1" y="8" width="3" height="1" fill="#000000"/><rect x="2" y="9" width="2" height="1" fill="#000000"/><rect x="3" y="10" width="1" height="1" fill="#000000"/></svg>
<div class="t" style="left:968px;top:599px;font-size:11px;">255.8</div>
<div class="t" style="left:1023px;top:599px;font-size:11px;">(250.8 <span style="color:#f00">+ 5</span>)</div>
<div class="r" style="left:3px;top:620px;width:32px;height:18px;background:#ffffff"></div>
<div class="r" style="left:37px;top:620px;width:53px;height:18px;background:#ffffff"></div>
<div class="r" style="left:92px;top:620px;width:160px;height:18px;background:#ffffff"></div>
<div class="r" style="left:254px;top:620px;width:244px;height:18px;background:#ffffff"></div>
<div class="r" style="left:500px;top:620px;width:130px;height:18px;background:#ffffff"></div>
<div class="r" style="left:632px;top:620px;width:96px;height:18px;background:#ffffff"></div>
<div class="r" style="left:730px;top:620px;width:32px;height:18px;background:#ffffff"></div>
<div class="r" style="left:764px;top:620px;width:85px;height:18px;background:#ffffff"></div>
<div class="r" style="left:851px;top:620px;width:32px;height:18px;background:#ffffff"></div>
<div class="r" style="left:885px;top:620px;width:46px;height:18px;background:#ffffff"></div>
<div class="r" style="left:933px;top:620px;width:32px;height:18px;background:#ffffff"></div>
<div class="r" style="left:967px;top:620px;width:53px;height:18px;background:#ffffff"></div>
<div class="r" style="left:1022px;top:620px;width:75px;height:18px;background:#ffffff"></div>
<div class="t" style="left:4px;top:619px;font-size:11px;">23</div>
<svg class="ic" style="left:38px;top:622px" width="7" height="11" shape-rendering="crispEdges"><rect x="3" y="0" width="1" height="1" fill="#ff0000"/><rect x="3" y="1" width="1" height="1" fill="#ff0000"/><rect x="3" y="2" width="1" height="1" fill="#ff0000"/><rect x="3" y="3" width="1" height="1" fill="#ff0000"/><rect x="3" y="4" width="1" height="1" fill="#ff0000"/><rect x="3" y="5" width="1" height="1" fill="#ff0000"/><rect x="3" y="6" width="1" height="1" fill="#ff0000"/><rect x="0" y="7" width="7" height="1" fill="#ff0000"/><rect x="1" y="8" width="5" height="1" fill="#ff0000"/><rect x="2" y="9" width="3" height="1" fill="#ff0000"/><rect x="3" y="10" width="1" height="1" fill="#ff0000"/></svg>
<div class="t" style="left:48px;top:619px;font-size:11px;">(-13)</div>
<div class="t" style="left:93px;top:619px;font-size:11px;">53</div>
<svg class="ic" style="left:255px;top:626px" width="11" height="11" shape-rendering="crispEdges"><rect x="0" y="0" width="11" height="1" fill="#0000ff"/><rect x="0" y="1" width="1" height="1" fill="#0000ff"/><rect x="1" y="1" width="9" height="1" fill="#ffffff"/><rect x="10" y="1" width="1" height="1" fill="#0000ff"/><rect x="0" y="2" width="1" height="1" fill="#0000ff"/><rect x="1" y="2" width="9" height="1" fill="#ffffff"/><rect x="10" y="2" width="1" height="1" fill="#0000ff"/><rect x="0" y="3" width="4" height="1" fill="#0000ff"/><rect x="4" y="3" width="3" height="1" fill="#ffffff"/><rect x="7" y="3" width="4" height="1" fill="#0000ff"/><rect x="0" y="4" width="4" height="1" fill="#0000ff"/><rect x="4" y="4" width="3" height="1" fill="#ffffff"/><rect x="7" y="4" width="4" height="1" fill="#0000ff"/><rect x="0" y="5" width="4" height="1" fill="#0000ff"/><rect x="4" y="5" width="3" height="1" fill="#ffffff"/><rect x="7" y="5" width="4" height="1" fill="#0000ff"/><rect x="0" y="6" width="4" height="1" fill="#0000ff"/><rect x="4" y="6" width="3" height="1" fill="#ffffff"/><rect x="7" y="6" width="4" height="1" fill="#0000ff"/><rect x="0" y="7" width="4" height="1" fill="#0000ff"/><rect x="4" y="7" width="3" height="1" fill="#ffffff"/><rect x="7" y="7" width="4" height="1" fill="#0000ff"/><rect x="0" y="8" width="1" height="1" fill="#0000ff"/><rect x="1" y="8" width="9" height="1" fill="#ffffff"/><rect x="10" y="8" width="1" height="1" fill="#0000ff"/><rect x="0" y="9" width="1" height="1" fill="#0000ff"/><rect x="1" y="9" width="9" height="1" fill="#ffffff"/><rect x="10" y="9" width="1" height="1" fill="#0000ff"/><rect x="0" y="10" width="11" height="1" fill="#0000ff"/></svg>
<div class="t" style="left:275px;top:617px;font-size:11px;">Stefan (Maarssenbroek-Utrecht)</div>
<div class="t" style="left:501px;top:619px;font-size:11px;">Nederland</div>
<div class="t" style="left:633px;top:619px;font-size:11px;">7.5</div>
<svg class="ic" style="left:731px;top:625px" width="11" height="7" shape-rendering="crispEdges"><rect x="3" y="0" width="1" height="1" fill="#ff7800"/><rect x="7" y="0" width="1" height="1" fill="#ff7800"/><rect x="2" y="1" width="2" height="1" fill="#ff7800"/><rect x="7" y="1" width="2" height="1" fill="#ff7800"/><rect x="1" y="2" width="3" height="1" fill="#ff7800"/><rect x="7" y="2" width="3" height="1" fill="#ff7800"/><rect x="0" y="3" width="11" height="1" fill="#ff7800"/><rect x="1" y="4" width="3" height="1" fill="#ff7800"/><rect x="7" y="4" width="3" height="1" fill="#ff7800"/><rect x="2" y="5" width="2" height="1" fill="#ff7800"/><rect x="7" y="5" width="2" height="1" fill="#ff7800"/><rect x="3" y="6" width="1" height="1" fill="#ff7800"/><rect x="7" y="6" width="1" height="1" fill="#ff7800"/></svg>
<div class="t" style="left:765px;top:619px;font-size:11px;">45</div>
<div class="t" style="left:886px;top:619px;font-size:11px;">180</div>
<svg class="ic" style="left:934px;top:623px" width="11" height="11" shape-rendering="crispEdges"><rect x="0" y="0" width="9" height="1" fill="#000000"/><rect x="9" y="1" width="1" height="1" fill="#000000"/><rect x="10" y="2" width="1" height="1" fill="#000000"/><rect x="10" y="3" width="1" height="1" fill="#000000"/><rect x="3" y="4" width="1" height="1" fill="#000000"/><rect x="10" y="4" width="1" height="1" fill="#000000"/><rect x="2" y="5" width="2" height="1" fill="#000000"/><rect x="10" y="5" width="1" height="1" fill="#000000"/><rect x="1" y="6" width="3" height="1" fill="#000000"/><rect x="9" y="6" width="1" height="1" fill="#000000"/><rect x="0" y="7" width="9" height="1" fill="#000000"/><rect x="1" y="8" width="3" height="1" fill="#000000"/><rect x="2" y="9" width="2" height="1" fill="#000000"/><rect x="3" y="10" width="1" height="1" fill="#000000"/></svg>
<div class="t" style="left:968px;top:619px;font-size:11px;">255.4</div>
<div class="r" style="left:3px;top:640px;width:32px;height:17px;background:#ffffff"></div>
<div class="r" style="left:37px;top:640px;width:53px;height:17px;background:#ffffff"></div>
<div class="r" style="left:92px;top:640px;width:160px;height:17px;background:#ffffff"></div>
<div class="r" style="left:254px;top:640px;width:244px;height:17px;background:#ffffff"></div>
<div class="r" style="left:500px;top:640px;width:130px;height:17px;background:#ffffff"></div>
<div class="r" style="left:632px;top:640px;width:96px;height:17px;background:#ffffff"></div>
<div class="r" style="left:730px;top:640px;width:32px;height:17px;background:#ffffff"></div>
<div class="r" style="left:764px;top:640px;width:85px;height:17px;background:#ffffff"></div>
<div class="r" style="left:851px;top:640px;width:32px;height:17px;background:#ffffff"></div>
<div class="r" style="left:885px;top:640px;width:46px;height:17px;background:#ffffff"></div>
<div class="r" style="left:933px;top:640px;width:32px;height:17px;background:#ffffff"></div>
<div class="r" style="left:967px;top:640px;width:53px;height:17px;background:#ffffff"></div>
<div class="r" style="left:1022px;top:640px;width:75px;height:17px;background:#ffffff"></div>
<div class="t" style="left:4px;top:638px;font-size:11px;">24</div>
<svg class="ic" style="left:38px;top:642px" width="7" height="11" shape-rendering="crispEdges"><rect x="3" y="0" width="1" height="1" fill="#ff0000"/><rect x="3" y="1" width="1" height="1" fill="#ff0000"/><rect x="3" y="2" width="1" height="1" fill="#ff0000"/><rect x="3" y="3" width="1" height="1" fill="#ff0000"/><rect x="3" y="4" width="1" height="1" fill="#ff0000"/><rect x="3" y="5" width="1" height="1" fill="#ff0000"/><rect x="3" y="6" width="1" height="1" fill="#ff0000"/><rect x="0" y="7" width="7" height="1" fill="#ff0000"/><rect x="1" y="8" width="5" height="1" fill="#ff0000"/><rect x="2" y="9" width="3" height="1" fill="#ff0000"/><rect x="3" y="10" width="1" height="1" fill="#ff0000"/></svg>
<div class="t" style="left:48px;top:639px;font-size:11px;">(-12)</div>
<div class="t" style="left:93px;top:638px;font-size:11px;">141</div>
<svg class="ic" style="left:255px;top:645px" width="11" height="11" shape-rendering="crispEdges"><rect x="0" y="0" width="11" height="1" fill="#0000ff"/><rect x="0" y="1" width="1" height="1" fill="#0000ff"/><rect x="1" y="1" width="9" height="1" fill="#ffffff"/><rect x="10" y="1" width="1" height="1" fill="#0000ff"/><rect x="0" y="2" width="1" height="1" fill="#0000ff"/><rect x="1" y="2" width="9" height="1" fill="#ffffff"/><rect x="10" y="2" width="1" height="1" fill="#0000ff"/><rect x="0" y="3" width="4" height="1" fill="#0000ff"/><rect x="4" y="3" width="3" height="1" fill="#ffffff"/><rect x="7" y="3" width="4" height="1" fill="#0000ff"/><rect x="0" y="4" width="4" height="1" fill="#0000ff"/><rect x="4" y="4" width="3" height="1" fill="#ffffff"/><rect x="7" y="4" width="4" height="1" fill="#0000ff"/><rect x="0" y="5" width="4" height="1" fill="#0000ff"/><rect x="4" y="5" width="3" height="1" fill="#ffffff"/><rect x="7" y="5" width="4" height="1" fill="#0000ff"/><rect x="0" y="6" width="4" height="1" fill="#0000ff"/><rect x="4" y="6" width="3" height="1" fill="#ffffff"/><rect x="7" y="6" width="4" height="1" fill="#0000ff"/><rect x="0" y="7" width="4" height="1" fill="#0000ff"/><rect x="4" y="7" width="3" height="1" fill="#ffffff"/><rect x="7" y="7" width="4" height="1" fill="#0000ff"/><rect x="0" y="8" width="1" height="1" fill="#0000ff"/><rect x="1" y="8" width="9" height="1" fill="#ffffff"/><rect x="10" y="8" width="1" height="1" fill="#0000ff"/><rect x="0" y="9" width="1" height="1" fill="#0000ff"/><rect x="1" y="9" width="9" height="1" fill="#ffffff"/><rect x="10" y="9" width="1" height="1" fill="#0000ff"/><rect x="0" y="10" width="11" height="1" fill="#0000ff"/></svg>
<div class="t" style="left:275px;top:637px;font-size:11px;">Jochem (Rotterdam)</div>
<div class="t" style="left:501px;top:638px;font-size:11px;">Nederland</div>
<div class="t" style="left:633px;top:638px;font-size:11px;">8.2</div>
<svg class="ic" style="left:731px;top:645px" width="11" height="7" shape-rendering="crispEdges"><rect x="3" y="0" width="1" height="1" fill="#ff7800"/><rect x="7" y="0" width="1" height="1" fill="#ff7800"/><rect x="2" y="1" width="2" height="1" fill="#ff7800"/><rect x="7" y="1" width="2" height="1" fill="#ff7800"/><rect x="1" y="2" width="3" height="1" fill="#ff7800"/><rect x="7" y="2" width="3" height="1" fill="#ff7800"/><rect x="0" y="3" width="11" height="1" fill="#ff7800"/><rect x="1" y="4" width="3" height="1" fill="#ff7800"/><rect x="7" y="4" width="3" height="1" fill="#ff7800"/><rect x="2" y="5" width="2" height="1" fill="#ff7800"/><rect x="7" y="5" width="2" height="1" fill="#ff7800"/><rect x="3" y="6" width="1" height="1" fill="#ff7800"/><rect x="7" y="6" width="1" height="1" fill="#ff7800"/></svg>
<div class="t" style="left:765px;top:638px;font-size:11px;">45</div>
<div class="t" style="left:886px;top:638px;font-size:11px;">163</div>
<svg class="ic" style="left:934px;top:643px" width="11" height="11" shape-rendering="crispEdges"><rect x="0" y="0" width="9" height="1" fill="#000000"/><rect x="9" y="1" width="1" height="1" fill="#000000"/><rect x="10" y="2" width="1" height="1" fill="#000000"/><rect x="10" y="3" width="1" height="1" fill="#000000"/><rect x="3" y="4" width="1" height="1" fill="#000000"/><rect x="10" y="4" width="1" height="1" fill="#000000"/><rect x="2" y="5" width="2" height="1" fill="#000000"/><rect x="10" y="5" width="1" height="1" fill="#000000"/><rect x="1" y="6" width="3" height="1" fill="#000000"/><rect x="9" y="6" width="1" height="1" fill="#000000"/><rect x="0" y="7" width="9" height="1" fill="#000000"/><rect x="1" y="8" width="3" height="1" fill="#000000"/><rect x="2" y="9" width="2" height="1" fill="#000000"/><rect x="3" y="10" width="1" height="1" fill="#000000"/></svg>
<div class="t" style="left:968px;top:638px;font-size:11px;">254.7</div>
<div class="r" style="left:3px;top:659px;width:32px;height:18px;background:#ffffff"></div>
<div class="r" style="left:37px;top:659px;width:53px;height:18px;background:#ffffff"></div>
<div class="r" style="left:92px;top:659px;width:160px;height:18px;background:#ffffff"></div>
<div class="r" style="left:254px;top:659px;width:244px;height:18px;background:#ffffff"></div>
<div class="r" style="left:500px;top:659px;width:130px;height:18px;background:#ffffff"></div>
<div class="r" style="left:632px;top:659px;width:96px;height:18px;background:#ffffff"></div>
<div class="r" style="left:730px;top:659px;width:32px;height:18px;background:#ffffff"></div>
<div class="r" style="left:764px;top:659px;width:85px;height:18px;background:#ffffff"></div>
<div class="r" style="left:851px;top:659px;width:32px;height:18px;background:#ffffff"></div>
<div class="r" style="left:885px;top:659px;width:46px;height:18px;background:#ffffff"></div>
<div class="r" style="left:933px;top:659px;width:32px;height:18px;background:#ffffff"></div>
<div class="r" style="left:967px;top:659px;width:53px;height:18px;background:#ffffff"></div>
<div class="r" style="left:1022px;top:659px;width:75px;height:18px;background:#ffffff"></div>
<div class="t" style="left:4px;top:658px;font-size:11px;">25</div>
<svg class="ic" style="left:38px;top:661px" width="7" height="11" shape-rendering="crispEdges"><rect x="3" y="0" width="1" height="1" fill="#00ff00"/><rect x="2" y="1" width="3" height="1" fill="#00ff00"/><rect x="1" y="2" width="5" height="1" fill="#00ff00"/><rect x="0" y="3" width="7" height="1" fill="#00ff00"/><rect x="3" y="4" width="1" height="1" fill="#00ff00"/><rect x="3" y="5" width="1" height="1" fill="#00ff00"/><rect x="3" y="6" width="1" height="1" fill="#00ff00"/><rect x="3" y="7" width="1" height="1" fill="#00ff00"/><rect x="3" y="8" width="1" height="1" fill="#00ff00"/><rect x="3" y="9" width="1" height="1" fill="#00ff00"/><rect x="3" y="10" width="1" height="1" fill="#00ff00"/></svg>
<div class="t" style="left:48px;top:658px;font-size:11px;">(+2)</div>
<div class="t" style="left:93px;top:658px;font-size:11px;">12</div>
<svg class="ic" style="left:255px;top:665px" width="11" height="11" shape-rendering="crispEdges"><rect x="0" y="0" width="11" height="1" fill="#0000ff"/><rect x="0" y="1" width="1" height="1" fill="#0000ff"/><rect x="1" y="1" width="9" height="1" fill="#ffffff"/><rect x="10" y="1" width="1" height="1" fill="#0000ff"/><rect x="0" y="2" width="1" height="1" fill="#0000ff"/><rect x="1" y="2" width="9" height="1" fill="#ffffff"/><rect x="10" y="2" width="1" height="1" fill="#0000ff"/><rect x="0" y="3" width="4" height="1" fill="#0000ff"/><rect x="4" y="3" width="3" height="1" fill="#ffffff"/><rect x="7" y="3" width="4" height="1" fill="#0000ff"/><rect x="0" y="4" width="4" height="1" fill="#0000ff"/><rect x="4" y="4" width="3" height="1" fill="#ffffff"/><rect x="7" y="4" width="4" height="1" fill="#0000ff"/><rect x="0" y="5" width="4" height="1" fill="#0000ff"/><rect x="4" y="5" width="3" height="1" fill="#ffffff"/><rect x="7" y="5" width="4" height="1" fill="#0000ff"/><rect x="0" y="6" width="4" height="1" fill="#0000ff"/><rect x="4" y="6" width="3" height="1" fill="#ffffff"/><rect x="7" y="6" width="4" height="1" fill="#0000ff"/><rect x="0" y="7" width="4" height="1" fill="#0000ff"/><rect x="4" y="7" width="3" height="1" fill="#ffffff"/><rect x="7" y="7" width="4" height="1" fill="#0000ff"/><rect x="0" y="8" width="1" height="1" fill="#0000ff"/><rect x="1" y="8" width="9" height="1" fill="#ffffff"/><rect x="10" y="8" width="1" height="1" fill="#0000ff"/><rect x="0" y="9" width="1" height="1" fill="#0000ff"/><rect x="1" y="9" width="9" height="1" fill="#ffffff"/><rect x="10" y="9" width="1" height="1" fill="#0000ff"/><rect x="0" y="10" width="11" height="1" fill="#0000ff"/></svg>
<div class="t" style="left:275px;top:656px;font-size:11px;">David Pennekamp (De Goorn)</div>
<div class="t" style="left:501px;top:658px;font-size:11px;">Nederland</div>
<div class="t" style="left:633px;top:658px;font-size:11px;">7.1</div>
<svg class="ic" style="left:731px;top:664px" width="11" height="7" shape-rendering="crispEdges"><rect x="3" y="0" width="1" height="1" fill="#ff7800"/><rect x="7" y="0" width="1" height="1" fill="#ff7800"/><rect x="2" y="1" width="2" height="1" fill="#ff7800"/><rect x="7" y="1" width="2" height="1" fill="#ff7800"/><rect x="1" y="2" width="3" height="1" fill="#ff7800"/><rect x="7" y="2" width="3" height="1" fill="#ff7800"/><rect x="0" y="3" width="11" height="1" fill="#ff7800"/><rect x="1" y="4" width="3" height="1" fill="#ff7800"/><rect x="7" y="4" width="3" height="1" fill="#ff7800"/><rect x="2" y="5" width="2" height="1" fill="#ff7800"/><rect x="7" y="5" width="2" height="1" fill="#ff7800"/><rect x="3" y="6" width="1" height="1" fill="#ff7800"/><rect x="7" y="6" width="1" height="1" fill="#ff7800"/></svg>
<div class="t" style="left:765px;top:658px;font-size:11px;">29</div>
<svg class="ic" style="left:852px;top:662px" width="11" height="11" shape-rendering="crispEdges"><rect x="0" y="0" width="9" height="1" fill="#000000"/><rect x="9" y="1" width="1" height="1" fill="#000000"/><rect x="10" y="2" width="1" height="1" fill="#000000"/><rect x="10" y="3" width="1" height="1" fill="#000000"/><rect x="3" y="4" width="1" height="1" fill="#000000"/><rect x="10" y="4" width="1" height="1" fill="#000000"/><rect x="2" y="5" width="2" height="1" fill="#000000"/><rect x="10" y="5" width="1" height="1" fill="#000000"/><rect x="1" y="6" width="3" height="1" fill="#000000"/><rect x="9" y="6" width="1" height="1" fill="#000000"/><rect x="0" y="7" width="9" height="1" fill="#000000"/><rect x="1" y="8" width="3" height="1" fill="#000000"/><rect x="2" y="9" width="2" height="1" fill="#000000"/><rect x="3" y="10" width="1" height="1" fill="#000000"/></svg>
<div class="t" style="left:886px;top:658px;font-size:11px;">211</div>
<div class="t" style="left:968px;top:658px;font-size:11px;">254.2</div>
<div class="r" style="left:3px;top:679px;width:32px;height:17px;background:#ffffff"></div>
<div class="r" style="left:37px;top:679px;width:53px;height:17px;background:#ffffff"></div>
<div class="r" style="left:92px;top:679px;width:160px;height:17px;background:#ffffff"></div>
<div class="r" style="left:254px;top:679px;width:244px;height:17px;background:#ffffff"></div>
<div class="r" style="left:500px;top:679px;width:130px;height:17px;background:#ffffff"></div>
<div class="r" style="left:632px;top:679px;width:96px;height:17px;background:#ffffff"></div>
<div class="r" style="left:730px;top:679px;width:32px;height:17px;background:#ffffff"></div>
<div class="r" style="left:764px;top:679px;width:85px;height:17px;background:#ffffff"></div>
<div class="r" style="left:851px;top:679px;width:32px;height:17px;background:#ffffff"></div>
<div class="r" style="left:885px;top:679px;width:46px;height:17px;background:#ffffff"></div>
<div class="r" style="left:933px;top:679px;width:32px;height:17px;background:#ffffff"></div>
<div class="r" style="left:967px;top:679px;width:53px;height:17px;background:#ffffff"></div>
<div class="r" style="left:1022px;top:679px;width:75px;height:17px;background:#ffffff"></div>
<div class="t bd" style="left:4px;top:677px;font-size:11px;font-weight:bold;color:#ff0000;">25</div>
<svg class="ic" style="left:38px;top:681px" width="7" height="11" shape-rendering="crispEdges"><rect x="3" y="0" width="1" height="1" fill="#ff0000"/><rect x="3" y="1" width="1" height="1" fill="#ff0000"/><rect x="3" y="2" width="1" height="1" fill="#ff0000"/><rect x="3" y="3" width="1" height="1" fill="#ff0000"/><rect x="3" y="4" width="1" height="1" fill="#ff0000"/><rect x="3" y="5" width="1" height="1" fill="#ff0000"/><rect x="3" y="6" width="1" height="1" fill="#ff0000"/><rect x="0" y="7" width="7" height="1" fill="#ff0000"/><rect x="1" y="8" width="5" height="1" fill="#ff0000"/><rect x="2" y="9" width="3" height="1" fill="#ff0000"/><rect x="3" y="10" width="1" height="1" fill="#ff0000"/></svg>
<div class="t bd" style="left:48px;top:678px;font-size:11px;font-weight:bold;color:#ff0000;">(-2)</div>
<div class="t bd" style="left:93px;top:677px;font-size:11px;font-weight:bold;color:#ff0000;">38</div>
<svg class="ic" style="left:255px;top:684px" width="11" height="11" shape-rendering="crispEdges"><rect x="0" y="0" width="11" height="1" fill="#0000ff"/><rect x="0" y="1" width="1" height="1" fill="#0000ff"/><rect x="1" y="1" width="9" height="1" fill="#ffffff"/><rect x="10" y="1" width="1" height="1" fill="#0000ff"/><rect x="0" y="2" width="1" height="1" fill="#0000ff"/><rect x="1" y="2" width="9" height="1" fill="#ffffff"/><rect x="10" y="2" width="1" height="1" fill="#0000ff"/><rect x="0" y="3" width="4" height="1" fill="#0000ff"/><rect x="4" y="3" width="3" height="1" fill="#ffffff"/><rect x="7" y="3" width="4" height="1" fill="#0000ff"/><rect x="0" y="4" width="4" height="1" fill="#0000ff"/><rect x="4" y="4" width="3" height="1" fill="#ffffff"/><rect x="7" y="4" width="4" height="1" fill="#0000ff"/><rect x="0" y="5" width="4" height="1" fill="#0000ff"/><rect x="4" y="5" width="3" height="1" fill="#ffffff"/><rect x="7" y="5" width="4" height="1" fill="#0000ff"/><rect x="0" y="6" width="4" height="1" fill="#0000ff"/><rect x="4" y="6" width="3" height="1" fill="#ffffff"/><rect x="7" y="6" width="4" height="1" fill="#0000ff"/><rect x="0" y="7" width="4" height="1" fill="#0000ff"/><rect x="4" y="7" width="3" height="1" fill="#ffffff"/><rect x="7" y="7" width="4" height="1" fill="#0000ff"/><rect x="0" y="8" width="1" height="1" fill="#0000ff"/><rect x="1" y="8" width="9" height="1" fill="#ffffff"/><rect x="10" y="8" width="1" height="1" fill="#0000ff"/><rect x="0" y="9" width="1" height="1" fill="#0000ff"/><rect x="1" y="9" width="9" height="1" fill="#ffffff"/><rect x="10" y="9" width="1" height="1" fill="#0000ff"/><rect x="0" y="10" width="11" height="1" fill="#0000ff"/></svg>
<div class="t bd" style="left:275px;top:676px;font-size:11px;font-weight:bold;color:#ff0000;">GEMIDDELD NL</div>
<div class="t bd" style="left:501px;top:677px;font-size:11px;font-weight:bold;color:#ff0000;">Nederland</div>
<div class="t bd" style="left:633px;top:677px;font-size:11px;font-weight:bold;color:#ff0000;">8.2</div>
<svg class="ic" style="left:731px;top:684px" width="11" height="7" shape-rendering="crispEdges"><rect x="3" y="0" width="1" height="1" fill="#ff7800"/><rect x="7" y="0" width="1" height="1" fill="#ff7800"/><rect x="2" y="1" width="2" height="1" fill="#ff7800"/><rect x="7" y="1" width="2" height="1" fill="#ff7800"/><rect x="1" y="2" width="3" height="1" fill="#ff7800"/><rect x="7" y="2" width="3" height="1" fill="#ff7800"/><rect x="0" y="3" width="11" height="1" fill="#ff7800"/><rect x="1" y="4" width="3" height="1" fill="#ff7800"/><rect x="7" y="4" width="3" height="1" fill="#ff7800"/><rect x="2" y="5" width="2" height="1" fill="#ff7800"/><rect x="7" y="5" width="2" height="1" fill="#ff7800"/><rect x="3" y="6" width="1" height="1" fill="#ff7800"/><rect x="7" y="6" width="1" height="1" fill="#ff7800"/></svg>
<div class="t bd" style="left:765px;top:677px;font-size:11px;font-weight:bold;color:#ff0000;">38</div>
<svg class="ic" style="left:852px;top:682px" width="11" height="11" shape-rendering="crispEdges"><rect x="0" y="0" width="9" height="1" fill="#000000"/><rect x="9" y="1" width="1" height="1" fill="#000000"/><rect x="10" y="2" width="1" height="1" fill="#000000"/><rect x="10" y="3" width="1" height="1" fill="#000000"/><rect x="3" y="4" width="1" height="1" fill="#000000"/><rect x="10" y="4" width="1" height="1" fill="#000000"/><rect x="2" y="5" width="2" height="1" fill="#000000"/><rect x="10" y="5" width="1" height="1" fill="#000000"/><rect x="1" y="6" width="3" height="1" fill="#000000"/><rect x="9" y="6" width="1" height="1" fill="#000000"/><rect x="0" y="7" width="9" height="1" fill="#000000"/><rect x="1" y="8" width="3" height="1" fill="#000000"/><rect x="2" y="9" width="2" height="1" fill="#000000"/><rect x="3" y="10" width="1" height="1" fill="#000000"/></svg>
<div class="t bd" style="left:886px;top:677px;font-size:11px;font-weight:bold;color:#ff0000;">171</div>
<svg class="ic" style="left:934px;top:682px" width="11" height="11" shape-rendering="crispEdges"><rect x="0" y="0" width="9" height="1" fill="#000000"/><rect x="9" y="1" width="1" height="1" fill="#000000"/><rect x="10" y="2" width="1" height="1" fill="#000000"/><rect x="10" y="3" width="1" height="1" fill="#000000"/><rect x="3" y="4" width="1" height="1" fill="#000000"/><rect x="10" y="4" width="1" height="1" fill="#000000"/><rect x="2" y="5" width="2" height="1" fill="#000000"/><rect x="10" y="5" width="1" height="1" fill="#000000"/><rect x="1" y="6" width="3" height="1" fill="#000000"/><rect x="9" y="6" width="1" height="1" fill="#000000"/><rect x="0" y="7" width="9" height="1" fill="#000000"/><rect x="1" y="8" width="3" height="1" fill="#000000"/><rect x="2" y="9" width="2" height="1" fill="#000000"/><rect x="3" y="10" width="1" height="1" fill="#000000"/></svg>
<div class="t bd" style="left:968px;top:677px;font-size:11px;font-weight:bold;color:#ff0000;">254.2</div>
<div class="r" style="left:3px;top:698px;width:32px;height:18px;background:#ffffff"></div>
<div class="r" style="left:37px;top:698px;width:53px;height:18px;background:#ffffff"></div>
<div class="r" style="left:92px;top:698px;width:160px;height:18px;background:#ffffff"></div>
<div class="r" style="left:254px;top:698px;width:244px;height:18px;background:#ffffff"></div>
<div class="r" style="left:500px;top:698px;width:130px;height:18px;background:#ffffff"></div>
<div class="r" style="left:632px;top:698px;width:96px;height:18px;background:#ffffff"></div>
<div class="r" style="left:730px;top:698px;width:32px;height:18px;background:#ffffff"></div>
<div class="r" style="left:764px;top:698px;width:85px;height:18px;background:#ffffff"></div>
<div class="r" style="left:851px;top:698px;width:32px;height:18px;background:#ffffff"></div>
<div class="r" style="left:885px;top:698px;width:46px;height:18px;background:#ffffff"></div>
<div class="r" style="left:933px;top:698px;width:32px;height:18px;background:#ffffff"></div>
<div class="r" style="left:967px;top:698px;width:53px;height:18px;background:#ffffff"></div>
<div class="r" style="left:1022px;top:698px;width:75px;height:18px;background:#ffffff"></div>
<div class="t" style="left:4px;top:697px;font-size:11px;">27</div>
<svg class="ic" style="left:38px;top:700px" width="7" height="11" shape-rendering="crispEdges"><rect x="3" y="0" width="1" height="1" fill="#ff0000"/><rect x="3" y="1" width="1" height="1" fill="#ff0000"/><rect x="3" y="2" width="1" height="1" fill="#ff0000"/><rect x="3" y="3" width="1" height="1" fill="#ff0000"/><rect x="3" y="4" width="1" height="1" fill="#ff0000"/><rect x="3" y="5" width="1" height="1" fill="#ff0000"/><rect x="3" y="6" width="1" height="1" fill="#ff0000"/><rect x="0" y="7" width="7" height="1" fill="#ff0000"/><rect x="1" y="8" width="5" height="1" fill="#ff0000"/><rect x="2" y="9" width="3" height="1" fill="#ff0000"/><rect x="3" y="10" width="1" height="1" fill="#ff0000"/></svg>
<div class="t" style="left:48px;top:697px;font-size:11px;">(-3)</div>
<div class="t" style="left:93px;top:697px;font-size:11px;">125</div>
<svg class="ic" style="left:255px;top:704px" width="11" height="11" shape-rendering="crispEdges"><rect x="0" y="0" width="11" height="1" fill="#0000ff"/><rect x="0" y="1" width="1" height="1" fill="#0000ff"/><rect x="1" y="1" width="9" height="1" fill="#ffffff"/><rect x="10" y="1" width="1" height="1" fill="#0000ff"/><rect x="0" y="2" width="1" height="1" fill="#0000ff"/><rect x="1" y="2" width="9" height="1" fill="#ffffff"/><rect x="10" y="2" width="1" height="1" fill="#0000ff"/><rect x="0" y="3" width="4" height="1" fill="#0000ff"/><rect x="4" y="3" width="3" height="1" fill="#ffffff"/><rect x="7" y="3" width="4" height="1" fill="#0000ff"/><rect x="0" y="4" width="4" height="1" fill="#0000ff"/><rect x="4" y="4" width="3" height="1" fill="#ffffff"/><rect x="7" y="4" width="4" height="1" fill="#0000ff"/><rect x="0" y="5" width="4" height="1" fill="#0000ff"/><rect x="4" y="5" width="3" height="1" fill="#ffffff"/><rect x="7" y="5" width="4" height="1" fill="#0000ff"/><rect x="0" y="6" width="4" height="1" fill="#0000ff"/><rect x="4" y="6" width="3" height="1" fill="#ffffff"/><rect x="7" y="6" width="4" height="1" fill="#0000ff"/><rect x="0" y="7" width="4" height="1" fill="#0000ff"/><rect x="4" y="7" width="3" height="1" fill="#ffffff"/><rect x="7" y="7" width="4" height="1" fill="#0000ff"/><rect x="0" y="8" width="1" height="1" fill="#0000ff"/><rect x="1" y="8" width="9" height="1" fill="#ffffff"/><rect x="10" y="8" width="1" height="1" fill="#0000ff"/><rect x="0" y="9" width="1" height="1" fill="#0000ff"/><rect x="1" y="9" width="9" height="1" fill="#ffffff"/><rect x="10" y="9" width="1" height="1" fill="#0000ff"/><rect x="0" y="10" width="11" height="1" fill="#0000ff"/></svg>
<div class="t" style="left:275px;top:695px;font-size:11px;">Jelmer (Beek Montferland)</div>
<div class="t" style="left:501px;top:697px;font-size:11px;">Nederland</div>
<div class="t" style="left:633px;top:697px;font-size:11px;">8.2</div>
<svg class="ic" style="left:731px;top:703px" width="11" height="7" shape-rendering="crispEdges"><rect x="3" y="0" width="1" height="1" fill="#ff7800"/><rect x="7" y="0" width="1" height="1" fill="#ff7800"/><rect x="2" y="1" width="2" height="1" fill="#ff7800"/><rect x="7" y="1" width="2" height="1" fill="#ff7800"/><rect x="1" y="2" width="3" height="1" fill="#ff7800"/><rect x="7" y="2" width="3" height="1" fill="#ff7800"/><rect x="0" y="3" width="11" height="1" fill="#ff7800"/><rect x="1" y="4" width="3" height="1" fill="#ff7800"/><rect x="7" y="4" width="3" height="1" fill="#ff7800"/><rect x="2" y="5" width="2" height="1" fill="#ff7800"/><rect x="7" y="5" width="2" height="1" fill="#ff7800"/><rect x="3" y="6" width="1" height="1" fill="#ff7800"/><rect x="7" y="6" width="1" height="1" fill="#ff7800"/></svg>
<div class="t" style="left:765px;top:697px;font-size:11px;">22</div>
<svg class="ic" style="left:852px;top:701px" width="11" height="11" shape-rendering="crispEdges"><rect x="0" y="0" width="9" height="1" fill="#000000"/><rect x="9" y="1" width="1" height="1" fill="#000000"/><rect x="10" y="2" width="1" height="1" fill="#000000"/><rect x="10" y="3" width="1" height="1" fill="#000000"/><rect x="3" y="4" width="1" height="1" fill="#000000"/><rect x="10" y="4" width="1" height="1" fill="#000000"/><rect x="2" y="5" width="2" height="1" fill="#000000"/><rect x="10" y="5" width="1" height="1" fill="#000000"/><rect x="1" y="6" width="3" height="1" fill="#000000"/><rect x="9" y="6" width="1" height="1" fill="#000000"/><rect x="0" y="7" width="9" height="1" fill="#000000"/><rect x="1" y="8" width="3" height="1" fill="#000000"/><rect x="2" y="9" width="2" height="1" fill="#000000"/><rect x="3" y="10" width="1" height="1" fill="#000000"/></svg>
<div class="t" style="left:886px;top:697px;font-size:11px;">190</div>
<svg class="ic" style="left:934px;top:701px" width="11" height="11" shape-rendering="crispEdges"><rect x="0" y="0" width="9" height="1" fill="#000000"/><rect x="9" y="1" width="1" height="1" fill="#000000"/><rect x="10" y="2" width="1" height="1" fill="#000000"/><rect x="10" y="3" width="1" height="1" fill="#000000"/><rect x="3" y="4" width="1" height="1" fill="#000000"/><rect x="10" y="4" width="1" height="1" fill="#000000"/><rect x="2" y="5" width="2" height="1" fill="#000000"/><rect x="10" y="5" width="1" height="1" fill="#000000"/><rect x="1" y="6" width="3" height="1" fill="#000000"/><rect x="9" y="6" width="1" height="1" fill="#000000"/><rect x="0" y="7" width="9" height="1" fill="#000000"/><rect x="1" y="8" width="3" height="1" fill="#000000"/><rect x="2" y="9" width="2" height="1" fill="#000000"/><rect x="3" y="10" width="1" height="1" fill="#000000"/></svg>
<div class="t" style="left:968px;top:697px;font-size:11px;">253.6</div>
<div class="r" style="left:3px;top:718px;width:32px;height:17px;background:#ffffff"></div>
<div class="r" style="left:37px;top:718px;width:53px;height:17px;background:#ffffff"></div>
<div class="r" style="left:92px;top:718px;width:160px;height:17px;background:#ffffff"></div>
<div class="r" style="left:254px;top:718px;width:244px;height:17px;background:#ffffff"></div>
<div class="r" style="left:500px;top:718px;width:130px;height:17px;background:#ffffff"></div>
<div class="r" style="left:632px;top:718px;width:96px;height:17px;background:#ffffff"></div>
<div class="r" style="left:730px;top:718px;width:32px;height:17px;background:#ffffff"></div>
<div class="r" style="left:764px;top:718px;width:85px;height:17px;background:#ffffff"></div>
<div class="r" style="left:851px;top:718px;width:32px;height:17px;background:#ffffff"></div>
<div class="r" style="left:885px;top:718px;width:46px;height:17px;background:#ffffff"></div>
<div class="r" style="left:933px;top:718px;width:32px;height:17px;background:#ffffff"></div>
<div class="r" style="left:967px;top:718px;width:53px;height:17px;background:#ffffff"></div>
<div class="r" style="left:1022px;top:718px;width:75px;height:17px;background:#ffffff"></div>
<div class="t" style="left:4px;top:716px;font-size:11px;">28</div>
<svg class="ic" style="left:38px;top:720px" width="7" height="11" shape-rendering="crispEdges"><rect x="3" y="0" width="1" height="1" fill="#ff0000"/><rect x="3" y="1" width="1" height="1" fill="#ff0000"/><rect x="3" y="2" width="1" height="1" fill="#ff0000"/><rect x="3" y="3" width="1" height="1" fill="#ff0000"/><rect x="3" y="4" width="1" height="1" fill="#ff0000"/><rect x="3" y="5" width="1" height="1" fill="#ff0000"/><rect x="3" y="6" width="1" height="1" fill="#ff0000"/><rect x="0" y="7" width="7" height="1" fill="#ff0000"/><rect x="1" y="8" width="5" height="1" fill="#ff0000"/><rect x="2" y="9" width="3" height="1" fill="#ff0000"/><rect x="3" y="10" width="1" height="1" fill="#ff0000"/></svg>
<div class="t" style="left:48px;top:717px;font-size:11px;">(-3)</div>
<div class="t" style="left:93px;top:716px;font-size:11px;">50</div>
<svg class="ic" style="left:255px;top:723px" width="11" height="11" shape-rendering="crispEdges"><rect x="0" y="0" width="11" height="1" fill="#0000ff"/><rect x="0" y="1" width="1" height="1" fill="#0000ff"/><rect x="1" y="1" width="9" height="1" fill="#ffffff"/><rect x="10" y="1" width="1" height="1" fill="#0000ff"/><rect x="0" y="2" width="1" height="1" fill="#0000ff"/><rect x="1" y="2" width="9" height="1" fill="#ffffff"/><rect x="10" y="2" width="1" height="1" fill="#0000ff"/><rect x="0" y="3" width="4" height="1" fill="#0000ff"/><rect x="4" y="3" width="3" height="1" fill="#ffffff"/><rect x="7" y="3" width="4" height="1" fill="#0000ff"/><rect x="0" y="4" width="4" height="1" fill="#0000ff"/><rect x="4" y="4" width="3" height="1" fill="#ffffff"/><rect x="7" y="4" width="4" height="1" fill="#0000ff"/><rect x="0" y="5" width="4" height="1" fill="#0000ff"/><rect x="4" y="5" width="3" height="1" fill="#ffffff"/><rect x="7" y="5" width="4" height="1" fill="#0000ff"/><rect x="0" y="6" width="4" height="1" fill="#0000ff"/><rect x="4" y="6" width="3" height="1" fill="#ffffff"/><rect x="7" y="6" width="4" height="1" fill="#0000ff"/><rect x="0" y="7" width="4" height="1" fill="#0000ff"/><rect x="4" y="7" width="3" height="1" fill="#ffffff"/><rect x="7" y="7" width="4" height="1" fill="#0000ff"/><rect x="0" y="8" width="1" height="1" fill="#0000ff"/><rect x="1" y="8" width="9" height="1" fill="#ffffff"/><rect x="10" y="8" width="1" height="1" fill="#0000ff"/><rect x="0" y="9" width="1" height="1" fill="#0000ff"/><rect x="1" y="9" width="9" height="1" fill="#ffffff"/><rect x="10" y="9" width="1" height="1" fill="#0000ff"/><rect x="0" y="10" width="11" height="1" fill="#0000ff"/></svg>
<div class="t" style="left:275px;top:715px;font-size:11px;">Mark (Hoogkarspel)</div>
<div class="t" style="left:501px;top:716px;font-size:11px;">Nederland</div>
<div class="t" style="left:633px;top:716px;font-size:11px;">8.0</div>
<svg class="ic" style="left:731px;top:723px" width="11" height="7" shape-rendering="crispEdges"><rect x="3" y="0" width="1" height="1" fill="#ff7800"/><rect x="7" y="0" width="1" height="1" fill="#ff7800"/><rect x="2" y="1" width="2" height="1" fill="#ff7800"/><rect x="7" y="1" width="2" height="1" fill="#ff7800"/><rect x="1" y="2" width="3" height="1" fill="#ff7800"/><rect x="7" y="2" width="3" height="1" fill="#ff7800"/><rect x="0" y="3" width="11" height="1" fill="#ff7800"/><rect x="1" y="4" width="3" height="1" fill="#ff7800"/><rect x="7" y="4" width="3" height="1" fill="#ff7800"/><rect x="2" y="5" width="2" height="1" fill="#ff7800"/><rect x="7" y="5" width="2" height="1" fill="#ff7800"/><rect x="3" y="6" width="1" height="1" fill="#ff7800"/><rect x="7" y="6" width="1" height="1" fill="#ff7800"/></svg>
<div class="t" style="left:765px;top:716px;font-size:11px;">30</div>
<svg class="ic" style="left:852px;top:721px" width="11" height="11" shape-rendering="crispEdges"><rect x="0" y="0" width="9" height="1" fill="#000000"/><rect x="9" y="1" width="1" height="1" fill="#000000"/><rect x="10" y="2" width="1" height="1" fill="#000000"/><rect x="10" y="3" width="1" height="1" fill="#000000"/><rect x="3" y="4" width="1" height="1" fill="#000000"/><rect x="10" y="4" width="1" height="1" fill="#000000"/><rect x="2" y="5" width="2" height="1" fill="#000000"/><rect x="10" y="5" width="1" height="1" fill="#000000"/><rect x="1" y="6" width="3" height="1" fill="#000000"/><rect x="9" y="6" width="1" height="1" fill="#000000"/><rect x="0" y="7" width="9" height="1" fill="#000000"/><rect x="1" y="8" width="3" height="1" fill="#000000"/><rect x="2" y="9" width="2" height="1" fill="#000000"/><rect x="3" y="10" width="1" height="1" fill="#000000"/></svg>
<div class="t" style="left:886px;top:716px;font-size:11px;">180</div>
<svg class="ic" style="left:934px;top:721px" width="11" height="11" shape-rendering="crispEdges"><rect x="0" y="0" width="9" height="1" fill="#000000"/><rect x="9" y="1" width="1" height="1" fill="#000000"/><rect x="10" y="2" width="1" height="1" fill="#000000"/><rect x="10" y="3" width="1" height="1" fill="#000000"/><rect x="3" y="4" width="1" height="1" fill="#000000"/><rect x="10" y="4" width="1" height="1" fill="#000000"/><rect x="2" y="5" width="2" height="1" fill="#000000"/><rect x="10" y="5" width="1" height="1" fill="#000000"/><rect x="1" y="6" width="3" height="1" fill="#000000"/><rect x="9" y="6" width="1" height="1" fill="#000000"/><rect x="0" y="7" width="9" height="1" fill="#000000"/><rect x="1" y="8" width="3" height="1" fill="#000000"/><rect x="2" y="9" width="2" height="1" fill="#000000"/><rect x="3" y="10" width="1" height="1" fill="#000000"/></svg>
<div class="t" style="left:968px;top:716px;font-size:11px;">253.5</div>
<div class="r" style="left:3px;top:737px;width:32px;height:18px;background:#ffffff"></div>
<div class="r" style="left:37px;top:737px;width:53px;height:18px;background:#ffffff"></div>
<div class="r" style="left:92px;top:737px;width:160px;height:18px;background:#ffffff"></div>
<div class="r" style="left:254px;top:737px;width:244px;height:18px;background:#ffffff"></div>
<div class="r" style="left:500px;top:737px;width:130px;height:18px;background:#ffffff"></div>
<div class="r" style="left:632px;top:737px;width:96px;height:18px;background:#ffffff"></div>
<div class="r" style="left:730px;top:737px;width:32px;height:18px;background:#ffffff"></div>
<div class="r" style="left:764px;top:737px;width:85px;height:18px;background:#ffffff"></div>
<div class="r" style="left:851px;top:737px;width:32px;height:18px;background:#ffffff"></div>
<div class="r" style="left:885px;top:737px;width:46px;height:18px;background:#ffffff"></div>
<div class="r" style="left:933px;top:737px;width:32px;height:18px;background:#ffffff"></div>
<div class="r" style="left:967px;top:737px;width:53px;height:18px;background:#ffffff"></div>
<div class="r" style="left:1022px;top:737px;width:75px;height:18px;background:#ffffff"></div>
<div class="t" style="left:4px;top:736px;font-size:11px;">29</div>
<div class="t" style="left:93px;top:736px;font-size:11px;">59</div>
<svg class="ic" style="left:255px;top:743px" width="11" height="11" shape-rendering="crispEdges"><rect x="0" y="0" width="11" height="1" fill="#0000ff"/><rect x="0" y="1" width="1" height="1" fill="#0000ff"/><rect x="1" y="1" width="9" height="1" fill="#ffffff"/><rect x="10" y="1" width="1" height="1" fill="#0000ff"/><rect x="0" y="2" width="1" height="1" fill="#0000ff"/><rect x="1" y="2" width="9" height="1" fill="#ffffff"/><rect x="10" y="2" width="1" height="1" fill="#0000ff"/><rect x="0" y="3" width="4" height="1" fill="#0000ff"/><rect x="4" y="3" width="3" height="1" fill="#ffffff"/><rect x="7" y="3" width="4" height="1" fill="#0000ff"/><rect x="0" y="4" width="4" height="1" fill="#0000ff"/><rect x="4" y="4" width="3" height="1" fill="#ffffff"/><rect x="7" y="4" width="4" height="1" fill="#0000ff"/><rect x="0" y="5" width="4" height="1" fill="#0000ff"/><rect x="4" y="5" width="3" height="1" fill="#ffffff"/><rect x="7" y="5" width="4" height="1" fill="#0000ff"/><rect x="0" y="6" width="4" height="1" fill="#0000ff"/><rect x="4" y="6" width="3" height="1" fill="#ffffff"/><rect x="7" y="6" width="4" height="1" fill="#0000ff"/><rect x="0" y="7" width="4" height="1" fill="#0000ff"/><rect x="4" y="7" width="3" height="1" fill="#ffffff"/><rect x="7" y="7" width="4" height="1" fill="#0000ff"/><rect x="0" y="8" width="1" height="1" fill="#0000ff"/><rect x="1" y="8" width="9" height="1" fill="#ffffff"/><rect x="10" y="8" width="1" height="1" fill="#0000ff"/><rect x="0" y="9" width="1" height="1" fill="#0000ff"/><rect x="1" y="9" width="9" height="1" fill="#ffffff"/><rect x="10" y="9" width="1" height="1" fill="#0000ff"/><rect x="0" y="10" width="11" height="1" fill="#0000ff"/></svg>
<div class="t" style="left:275px;top:734px;font-size:11px;">Alphons (Ubbergen)</div>
<div class="t" style="left:501px;top:736px;font-size:11px;">Nederland</div>
<div class="t" style="left:633px;top:736px;font-size:11px;">8.2</div>
<svg class="ic" style="left:731px;top:742px" width="11" height="7" shape-rendering="crispEdges"><rect x="3" y="0" width="1" height="1" fill="#ff7800"/><rect x="7" y="0" width="1" height="1" fill="#ff7800"/><rect x="2" y="1" width="2" height="1" fill="#ff7800"/><rect x="7" y="1" width="2" height="1" fill="#ff7800"/><rect x="1" y="2" width="3" height="1" fill="#ff7800"/><rect x="7" y="2" width="3" height="1" fill="#ff7800"/><rect x="0" y="3" width="11" height="1" fill="#ff7800"/><rect x="1" y="4" width="3" height="1" fill="#ff7800"/><rect x="7" y="4" width="3" height="1" fill="#ff7800"/><rect x="2" y="5" width="2" height="1" fill="#ff7800"/><rect x="7" y="5" width="2" height="1" fill="#ff7800"/><rect x="3" y="6" width="1" height="1" fill="#ff7800"/><rect x="7" y="6" width="1" height="1" fill="#ff7800"/></svg>
<div class="t" style="left:765px;top:736px;font-size:11px;">32</div>
<svg class="ic" style="left:852px;top:740px" width="11" height="11" shape-rendering="crispEdges"><rect x="0" y="0" width="9" height="1" fill="#000000"/><rect x="9" y="1" width="1" height="1" fill="#000000"/><rect x="10" y="2" width="1" height="1" fill="#000000"/><rect x="10" y="3" width="1" height="1" fill="#000000"/><rect x="3" y="4" width="1" height="1" fill="#000000"/><rect x="10" y="4" width="1" height="1" fill="#000000"/><rect x="2" y="5" width="2" height="1" fill="#000000"/><rect x="10" y="5" width="1" height="1" fill="#000000"/><rect x="1" y="6" width="3" height="1" fill="#000000"/><rect x="9" y="6" width="1" height="1" fill="#000000"/><rect x="0" y="7" width="9" height="1" fill="#000000"/><rect x="1" y="8" width="3" height="1" fill="#000000"/><rect x="2" y="9" width="2" height="1" fill="#000000"/><rect x="3" y="10" width="1" height="1" fill="#000000"/></svg>
<div class="t" style="left:886px;top:736px;font-size:11px;">175</div>
<svg class="ic" style="left:934px;top:740px" width="11" height="11" shape-rendering="crispEdges"><rect x="0" y="0" width="9" height="1" fill="#000000"/><rect x="9" y="1" width="1" height="1" fill="#000000"/><rect x="10" y="2" width="1" height="1" fill="#000000"/><rect x="10" y="3" width="1" height="1" fill="#000000"/><rect x="3" y="4" width="1" height="1" fill="#000000"/><rect x="10" y="4" width="1" height="1" fill="#000000"/><rect x="2" y="5" width="2" height="1" fill="#000000"/><rect x="10" y="5" width="1" height="1" fill="#000000"/><rect x="1" y="6" width="3" height="1" fill="#000000"/><rect x="9" y="6" width="1" height="1" fill="#000000"/><rect x="0" y="7" width="9" height="1" fill="#000000"/><rect x="1" y="8" width="3" height="1" fill="#000000"/><rect x="2" y="9" width="2" height="1" fill="#000000"/><rect x="3" y="10" width="1" height="1" fill="#000000"/></svg>
<div class="t" style="left:968px;top:736px;font-size:11px;">251.4</div>
<div class="r" style="left:3px;top:757px;width:32px;height:17px;background:#ffffff"></div>
<div class="r" style="left:37px;top:757px;width:53px;height:17px;background:#ffffff"></div>
<div class="r" style="left:92px;top:757px;width:160px;height:17px;background:#ffffff"></div>
<div class="r" style="left:254px;top:757px;width:244px;height:17px;background:#ffffff"></div>
<div class="r" style="left:500px;top:757px;width:130px;height:17px;background:#ffffff"></div>
<div class="r" style="left:632px;top:757px;width:96px;height:17px;background:#ffffff"></div>
<div class="r" style="left:730px;top:757px;width:32px;height:17px;background:#ffffff"></div>
<div class="r" style="left:764px;top:757px;width:85px;height:17px;background:#ffffff"></div>
<div class="r" style="left:851px;top:757px;width:32px;height:17px;background:#ffffff"></div>
<div class="r" style="left:885px;top:757px;width:46px;height:17px;background:#ffffff"></div>
<div class="r" style="left:933px;top:757px;width:32px;height:17px;background:#ffffff"></div>
<div class="r" style="left:967px;top:757px;width:53px;height:17px;background:#ffffff"></div>
<div class="r" style="left:1022px;top:757px;width:75px;height:17px;background:#ffffff"></div>
<div class="t" style="left:4px;top:755px;font-size:11px;">30</div>
<svg class="ic" style="left:38px;top:759px" width="7" height="11" shape-rendering="crispEdges"><rect x="3" y="0" width="1" height="1" fill="#00ff00"/><rect x="2" y="1" width="3" height="1" fill="#00ff00"/><rect x="1" y="2" width="5" height="1" fill="#00ff00"/><rect x="0" y="3" width="7" height="1" fill="#00ff00"/><rect x="3" y="4" width="1" height="1" fill="#00ff00"/><rect x="3" y="5" width="1" height="1" fill="#00ff00"/><rect x="3" y="6" width="1" height="1" fill="#00ff00"/><rect x="3" y="7" width="1" height="1" fill="#00ff00"/><rect x="3" y="8" width="1" height="1" fill="#00ff00"/><rect x="3" y="9" width="1" height="1" fill="#00ff00"/><rect x="3" y="10" width="1" height="1" fill="#00ff00"/></svg>
<div class="t" style="left:48px;top:756px;font-size:11px;">(+12)</div>
<div class="t" style="left:93px;top:755px;font-size:11px;">127</div>
<svg class="ic" style="left:255px;top:762px" width="11" height="11" shape-rendering="crispEdges"><rect x="0" y="0" width="11" height="1" fill="#0000ff"/><rect x="0" y="1" width="1" height="1" fill="#0000ff"/><rect x="1" y="1" width="9" height="1" fill="#ffffff"/><rect x="10" y="1" width="1" height="1" fill="#0000ff"/><rect x="0" y="2" width="1" height="1" fill="#0000ff"/><rect x="1" y="2" width="9" height="1" fill="#ffffff"/><rect x="10" y="2" width="1" height="1" fill="#0000ff"/><rect x="0" y="3" width="4" height="1" fill="#0000ff"/><rect x="4" y="3" width="3" height="1" fill="#ffffff"/><rect x="7" y="3" width="4" height="1" fill="#0000ff"/><rect x="0" y="4" width="4" height="1" fill="#0000ff"/><rect x="4" y="4" width="3" height="1" fill="#ffffff"/><rect x="7" y="4" width="4" height="1" fill="#0000ff"/><rect x="0" y="5" width="4" height="1" fill="#0000ff"/><rect x="4" y="5" width="3" height="1" fill="#ffffff"/><rect x="7" y="5" width="4" height="1" fill="#0000ff"/><rect x="0" y="6" width="4" height="1" fill="#0000ff"/><rect x="4" y="6" width="3" height="1" fill="#ffffff"/><rect x="7" y="6" width="4" height="1" fill="#0000ff"/><rect x="0" y="7" width="4" height="1" fill="#0000ff"/><rect x="4" y="7" width="3" height="1" fill="#ffffff"/><rect x="7" y="7" width="4" height="1" fill="#0000ff"/><rect x="0" y="8" width="1" height="1" fill="#0000ff"/><rect x="1" y="8" width="9" height="1" fill="#ffffff"/><rect x="10" y="8" width="1" height="1" fill="#0000ff"/><rect x="0" y="9" width="1" height="1" fill="#0000ff"/><rect x="1" y="9" width="9" height="1" fill="#ffffff"/><rect x="10" y="9" width="1" height="1" fill="#0000ff"/><rect x="0" y="10" width="11" height="1" fill="#0000ff"/></svg>
<div class="t" style="left:275px;top:754px;font-size:11px;">Jm (Tervuren)</div>
<div class="t" style="left:501px;top:755px;font-size:11px;">Belgi&euml;</div>
<div class="t" style="left:633px;top:755px;font-size:11px;">7.9</div>
<svg class="ic" style="left:731px;top:762px" width="11" height="7" shape-rendering="crispEdges"><rect x="3" y="0" width="1" height="1" fill="#ff7800"/><rect x="7" y="0" width="1" height="1" fill="#ff7800"/><rect x="2" y="1" width="2" height="1" fill="#ff7800"/><rect x="7" y="1" width="2" height="1" fill="#ff7800"/><rect x="1" y="2" width="3" height="1" fill="#ff7800"/><rect x="7" y="2" width="3" height="1" fill="#ff7800"/><rect x="0" y="3" width="11" height="1" fill="#ff7800"/><rect x="1" y="4" width="3" height="1" fill="#ff7800"/><rect x="7" y="4" width="3" height="1" fill="#ff7800"/><rect x="2" y="5" width="2" height="1" fill="#ff7800"/><rect x="7" y="5" width="2" height="1" fill="#ff7800"/><rect x="3" y="6" width="1" height="1" fill="#ff7800"/><rect x="7" y="6" width="1" height="1" fill="#ff7800"/></svg>
<div class="t" style="left:765px;top:755px;font-size:11px;">51</div>
<div class="t" style="left:886px;top:755px;font-size:11px;">164</div>
<svg class="ic" style="left:934px;top:760px" width="11" height="11" shape-rendering="crispEdges"><rect x="0" y="0" width="9" height="1" fill="#000000"/><rect x="9" y="1" width="1" height="1" fill="#000000"/><rect x="10" y="2" width="1" height="1" fill="#000000"/><rect x="10" y="3" width="1" height="1" fill="#000000"/><rect x="3" y="4" width="1" height="1" fill="#000000"/><rect x="10" y="4" width="1" height="1" fill="#000000"/><rect x="2" y="5" width="2" height="1" fill="#000000"/><rect x="10" y="5" width="1" height="1" fill="#000000"/><rect x="1" y="6" width="3" height="1" fill="#000000"/><rect x="9" y="6" width="1" height="1" fill="#000000"/><rect x="0" y="7" width="9" height="1" fill="#000000"/><rect x="1" y="8" width="3" height="1" fill="#000000"/><rect x="2" y="9" width="2" height="1" fill="#000000"/><rect x="3" y="10" width="1" height="1" fill="#000000"/></svg>
<div class="t" style="left:968px;top:755px;font-size:11px;">250.9</div>
<div class="r" style="left:3px;top:776px;width:32px;height:19px;background:#ffffff"></div>
<div class="r" style="left:37px;top:776px;width:53px;height:19px;background:#ffffff"></div>
<div class="r" style="left:92px;top:776px;width:160px;height:19px;background:#ffffff"></div>
<div class="r" style="left:254px;top:776px;width:244px;height:19px;background:#ffffff"></div>
<div class="r" style="left:500px;top:776px;width:130px;height:19px;background:#ffffff"></div>
<div class="r" style="left:632px;top:776px;width:96px;height:19px;background:#ffffff"></div>
<div class="r" style="left:730px;top:776px;width:32px;height:19px;background:#ffffff"></div>
<div class="r" style="left:764px;top:776px;width:85px;height:19px;background:#ffffff"></div>
<div class="r" style="left:851px;top:776px;width:32px;height:19px;background:#ffffff"></div>
<div class="r" style="left:885px;top:776px;width:46px;height:19px;background:#ffffff"></div>
<div class="r" style="left:933px;top:776px;width:32px;height:19px;background:#ffffff"></div>
<div class="r" style="left:967px;top:776px;width:53px;height:19px;background:#ffffff"></div>
<div class="r" style="left:1022px;top:776px;width:75px;height:19px;background:#ffffff"></div>
<div class="t" style="left:4px;top:776px;font-size:11px;">31</div>
<svg class="ic" style="left:38px;top:779px" width="7" height="11" shape-rendering="crispEdges"><rect x="3" y="0" width="1" height="1" fill="#ff0000"/><rect x="3" y="1" width="1" height="1" fill="#ff0000"/><rect x="3" y="2" width="1" height="1" fill="#ff0000"/><rect x="3" y="3" width="1" height="1" fill="#ff0000"/><rect x="3" y="4" width="1" height="1" fill="#ff0000"/><rect x="3" y="5" width="1" height="1" fill="#ff0000"/><rect x="3" y="6" width="1" height="1" fill="#ff0000"/><rect x="0" y="7" width="7" height="1" fill="#ff0000"/><rect x="1" y="8" width="5" height="1" fill="#ff0000"/><rect x="2" y="9" width="3" height="1" fill="#ff0000"/><rect x="3" y="10" width="1" height="1" fill="#ff0000"/></svg>
<div class="t" style="left:48px;top:776px;font-size:11px;">(-1)</div>
<div class="t" style="left:93px;top:778px;font-size:11px;">9</div>
<svg class="ic" style="left:109px;top:777px" width="9" height="15" shape-rendering="crispEdges"><rect x="0" y="0" width="9" height="1" fill="#000000"/><rect x="1" y="1" width="1" height="1" fill="#000000"/><rect x="2" y="1" width="1" height="1" fill="#ffffff"/><rect x="3" y="1" width="3" height="1" fill="#1830ff"/><rect x="6" y="1" width="1" height="1" fill="#ffffff"/><rect x="7" y="1" width="1" height="1" fill="#000000"/><rect x="1" y="2" width="1" height="1" fill="#000000"/><rect x="2" y="2" width="1" height="1" fill="#ffffff"/><rect x="3" y="2" width="3" height="1" fill="#1830ff"/><rect x="6" y="2" width="1" height="1" fill="#ffffff"/><rect x="7" y="2" width="1" height="1" fill="#000000"/><rect x="1" y="3" width="1" height="1" fill="#000000"/><rect x="2" y="3" width="1" height="1" fill="#ffffff"/><rect x="3" y="3" width="3" height="1" fill="#1830ff"/><rect x="6" y="3" width="1" height="1" fill="#ffffff"/><rect x="7" y="3" width="1" height="1" fill="#000000"/><rect x="2" y="4" width="1" height="1" fill="#000000"/><rect x="3" y="4" width="3" height="1" fill="#1830ff"/><rect x="6" y="4" width="1" height="1" fill="#000000"/><rect x="3" y="5" width="3" height="1" fill="#000000"/><rect x="2" y="6" width="5" height="1" fill="#000000"/><rect x="1" y="7" width="1" height="1" fill="#000000"/><rect x="2" y="7" width="1" height="1" fill="#ffffff"/><rect x="3" y="7" width="4" height="1" fill="#f2c400"/><rect x="7" y="7" width="1" height="1" fill="#000000"/><rect x="0" y="8" width="1" height="1" fill="#000000"/><rect x="1" y="8" width="3" height="1" fill="#f2c400"/><rect x="4" y="8" width="1" height="1" fill="#000000"/><rect x="5" y="8" width="3" height="1" fill="#f2c400"/><rect x="8" y="8" width="1" height="1" fill="#000000"/><rect x="0" y="9" width="1" height="1" fill="#000000"/><rect x="1" y="9" width="2" height="1" fill="#f2c400"/><rect x="3" y="9" width="2" height="1" fill="#000000"/><rect x="5" y="9" width="3" height="1" fill="#f2c400"/><rect x="8" y="9" width="1" height="1" fill="#000000"/><rect x="0" y="10" width="1" height="1" fill="#000000"/><rect x="1" y="10" width="3" height="1" fill="#f2c400"/><rect x="4" y="10" width="1" height="1" fill="#000000"/><rect x="5" y="10" width="3" height="1" fill="#f2c400"/><rect x="8" y="10" width="1" height="1" fill="#000000"/><rect x="0" y="11" width="1" height="1" fill="#000000"/><rect x="1" y="11" width="3" height="1" fill="#f2c400"/><rect x="4" y="11" width="1" height="1" fill="#000000"/><rect x="5" y="11" width="3" height="1" fill="#f2c400"/><rect x="8" y="11" width="1" height="1" fill="#000000"/><rect x="0" y="12" width="1" height="1" fill="#000000"/><rect x="1" y="12" width="2" height="1" fill="#f2c400"/><rect x="3" y="12" width="3" height="1" fill="#000000"/><rect x="6" y="12" width="2" height="1" fill="#f2c400"/><rect x="8" y="12" width="1" height="1" fill="#000000"/><rect x="1" y="13" width="1" height="1" fill="#000000"/><rect x="2" y="13" width="5" height="1" fill="#f2c400"/><rect x="7" y="13" width="1" height="1" fill="#000000"/><rect x="2" y="14" width="5" height="1" fill="#000000"/></svg>
<svg class="ic" style="left:255px;top:782px" width="11" height="11" shape-rendering="crispEdges"><rect x="0" y="0" width="11" height="1" fill="#0000ff"/><rect x="0" y="1" width="1" height="1" fill="#0000ff"/><rect x="1" y="1" width="9" height="1" fill="#ffffff"/><rect x="10" y="1" width="1" height="1" fill="#0000ff"/><rect x="0" y="2" width="1" height="1" fill="#0000ff"/><rect x="1" y="2" width="9" height="1" fill="#ffffff"/><rect x="10" y="2" width="1" height="1" fill="#0000ff"/><rect x="0" y="3" width="4" height="1" fill="#0000ff"/><rect x="4" y="3" width="3" height="1" fill="#ffffff"/><rect x="7" y="3" width="4" height="1" fill="#0000ff"/><rect x="0" y="4" width="4" height="1" fill="#0000ff"/><rect x="4" y="4" width="3" height="1" fill="#ffffff"/><rect x="7" y="4" width="4" height="1" fill="#0000ff"/><rect x="0" y="5" width="4" height="1" fill="#0000ff"/><rect x="4" y="5" width="3" height="1" fill="#ffffff"/><rect x="7" y="5" width="4" height="1" fill="#0000ff"/><rect x="0" y="6" width="4" height="1" fill="#0000ff"/><rect x="4" y="6" width="3" height="1" fill="#ffffff"/><rect x="7" y="6" width="4" height="1" fill="#0000ff"/><rect x="0" y="7" width="4" height="1" fill="#0000ff"/><rect x="4" y="7" width="3" height="1" fill="#ffffff"/><rect x="7" y="7" width="4" height="1" fill="#0000ff"/><rect x="0" y="8" width="1" height="1" fill="#0000ff"/><rect x="1" y="8" width="9" height="1" fill="#ffffff"/><rect x="10" y="8" width="1" height="1" fill="#0000ff"/><rect x="0" y="9" width="1" height="1" fill="#0000ff"/><rect x="1" y="9" width="9" height="1" fill="#ffffff"/><rect x="10" y="9" width="1" height="1" fill="#0000ff"/><rect x="0" y="10" width="11" height="1" fill="#0000ff"/></svg>
<div class="t" style="left:275px;top:774px;font-size:11px;">Keith (Mechelen)</div>
<div class="t" style="left:501px;top:776px;font-size:11px;">Belgi&euml;</div>
<div class="t" style="left:633px;top:776px;font-size:11px;">8.7</div>
<svg class="ic" style="left:731px;top:782px" width="11" height="7" shape-rendering="crispEdges"><rect x="3" y="0" width="1" height="1" fill="#ff7800"/><rect x="7" y="0" width="1" height="1" fill="#ff7800"/><rect x="2" y="1" width="2" height="1" fill="#ff7800"/><rect x="7" y="1" width="2" height="1" fill="#ff7800"/><rect x="1" y="2" width="3" height="1" fill="#ff7800"/><rect x="7" y="2" width="3" height="1" fill="#ff7800"/><rect x="0" y="3" width="11" height="1" fill="#ff7800"/><rect x="1" y="4" width="3" height="1" fill="#ff7800"/><rect x="7" y="4" width="3" height="1" fill="#ff7800"/><rect x="2" y="5" width="2" height="1" fill="#ff7800"/><rect x="7" y="5" width="2" height="1" fill="#ff7800"/><rect x="3" y="6" width="1" height="1" fill="#ff7800"/><rect x="7" y="6" width="1" height="1" fill="#ff7800"/></svg>
<div class="t" style="left:765px;top:776px;font-size:11px;">37</div>
<svg class="ic" style="left:852px;top:780px" width="11" height="11" shape-rendering="crispEdges"><rect x="0" y="0" width="9" height="1" fill="#000000"/><rect x="9" y="1" width="1" height="1" fill="#000000"/><rect x="10" y="2" width="1" height="1" fill="#000000"/><rect x="10" y="3" width="1" height="1" fill="#000000"/><rect x="3" y="4" width="1" height="1" fill="#000000"/><rect x="10" y="4" width="1" height="1" fill="#000000"/><rect x="2" y="5" width="2" height="1" fill="#000000"/><rect x="10" y="5" width="1" height="1" fill="#000000"/><rect x="1" y="6" width="3" height="1" fill="#000000"/><rect x="9" y="6" width="1" height="1" fill="#000000"/><rect x="0" y="7" width="9" height="1" fill="#000000"/><rect x="1" y="8" width="3" height="1" fill="#000000"/><rect x="2" y="9" width="2" height="1" fill="#000000"/><rect x="3" y="10" width="1" height="1" fill="#000000"/></svg>
<div class="t" style="left:886px;top:776px;font-size:11px;">184</div>
<svg class="ic" style="left:934px;top:780px" width="11" height="11" shape-rendering="crispEdges"><rect x="0" y="0" width="9" height="1" fill="#000000"/><rect x="9" y="1" width="1" height="1" fill="#000000"/><rect x="10" y="2" width="1" height="1" fill="#000000"/><rect x="10" y="3" width="1" height="1" fill="#000000"/><rect x="3" y="4" width="1" height="1" fill="#000000"/><rect x="10" y="4" width="1" height="1" fill="#000000"/><rect x="2" y="5" width="2" height="1" fill="#000000"/><rect x="10" y="5" width="1" height="1" fill="#000000"/><rect x="1" y="6" width="3" height="1" fill="#000000"/><rect x="9" y="6" width="1" height="1" fill="#000000"/><rect x="0" y="7" width="9" height="1" fill="#000000"/><rect x="1" y="8" width="3" height="1" fill="#000000"/><rect x="2" y="9" width="2" height="1" fill="#000000"/><rect x="3" y="10" width="1" height="1" fill="#000000"/></svg>
<div class="t" style="left:968px;top:776px;font-size:11px;">250.7</div>
<div class="r" style="left:3px;top:797px;width:32px;height:18px;background:#ffffff"></div>
<div class="r" style="left:37px;top:797px;width:53px;height:18px;background:#ffffff"></div>
<div class="r" style="left:92px;top:797px;width:160px;height:18px;background:#ffffff"></div>
<div class="r" style="left:254px;top:797px;width:244px;height:18px;background:#ffffff"></div>
<div class="r" style="left:500px;top:797px;width:130px;height:18px;background:#ffffff"></div>
<div class="r" style="left:632px;top:797px;width:96px;height:18px;background:#ffffff"></div>
<div class="r" style="left:730px;top:797px;width:32px;height:18px;background:#ffffff"></div>
<div class="r" style="left:764px;top:797px;width:85px;height:18px;background:#ffffff"></div>
<div class="r" style="left:851px;top:797px;width:32px;height:18px;background:#ffffff"></div>
<div class="r" style="left:885px;top:797px;width:46px;height:18px;background:#ffffff"></div>
<div class="r" style="left:933px;top:797px;width:32px;height:18px;background:#ffffff"></div>
<div class="r" style="left:967px;top:797px;width:53px;height:18px;background:#ffffff"></div>
<div class="r" style="left:1022px;top:797px;width:75px;height:18px;background:#ffffff"></div>
<div class="t" style="left:4px;top:796px;font-size:11px;">32</div>
<svg class="ic" style="left:38px;top:799px" width="7" height="11" shape-rendering="crispEdges"><rect x="3" y="0" width="1" height="1" fill="#ff0000"/><rect x="3" y="1" width="1" height="1" fill="#ff0000"/><rect x="3" y="2" width="1" height="1" fill="#ff0000"/><rect x="3" y="3" width="1" height="1" fill="#ff0000"/><rect x="3" y="4" width="1" height="1" fill="#ff0000"/><rect x="3" y="5" width="1" height="1" fill="#ff0000"/><rect x="3" y="6" width="1" height="1" fill="#ff0000"/><rect x="0" y="7" width="7" height="1" fill="#ff0000"/><rect x="1" y="8" width="5" height="1" fill="#ff0000"/><rect x="2" y="9" width="3" height="1" fill="#ff0000"/><rect x="3" y="10" width="1" height="1" fill="#ff0000"/></svg>
<div class="t" style="left:48px;top:796px;font-size:11px;">(-1)</div>
<div class="t" style="left:93px;top:796px;font-size:11px;">92</div>
<svg class="ic" style="left:255px;top:803px" width="11" height="11" shape-rendering="crispEdges"><rect x="0" y="0" width="11" height="1" fill="#0000ff"/><rect x="0" y="1" width="1" height="1" fill="#0000ff"/><rect x="1" y="1" width="9" height="1" fill="#ffffff"/><rect x="10" y="1" width="1" height="1" fill="#0000ff"/><rect x="0" y="2" width="1" height="1" fill="#0000ff"/><rect x="1" y="2" width="9" height="1" fill="#ffffff"/><rect x="10" y="2" width="1" height="1" fill="#0000ff"/><rect x="0" y="3" width="4" height="1" fill="#0000ff"/><rect x="4" y="3" width="3" height="1" fill="#ffffff"/><rect x="7" y="3" width="4" height="1" fill="#0000ff"/><rect x="0" y="4" width="4" height="1" fill="#0000ff"/><rect x="4" y="4" width="3" height="1" fill="#ffffff"/><rect x="7" y="4" width="4" height="1" fill="#0000ff"/><rect x="0" y="5" width="4" height="1" fill="#0000ff"/><rect x="4" y="5" width="3" height="1" fill="#ffffff"/><rect x="7" y="5" width="4" height="1" fill="#0000ff"/><rect x="0" y="6" width="4" height="1" fill="#0000ff"/><rect x="4" y="6" width="3" height="1" fill="#ffffff"/><rect x="7" y="6" width="4" height="1" fill="#0000ff"/><rect x="0" y="7" width="4" height="1" fill="#0000ff"/><rect x="4" y="7" width="3" height="1" fill="#ffffff"/><rect x="7" y="7" width="4" height="1" fill="#0000ff"/><rect x="0" y="8" width="1" height="1" fill="#0000ff"/><rect x="1" y="8" width="9" height="1" fill="#ffffff"/><rect x="10" y="8" width="1" height="1" fill="#0000ff"/><rect x="0" y="9" width="1" height="1" fill="#0000ff"/><rect x="1" y="9" width="9" height="1" fill="#ffffff"/><rect x="10" y="9" width="1" height="1" fill="#0000ff"/><rect x="0" y="10" width="11" height="1" fill="#0000ff"/></svg>
<div class="t" style="left:275px;top:794px;font-size:11px;">Fabian (Roeselare)</div>
<div class="t" style="left:501px;top:796px;font-size:11px;">Belgi&euml;</div>
<div class="t" style="left:633px;top:796px;font-size:11px;">8.2</div>
<svg class="ic" style="left:731px;top:802px" width="11" height="7" shape-rendering="crispEdges"><rect x="3" y="0" width="1" height="1" fill="#ff7800"/><rect x="7" y="0" width="1" height="1" fill="#ff7800"/><rect x="2" y="1" width="2" height="1" fill="#ff7800"/><rect x="7" y="1" width="2" height="1" fill="#ff7800"/><rect x="1" y="2" width="3" height="1" fill="#ff7800"/><rect x="7" y="2" width="3" height="1" fill="#ff7800"/><rect x="0" y="3" width="11" height="1" fill="#ff7800"/><rect x="1" y="4" width="3" height="1" fill="#ff7800"/><rect x="7" y="4" width="3" height="1" fill="#ff7800"/><rect x="2" y="5" width="2" height="1" fill="#ff7800"/><rect x="7" y="5" width="2" height="1" fill="#ff7800"/><rect x="3" y="6" width="1" height="1" fill="#ff7800"/><rect x="7" y="6" width="1" height="1" fill="#ff7800"/></svg>
<div class="t" style="left:765px;top:796px;font-size:11px;">32</div>
<svg class="ic" style="left:852px;top:800px" width="11" height="11" shape-rendering="crispEdges"><rect x="0" y="0" width="9" height="1" fill="#000000"/><rect x="9" y="1" width="1" height="1" fill="#000000"/><rect x="10" y="2" width="1" height="1" fill="#000000"/><rect x="10" y="3" width="1" height="1" fill="#000000"/><rect x="3" y="4" width="1" height="1" fill="#000000"/><rect x="10" y="4" width="1" height="1" fill="#000000"/><rect x="2" y="5" width="2" height="1" fill="#000000"/><rect x="10" y="5" width="1" height="1" fill="#000000"/><rect x="1" y="6" width="3" height="1" fill="#000000"/><rect x="9" y="6" width="1" height="1" fill="#000000"/><rect x="0" y="7" width="9" height="1" fill="#000000"/><rect x="1" y="8" width="3" height="1" fill="#000000"/><rect x="2" y="9" width="2" height="1" fill="#000000"/><rect x="3" y="10" width="1" height="1" fill="#000000"/></svg>
<div class="t" style="left:886px;top:796px;font-size:11px;">174</div>
<svg class="ic" style="left:934px;top:800px" width="11" height="11" shape-rendering="crispEdges"><rect x="0" y="0" width="9" height="1" fill="#000000"/><rect x="9" y="1" width="1" height="1" fill="#000000"/><rect x="10" y="2" width="1" height="1" fill="#000000"/><rect x="10" y="3" width="1" height="1" fill="#000000"/><rect x="3" y="4" width="1" height="1" fill="#000000"/><rect x="10" y="4" width="1" height="1" fill="#000000"/><rect x="2" y="5" width="2" height="1" fill="#000000"/><rect x="10" y="5" width="1" height="1" fill="#000000"/><rect x="1" y="6" width="3" height="1" fill="#000000"/><rect x="9" y="6" width="1" height="1" fill="#000000"/><rect x="0" y="7" width="9" height="1" fill="#000000"/><rect x="1" y="8" width="3" height="1" fill="#000000"/><rect x="2" y="9" width="2" height="1" fill="#000000"/><rect x="3" y="10" width="1" height="1" fill="#000000"/></svg>
<div class="t" style="left:968px;top:796px;font-size:11px;">250.6</div>
<div class="r" style="left:3px;top:817px;width:32px;height:17px;background:#ffffff"></div>
<div class="r" style="left:37px;top:817px;width:53px;height:17px;background:#ffffff"></div>
<div class="r" style="left:92px;top:817px;width:160px;height:17px;background:#ffffff"></div>
<div class="r" style="left:254px;top:817px;width:244px;height:17px;background:#ffffff"></div>
<div class="r" style="left:500px;top:817px;width:130px;height:17px;background:#ffffff"></div>
<div class="r" style="left:632px;top:817px;width:96px;height:17px;background:#ffffff"></div>
<div class="r" style="left:730px;top:817px;width:32px;height:17px;background:#ffffff"></div>
<div class="r" style="left:764px;top:817px;width:85px;height:17px;background:#ffffff"></div>
<div class="r" style="left:851px;top:817px;width:32px;height:17px;background:#ffffff"></div>
<div class="r" style="left:885px;top:817px;width:46px;height:17px;background:#ffffff"></div>
<div class="r" style="left:933px;top:817px;width:32px;height:17px;background:#ffffff"></div>
<div class="r" style="left:967px;top:817px;width:53px;height:17px;background:#ffffff"></div>
<div class="r" style="left:1022px;top:817px;width:75px;height:17px;background:#ffffff"></div>
<div class="t bd" style="left:4px;top:815px;font-size:11px;font-weight:bold;color:#ff0000;">33</div>
<div class="t bd" style="left:93px;top:815px;font-size:11px;font-weight:bold;color:#ff0000;">31</div>
<svg class="ic" style="left:255px;top:822px" width="11" height="11" shape-rendering="crispEdges"><rect x="0" y="0" width="11" height="1" fill="#0000ff"/><rect x="0" y="1" width="1" height="1" fill="#0000ff"/><rect x="1" y="1" width="9" height="1" fill="#ffffff"/><rect x="10" y="1" width="1" height="1" fill="#0000ff"/><rect x="0" y="2" width="1" height="1" fill="#0000ff"/><rect x="1" y="2" width="9" height="1" fill="#ffffff"/><rect x="10" y="2" width="1" height="1" fill="#0000ff"/><rect x="0" y="3" width="4" height="1" fill="#0000ff"/><rect x="4" y="3" width="3" height="1" fill="#ffffff"/><rect x="7" y="3" width="4" height="1" fill="#0000ff"/><rect x="0" y="4" width="4" height="1" fill="#0000ff"/><rect x="4" y="4" width="3" height="1" fill="#ffffff"/><rect x="7" y="4" width="4" height="1" fill="#0000ff"/><rect x="0" y="5" width="4" height="1" fill="#0000ff"/><rect x="4" y="5" width="3" height="1" fill="#ffffff"/><rect x="7" y="5" width="4" height="1" fill="#0000ff"/><rect x="0" y="6" width="4" height="1" fill="#0000ff"/><rect x="4" y="6" width="3" height="1" fill="#ffffff"/><rect x="7" y="6" width="4" height="1" fill="#0000ff"/><rect x="0" y="7" width="4" height="1" fill="#0000ff"/><rect x="4" y="7" width="3" height="1" fill="#ffffff"/><rect x="7" y="7" width="4" height="1" fill="#0000ff"/><rect x="0" y="8" width="1" height="1" fill="#0000ff"/><rect x="1" y="8" width="9" height="1" fill="#ffffff"/><rect x="10" y="8" width="1" height="1" fill="#0000ff"/><rect x="0" y="9" width="1" height="1" fill="#0000ff"/><rect x="1" y="9" width="9" height="1" fill="#ffffff"/><rect x="10" y="9" width="1" height="1" fill="#0000ff"/><rect x="0" y="10" width="11" height="1" fill="#0000ff"/></svg>
<div class="t bd" style="left:275px;top:814px;font-size:11px;font-weight:bold;color:#ff0000;">GEMIDDELD BE</div>
<div class="t bd" style="left:501px;top:815px;font-size:11px;font-weight:bold;color:#ff0000;">Belgi&euml;</div>
<div class="t bd" style="left:633px;top:815px;font-size:11px;font-weight:bold;color:#ff0000;">8</div>
<svg class="ic" style="left:731px;top:822px" width="11" height="7" shape-rendering="crispEdges"><rect x="3" y="0" width="1" height="1" fill="#ff7800"/><rect x="7" y="0" width="1" height="1" fill="#ff7800"/><rect x="2" y="1" width="2" height="1" fill="#ff7800"/><rect x="7" y="1" width="2" height="1" fill="#ff7800"/><rect x="1" y="2" width="3" height="1" fill="#ff7800"/><rect x="7" y="2" width="3" height="1" fill="#ff7800"/><rect x="0" y="3" width="11" height="1" fill="#ff7800"/><rect x="1" y="4" width="3" height="1" fill="#ff7800"/><rect x="7" y="4" width="3" height="1" fill="#ff7800"/><rect x="2" y="5" width="2" height="1" fill="#ff7800"/><rect x="7" y="5" width="2" height="1" fill="#ff7800"/><rect x="3" y="6" width="1" height="1" fill="#ff7800"/><rect x="7" y="6" width="1" height="1" fill="#ff7800"/></svg>
<div class="t bd" style="left:765px;top:815px;font-size:11px;font-weight:bold;color:#ff0000;">40</div>
<svg class="ic" style="left:852px;top:820px" width="11" height="11" shape-rendering="crispEdges"><rect x="0" y="0" width="9" height="1" fill="#000000"/><rect x="9" y="1" width="1" height="1" fill="#000000"/><rect x="10" y="2" width="1" height="1" fill="#000000"/><rect x="10" y="3" width="1" height="1" fill="#000000"/><rect x="3" y="4" width="1" height="1" fill="#000000"/><rect x="10" y="4" width="1" height="1" fill="#000000"/><rect x="2" y="5" width="2" height="1" fill="#000000"/><rect x="10" y="5" width="1" height="1" fill="#000000"/><rect x="1" y="6" width="3" height="1" fill="#000000"/><rect x="9" y="6" width="1" height="1" fill="#000000"/><rect x="0" y="7" width="9" height="1" fill="#000000"/><rect x="1" y="8" width="3" height="1" fill="#000000"/><rect x="2" y="9" width="2" height="1" fill="#000000"/><rect x="3" y="10" width="1" height="1" fill="#000000"/></svg>
<div class="t bd" style="left:886px;top:815px;font-size:11px;font-weight:bold;color:#ff0000;">164</div>
<svg class="ic" style="left:934px;top:820px" width="11" height="11" shape-rendering="crispEdges"><rect x="0" y="0" width="9" height="1" fill="#000000"/><rect x="9" y="1" width="1" height="1" fill="#000000"/><rect x="10" y="2" width="1" height="1" fill="#000000"/><rect x="10" y="3" width="1" height="1" fill="#000000"/><rect x="3" y="4" width="1" height="1" fill="#000000"/><rect x="10" y="4" width="1" height="1" fill="#000000"/><rect x="2" y="5" width="2" height="1" fill="#000000"/><rect x="10" y="5" width="1" height="1" fill="#000000"/><rect x="1" y="6" width="3" height="1" fill="#000000"/><rect x="9" y="6" width="1" height="1" fill="#000000"/><rect x="0" y="7" width="9" height="1" fill="#000000"/><rect x="1" y="8" width="3" height="1" fill="#000000"/><rect x="2" y="9" width="2" height="1" fill="#000000"/><rect x="3" y="10" width="1" height="1" fill="#000000"/></svg>
<div class="t bd" style="left:968px;top:815px;font-size:11px;font-weight:bold;color:#ff0000;">250.5</div>
<div class="r" style="left:3px;top:836px;width:32px;height:18px;background:#ffffff"></div>
<div class="r" style="left:37px;top:836px;width:53px;height:18px;background:#ffffff"></div>
<div class="r" style="left:92px;top:836px;width:160px;height:18px;background:#ffffff"></div>
<div class="r" style="left:254px;top:836px;width:244px;height:18px;background:#ffffff"></div>
<div class="r" style="left:500px;top:836px;width:130px;height:18px;background:#ffffff"></div>
<div class="r" style="left:632px;top:836px;width:96px;height:18px;background:#ffffff"></div>
<div class="r" style="left:730px;top:836px;width:32px;height:18px;background:#ffffff"></div>
<div class="r" style="left:764px;top:836px;width:85px;height:18px;background:#ffffff"></div>
<div class="r" style="left:851px;top:836px;width:32px;height:18px;background:#ffffff"></div>
<div class="r" style="left:885px;top:836px;width:46px;height:18px;background:#ffffff"></div>
<div class="r" style="left:933px;top:836px;width:32px;height:18px;background:#ffffff"></div>
<div class="r" style="left:967px;top:836px;width:53px;height:18px;background:#ffffff"></div>
<div class="r" style="left:1022px;top:836px;width:75px;height:18px;background:#ffffff"></div>
<div class="t" style="left:4px;top:835px;font-size:11px;">33</div>
<svg class="ic" style="left:38px;top:838px" width="7" height="11" shape-rendering="crispEdges"><rect x="3" y="0" width="1" height="1" fill="#ff0000"/><rect x="3" y="1" width="1" height="1" fill="#ff0000"/><rect x="3" y="2" width="1" height="1" fill="#ff0000"/><rect x="3" y="3" width="1" height="1" fill="#ff0000"/><rect x="3" y="4" width="1" height="1" fill="#ff0000"/><rect x="3" y="5" width="1" height="1" fill="#ff0000"/><rect x="3" y="6" width="1" height="1" fill="#ff0000"/><rect x="0" y="7" width="7" height="1" fill="#ff0000"/><rect x="1" y="8" width="5" height="1" fill="#ff0000"/><rect x="2" y="9" width="3" height="1" fill="#ff0000"/><rect x="3" y="10" width="1" height="1" fill="#ff0000"/></svg>
<div class="t" style="left:48px;top:835px;font-size:11px;">(-2)</div>
<div class="t" style="left:93px;top:835px;font-size:11px;">19</div>
<svg class="ic" style="left:255px;top:842px" width="11" height="11" shape-rendering="crispEdges"><rect x="0" y="0" width="11" height="1" fill="#0000ff"/><rect x="0" y="1" width="1" height="1" fill="#0000ff"/><rect x="1" y="1" width="9" height="1" fill="#ffffff"/><rect x="10" y="1" width="1" height="1" fill="#0000ff"/><rect x="0" y="2" width="1" height="1" fill="#0000ff"/><rect x="1" y="2" width="9" height="1" fill="#ffffff"/><rect x="10" y="2" width="1" height="1" fill="#0000ff"/><rect x="0" y="3" width="4" height="1" fill="#0000ff"/><rect x="4" y="3" width="3" height="1" fill="#ffffff"/><rect x="7" y="3" width="4" height="1" fill="#0000ff"/><rect x="0" y="4" width="4" height="1" fill="#0000ff"/><rect x="4" y="4" width="3" height="1" fill="#ffffff"/><rect x="7" y="4" width="4" height="1" fill="#0000ff"/><rect x="0" y="5" width="4" height="1" fill="#0000ff"/><rect x="4" y="5" width="3" height="1" fill="#ffffff"/><rect x="7" y="5" width="4" height="1" fill="#0000ff"/><rect x="0" y="6" width="4" height="1" fill="#0000ff"/><rect x="4" y="6" width="3" height="1" fill="#ffffff"/><rect x="7" y="6" width="4" height="1" fill="#0000ff"/><rect x="0" y="7" width="4" height="1" fill="#0000ff"/><rect x="4" y="7" width="3" height="1" fill="#ffffff"/><rect x="7" y="7" width="4" height="1" fill="#0000ff"/><rect x="0" y="8" width="1" height="1" fill="#0000ff"/><rect x="1" y="8" width="9" height="1" fill="#ffffff"/><rect x="10" y="8" width="1" height="1" fill="#0000ff"/><rect x="0" y="9" width="1" height="1" fill="#0000ff"/><rect x="1" y="9" width="9" height="1" fill="#ffffff"/><rect x="10" y="9" width="1" height="1" fill="#0000ff"/><rect x="0" y="10" width="11" height="1" fill="#0000ff"/></svg>
<div class="t" style="left:275px;top:833px;font-size:11px;">Theo (Utrecht)</div>
<div class="t" style="left:501px;top:835px;font-size:11px;">Nederland</div>
<div class="t" style="left:633px;top:835px;font-size:11px;">8.4</div>
<svg class="ic" style="left:731px;top:841px" width="11" height="7" shape-rendering="crispEdges"><rect x="3" y="0" width="1" height="1" fill="#ff7800"/><rect x="7" y="0" width="1" height="1" fill="#ff7800"/><rect x="2" y="1" width="2" height="1" fill="#ff7800"/><rect x="7" y="1" width="2" height="1" fill="#ff7800"/><rect x="1" y="2" width="3" height="1" fill="#ff7800"/><rect x="7" y="2" width="3" height="1" fill="#ff7800"/><rect x="0" y="3" width="11" height="1" fill="#ff7800"/><rect x="1" y="4" width="3" height="1" fill="#ff7800"/><rect x="7" y="4" width="3" height="1" fill="#ff7800"/><rect x="2" y="5" width="2" height="1" fill="#ff7800"/><rect x="7" y="5" width="2" height="1" fill="#ff7800"/><rect x="3" y="6" width="1" height="1" fill="#ff7800"/><rect x="7" y="6" width="1" height="1" fill="#ff7800"/></svg>
<div class="t" style="left:765px;top:835px;font-size:11px;">25</div>
<svg class="ic" style="left:852px;top:839px" width="11" height="11" shape-rendering="crispEdges"><rect x="0" y="0" width="9" height="1" fill="#000000"/><rect x="9" y="1" width="1" height="1" fill="#000000"/><rect x="10" y="2" width="1" height="1" fill="#000000"/><rect x="10" y="3" width="1" height="1" fill="#000000"/><rect x="3" y="4" width="1" height="1" fill="#000000"/><rect x="10" y="4" width="1" height="1" fill="#000000"/><rect x="2" y="5" width="2" height="1" fill="#000000"/><rect x="10" y="5" width="1" height="1" fill="#000000"/><rect x="1" y="6" width="3" height="1" fill="#000000"/><rect x="9" y="6" width="1" height="1" fill="#000000"/><rect x="0" y="7" width="9" height="1" fill="#000000"/><rect x="1" y="8" width="3" height="1" fill="#000000"/><rect x="2" y="9" width="2" height="1" fill="#000000"/><rect x="3" y="10" width="1" height="1" fill="#000000"/></svg>
<div class="t" style="left:886px;top:835px;font-size:11px;">189</div>
<svg class="ic" style="left:934px;top:839px" width="11" height="11" shape-rendering="crispEdges"><rect x="0" y="0" width="9" height="1" fill="#000000"/><rect x="9" y="1" width="1" height="1" fill="#000000"/><rect x="10" y="2" width="1" height="1" fill="#000000"/><rect x="10" y="3" width="1" height="1" fill="#000000"/><rect x="3" y="4" width="1" height="1" fill="#000000"/><rect x="10" y="4" width="1" height="1" fill="#000000"/><rect x="2" y="5" width="2" height="1" fill="#000000"/><rect x="10" y="5" width="1" height="1" fill="#000000"/><rect x="1" y="6" width="3" height="1" fill="#000000"/><rect x="9" y="6" width="1" height="1" fill="#000000"/><rect x="0" y="7" width="9" height="1" fill="#000000"/><rect x="1" y="8" width="3" height="1" fill="#000000"/><rect x="2" y="9" width="2" height="1" fill="#000000"/><rect x="3" y="10" width="1" height="1" fill="#000000"/></svg>
<div class="t" style="left:968px;top:835px;font-size:11px;">250.5</div>
<div class="r" style="left:3px;top:856px;width:32px;height:17px;background:#ffffff"></div>
<div class="r" style="left:37px;top:856px;width:53px;height:17px;background:#ffffff"></div>
<div class="r" style="left:92px;top:856px;width:160px;height:17px;background:#ffffff"></div>
<div class="r" style="left:254px;top:856px;width:244px;height:17px;background:#ffffff"></div>
<div class="r" style="left:500px;top:856px;width:130px;height:17px;background:#ffffff"></div>
<div class="r" style="left:632px;top:856px;width:96px;height:17px;background:#ffffff"></div>
<div class="r" style="left:730px;top:856px;width:32px;height:17px;background:#ffffff"></div>
<div class="r" style="left:764px;top:856px;width:85px;height:17px;background:#ffffff"></div>
<div class="r" style="left:851px;top:856px;width:32px;height:17px;background:#ffffff"></div>
<div class="r" style="left:885px;top:856px;width:46px;height:17px;background:#ffffff"></div>
<div class="r" style="left:933px;top:856px;width:32px;height:17px;background:#ffffff"></div>
<div class="r" style="left:967px;top:856px;width:53px;height:17px;background:#ffffff"></div>
<div class="r" style="left:1022px;top:856px;width:75px;height:17px;background:#ffffff"></div>
<div class="t" style="left:4px;top:854px;font-size:11px;">35</div>
<div class="t" style="left:93px;top:854px;font-size:11px;">20</div>
<svg class="ic" style="left:255px;top:861px" width="11" height="11" shape-rendering="crispEdges"><rect x="0" y="0" width="11" height="1" fill="#0000ff"/><rect x="0" y="1" width="1" height="1" fill="#0000ff"/><rect x="1" y="1" width="9" height="1" fill="#ffffff"/><rect x="10" y="1" width="1" height="1" fill="#0000ff"/><rect x="0" y="2" width="1" height="1" fill="#0000ff"/><rect x="1" y="2" width="9" height="1" fill="#ffffff"/><rect x="10" y="2" width="1" height="1" fill="#0000ff"/><rect x="0" y="3" width="4" height="1" fill="#0000ff"/><rect x="4" y="3" width="3" height="1" fill="#ffffff"/><rect x="7" y="3" width="4" height="1" fill="#0000ff"/><rect x="0" y="4" width="4" height="1" fill="#0000ff"/><rect x="4" y="4" width="3" height="1" fill="#ffffff"/><rect x="7" y="4" width="4" height="1" fill="#0000ff"/><rect x="0" y="5" width="4" height="1" fill="#0000ff"/><rect x="4" y="5" width="3" height="1" fill="#ffffff"/><rect x="7" y="5" width="4" height="1" fill="#0000ff"/><rect x="0" y="6" width="4" height="1" fill="#0000ff"/><rect x="4" y="6" width="3" height="1" fill="#ffffff"/><rect x="7" y="6" width="4" height="1" fill="#0000ff"/><rect x="0" y="7" width="4" height="1" fill="#0000ff"/><rect x="4" y="7" width="3" height="1" fill="#ffffff"/><rect x="7" y="7" width="4" height="1" fill="#0000ff"/><rect x="0" y="8" width="1" height="1" fill="#0000ff"/><rect x="1" y="8" width="9" height="1" fill="#ffffff"/><rect x="10" y="8" width="1" height="1" fill="#0000ff"/><rect x="0" y="9" width="1" height="1" fill="#0000ff"/><rect x="1" y="9" width="9" height="1" fill="#ffffff"/><rect x="10" y="9" width="1" height="1" fill="#0000ff"/><rect x="0" y="10" width="11" height="1" fill="#0000ff"/></svg>
<div class="t" style="left:275px;top:853px;font-size:11px;">Kevin (Tessenderlo)</div>
<div class="t" style="left:501px;top:854px;font-size:11px;">Belgi&euml;</div>
<div class="t" style="left:633px;top:854px;font-size:11px;">8.2</div>
<svg class="ic" style="left:731px;top:861px" width="11" height="7" shape-rendering="crispEdges"><rect x="3" y="0" width="1" height="1" fill="#ff7800"/><rect x="7" y="0" width="1" height="1" fill="#ff7800"/><rect x="2" y="1" width="2" height="1" fill="#ff7800"/><rect x="7" y="1" width="2" height="1" fill="#ff7800"/><rect x="1" y="2" width="3" height="1" fill="#ff7800"/><rect x="7" y="2" width="3" height="1" fill="#ff7800"/><rect x="0" y="3" width="11" height="1" fill="#ff7800"/><rect x="1" y="4" width="3" height="1" fill="#ff7800"/><rect x="7" y="4" width="3" height="1" fill="#ff7800"/><rect x="2" y="5" width="2" height="1" fill="#ff7800"/><rect x="7" y="5" width="2" height="1" fill="#ff7800"/><rect x="3" y="6" width="1" height="1" fill="#ff7800"/><rect x="7" y="6" width="1" height="1" fill="#ff7800"/></svg>
<div class="t" style="left:765px;top:854px;font-size:11px;">39</div>
<svg class="ic" style="left:852px;top:859px" width="11" height="11" shape-rendering="crispEdges"><rect x="0" y="0" width="9" height="1" fill="#000000"/><rect x="9" y="1" width="1" height="1" fill="#000000"/><rect x="10" y="2" width="1" height="1" fill="#000000"/><rect x="10" y="3" width="1" height="1" fill="#000000"/><rect x="3" y="4" width="1" height="1" fill="#000000"/><rect x="10" y="4" width="1" height="1" fill="#000000"/><rect x="2" y="5" width="2" height="1" fill="#000000"/><rect x="10" y="5" width="1" height="1" fill="#000000"/><rect x="1" y="6" width="3" height="1" fill="#000000"/><rect x="9" y="6" width="1" height="1" fill="#000000"/><rect x="0" y="7" width="9" height="1" fill="#000000"/><rect x="1" y="8" width="3" height="1" fill="#000000"/><rect x="2" y="9" width="2" height="1" fill="#000000"/><rect x="3" y="10" width="1" height="1" fill="#000000"/></svg>
<div class="t" style="left:886px;top:854px;font-size:11px;">165</div>
<svg class="ic" style="left:934px;top:859px" width="11" height="11" shape-rendering="crispEdges"><rect x="0" y="0" width="9" height="1" fill="#000000"/><rect x="9" y="1" width="1" height="1" fill="#000000"/><rect x="10" y="2" width="1" height="1" fill="#000000"/><rect x="10" y="3" width="1" height="1" fill="#000000"/><rect x="3" y="4" width="1" height="1" fill="#000000"/><rect x="10" y="4" width="1" height="1" fill="#000000"/><rect x="2" y="5" width="2" height="1" fill="#000000"/><rect x="10" y="5" width="1" height="1" fill="#000000"/><rect x="1" y="6" width="3" height="1" fill="#000000"/><rect x="9" y="6" width="1" height="1" fill="#000000"/><rect x="0" y="7" width="9" height="1" fill="#000000"/><rect x="1" y="8" width="3" height="1" fill="#000000"/><rect x="2" y="9" width="2" height="1" fill="#000000"/><rect x="3" y="10" width="1" height="1" fill="#000000"/></svg>
<div class="t" style="left:968px;top:854px;font-size:11px;">250.3</div>
</body></html>
